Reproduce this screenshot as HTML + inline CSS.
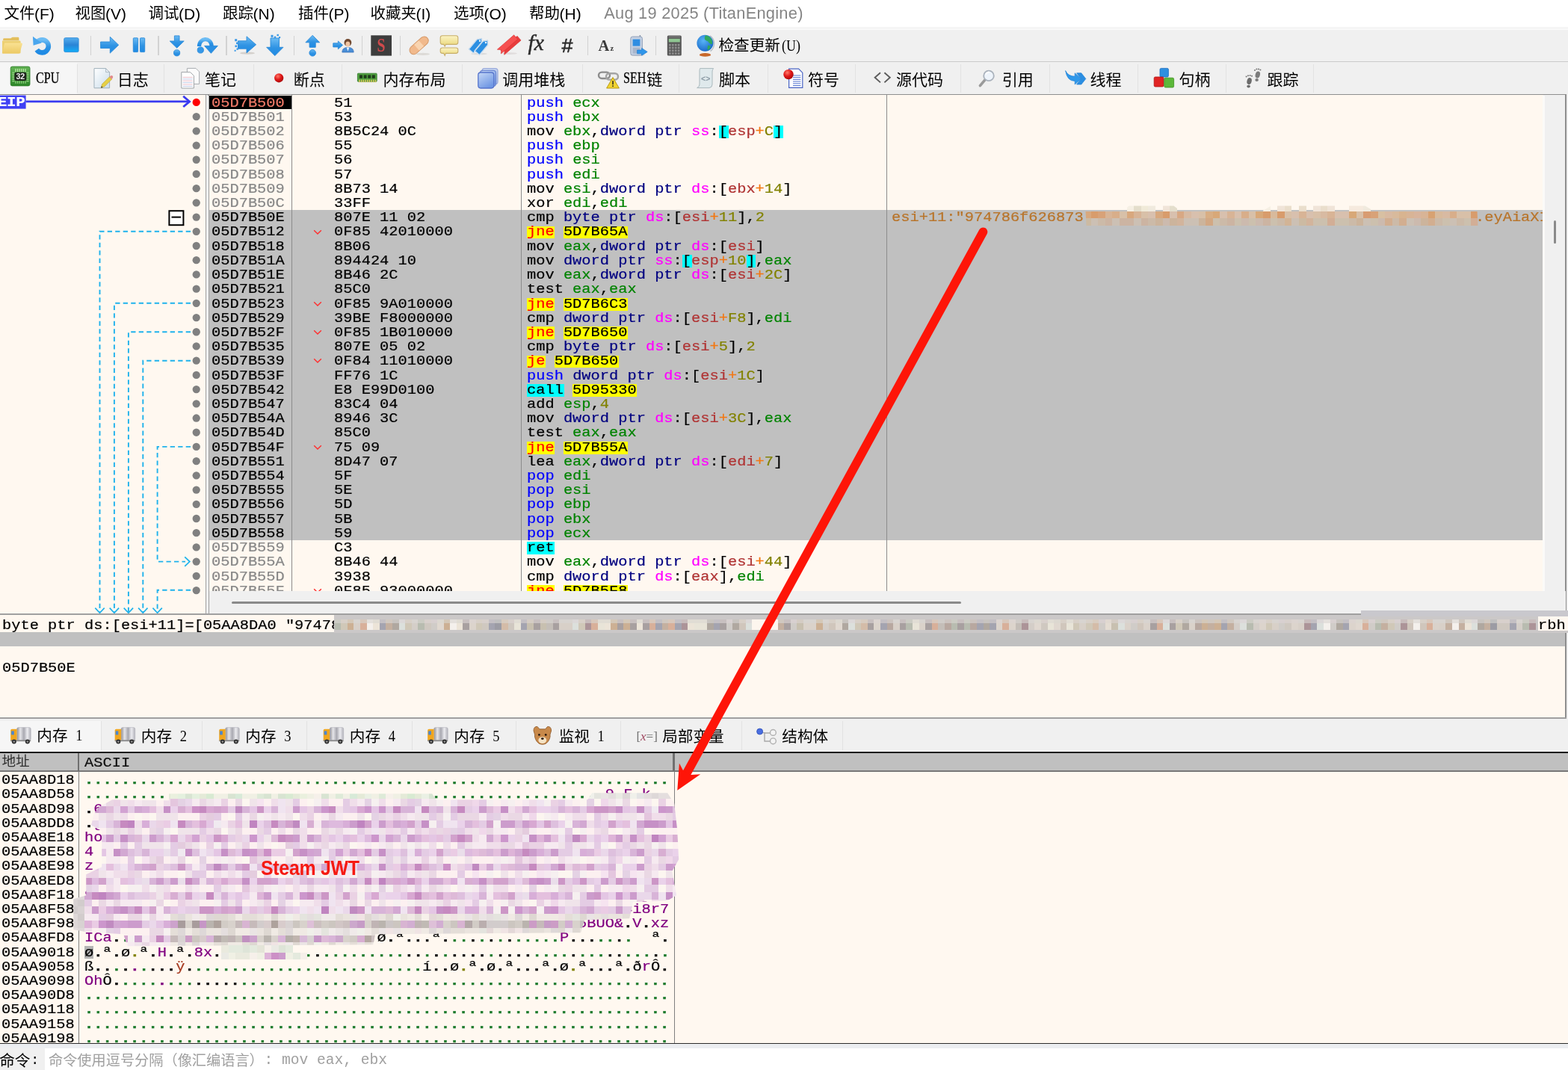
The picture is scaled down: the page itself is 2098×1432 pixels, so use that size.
<!DOCTYPE html>
<html lang="zh"><head><meta charset="utf-8"><title>x32dbg</title>
<style>
html,body{margin:0;padding:0}
body{width:2098px;height:1432px;overflow:hidden;background:#f0f0f0;position:relative;font-family:"Liberation Sans",sans-serif}
.b,.t,.m,.ht,.ic{position:absolute}
.t{white-space:pre}
.m{white-space:pre;font-family:"Liberation Mono",monospace;font-size:18.95px;height:19.21px;line-height:19.21px;transform:scaleX(1.0755);transform-origin:0 0;color:#000;-webkit-text-stroke:0.22px currentColor}
.ht{color:#000;white-space:nowrap;line-height:1;font-family:"Liberation Sans","Noto Sans CJK SC",sans-serif}
.m,.t,.ht,.ic{filter:blur(0.4px)}
.ic{overflow:visible}
</style></head><body>
<div class="b" style="left:0.00px;top:0.00px;width:2098.00px;height:36.00px;background:#ffffff;"></div>
<div class="b" style="left:0.00px;top:36.00px;width:2098.00px;height:3.00px;background:#f5f5f5;"></div>
<div class="b" style="left:0.00px;top:39.00px;width:2098.00px;height:1.20px;background:#fbfbfb;"></div>
<span class="ht" style="left:5.40px;top:8.35px;font-size:20.50px;width:41.00px">文件</span>
<span class="t" style="left:46.00px;top:5.95px;height:25.20px;line-height:25.20px;font-size:21.00px;color:#000;font-family:'Liberation Sans',sans-serif;">(F)</span>
<span class="ht" style="left:100.40px;top:8.35px;font-size:20.50px;width:41.00px">视图</span>
<span class="t" style="left:141.00px;top:5.95px;height:25.20px;line-height:25.20px;font-size:21.00px;color:#000;font-family:'Liberation Sans',sans-serif;">(V)</span>
<span class="ht" style="left:198.40px;top:8.35px;font-size:20.50px;width:41.00px">调试</span>
<span class="t" style="left:239.00px;top:5.95px;height:25.20px;line-height:25.20px;font-size:21.00px;color:#000;font-family:'Liberation Sans',sans-serif;">(D)</span>
<span class="ht" style="left:297.90px;top:8.35px;font-size:20.50px;width:41.00px">跟踪</span>
<span class="t" style="left:338.50px;top:5.95px;height:25.20px;line-height:25.20px;font-size:21.00px;color:#000;font-family:'Liberation Sans',sans-serif;">(N)</span>
<span class="ht" style="left:398.90px;top:8.35px;font-size:20.50px;width:41.00px">插件</span>
<span class="t" style="left:439.50px;top:5.95px;height:25.20px;line-height:25.20px;font-size:21.00px;color:#000;font-family:'Liberation Sans',sans-serif;">(P)</span>
<span class="ht" style="left:495.40px;top:8.35px;font-size:20.50px;width:61.50px">收藏夹</span>
<span class="t" style="left:556.50px;top:5.95px;height:25.20px;line-height:25.20px;font-size:21.00px;color:#000;font-family:'Liberation Sans',sans-serif;">(I)</span>
<span class="ht" style="left:606.90px;top:8.35px;font-size:20.50px;width:41.00px">选项</span>
<span class="t" style="left:647.50px;top:5.95px;height:25.20px;line-height:25.20px;font-size:21.00px;color:#000;font-family:'Liberation Sans',sans-serif;">(O)</span>
<span class="ht" style="left:707.90px;top:8.35px;font-size:20.50px;width:41.00px">帮助</span>
<span class="t" style="left:748.50px;top:5.95px;height:25.20px;line-height:25.20px;font-size:21.00px;color:#000;font-family:'Liberation Sans',sans-serif;">(H)</span>
<span class="t" style="left:808.20px;top:5.47px;height:26.16px;line-height:26.16px;font-size:21.80px;color:#858585;font-family:'Liberation Sans',sans-serif;letter-spacing:0.27px">Aug 19 2025 (TitanEngine)</span>
<div class="b" style="left:0.00px;top:40.20px;width:2098.00px;height:43.00px;background:#f0f0f0;"></div>
<div class="b" style="left:0.00px;top:81.90px;width:2098.00px;height:1.60px;background:#cbcbcb;"></div>
<div class="b" style="left:120.55px;top:47.50px;width:1.50px;height:26.00px;background:#d2d2d2;"></div>
<div class="b" style="left:211.45px;top:47.50px;width:1.50px;height:26.00px;background:#d2d2d2;"></div>
<div class="b" style="left:302.35px;top:47.50px;width:1.50px;height:26.00px;background:#d2d2d2;"></div>
<div class="b" style="left:392.55px;top:47.50px;width:1.50px;height:26.00px;background:#d2d2d2;"></div>
<div class="b" style="left:483.65px;top:47.50px;width:1.50px;height:26.00px;background:#d2d2d2;"></div>
<div class="b" style="left:534.55px;top:47.50px;width:1.50px;height:26.00px;background:#d2d2d2;"></div>
<div class="b" style="left:785.75px;top:47.50px;width:1.50px;height:26.00px;background:#d2d2d2;"></div>
<div class="b" style="left:876.85px;top:47.50px;width:1.50px;height:26.00px;background:#d2d2d2;"></div>
<svg class="ic" style="left:0;top:0" width="1100" height="84" viewBox="0 0 1100 84"><defs>
<linearGradient id="bl" x1="0" y1="0" x2="0" y2="1"><stop offset="0" stop-color="#6cbcf4"/><stop offset="0.55" stop-color="#2f93e3"/><stop offset="1" stop-color="#1e8ae4"/></linearGradient>
<linearGradient id="bs" x1="0" y1="0" x2="0" y2="1"><stop offset="0" stop-color="#55aeee"/><stop offset="0.5" stop-color="#2a84d6"/><stop offset="1" stop-color="#12aef8"/></linearGradient>
<linearGradient id="fo" x1="0" y1="0" x2="0" y2="1"><stop offset="0" stop-color="#f9e192"/><stop offset="1" stop-color="#ecc964"/></linearGradient>
<radialGradient id="gl" cx="0.4" cy="0.35" r="0.7"><stop offset="0" stop-color="#58b4f6"/><stop offset="1" stop-color="#1766c8"/></radialGradient>
<linearGradient id="cm" x1="0" y1="0" x2="0" y2="1"><stop offset="0" stop-color="#fbf3c4"/><stop offset="1" stop-color="#ead778"/></linearGradient>
</defs><path d="M4.2 54.2 v-1.7 q0-1.3 1.3-1.3 h8.7 l2.4-1.5 h7.4 q1.4 0 1.4 1.4 v3.1z" fill="#e3bf5c"/><path d="M3 54.6 h23.4 q1.2 0 1.2 1.2 V70.2 q0 1.3-1.3 1.3 H4.3 q-1.3 0-1.3-1.3z" fill="#edd072"/><path d="M6.2 57.6 h22.4 q1.7 0 1.2 1.6 l-3.2 10.8 q-.5 1.5-2 1.5 H3.6 q-1 0-.7-1z" fill="url(#fo)"/><path d="M50.2 56 A8.5 8.5 0 1 1 49.3 66.6" fill="none" stroke="url(#bl)" stroke-width="6.6"/><path d="M43.9 48.7 L55.6 57.4 L44.6 60.8 Z" fill="#4aa6ee"/><rect x="85.8" y="50.7" width="19.3" height="18.9" rx="1.6" fill="url(#bs)" stroke="#2b8ad8" stroke-width="0.9" stroke-linejoin="round"/><path d="M134.6 56 H147.3 V49.3 L158.7 60.2 L147.3 71.1 V64.5 H134.6 Z" fill="url(#bl)" stroke="#2b8ad8" stroke-width="0.9" stroke-linejoin="round"/><rect x="178.3" y="50.8" width="6.3" height="18.8" rx="0.8" fill="url(#bl)" stroke="#2b8ad8" stroke-width="0.9" stroke-linejoin="round"/><rect x="187.5" y="50.8" width="6.2" height="18.8" rx="0.8" fill="url(#bl)" stroke="#2b8ad8" stroke-width="0.9" stroke-linejoin="round"/><path d="M233.4 47.9 H240 V55 H246.2 L236.7 64.2 L227.3 55 H233.4 Z" fill="url(#bl)" stroke="#2b8ad8" stroke-width="0.9" stroke-linejoin="round"/><circle cx="236.6" cy="70.8" r="4.1" fill="url(#bl)" stroke="#2b8ad8" stroke-width="0.9" stroke-linejoin="round"/><path d="M266.5 62 C266.5 50.5 282 48.5 283.3 62" fill="none" stroke="url(#bl)" stroke-width="5.2"/><path d="M273.6 61.4 H291.3 L282.4 71.3 Z" fill="#2a90e4" stroke="#2b8ad8" stroke-width="0.9" stroke-linejoin="round"/><circle cx="268.3" cy="67" r="4.1" fill="#3598e8" stroke="#2b8ad8" stroke-width="0.9" stroke-linejoin="round"/><ellipse cx="331" cy="71.2" rx="10" ry="1.6" fill="#d4d0cc"/><path d="M318.5 54.8 H330 V48.8 L342.6 59.8 L330 70.8 V65.2 H318.5 Z" fill="url(#bl)" stroke="#2b8ad8" stroke-width="0.9" stroke-linejoin="round"/><rect x="314.2" y="52.2" width="3.0" height="3.0" fill="#3a98e6"/><rect x="316.0" y="56.5" width="2.6" height="2.6" fill="#3a98e6"/><rect x="314.5" y="60.5" width="2.6" height="2.6" fill="#3a98e6"/><rect x="316.5" y="64.4" width="2.4" height="2.4" fill="#3a98e6"/><rect x="313.6" y="66.8" width="2.0" height="2.0" fill="#3a98e6"/><path d="M362 51 H373.5 V63.3 H379 L367.8 74.6 L356.7 63.3 H362 Z" fill="url(#bl)" stroke="#2b8ad8" stroke-width="0.9" stroke-linejoin="round"/><rect x="362.5" y="46.8" width="3.0" height="3.0" fill="#3a98e6"/><rect x="366.8" y="48.6" width="2.4" height="2.4" fill="#3a98e6"/><rect x="370.5" y="45.8" width="2.4" height="2.4" fill="#3a98e6"/><rect x="373.0" y="49.0" width="2.2" height="2.2" fill="#3a98e6"/><path d="M418.2 47.3 L427.6 56.8 H422.2 V63.3 H414.1 V56.8 H408.9 Z" fill="url(#bl)" stroke="#2b8ad8" stroke-width="0.9" stroke-linejoin="round"/><circle cx="418.2" cy="70.8" r="4.3" fill="url(#bl)" stroke="#2b8ad8" stroke-width="0.9" stroke-linejoin="round"/><path d="M445.8 57.8 H452.4 V55 L458.5 60.4 L452.4 65.7 V62.9 H445.8Z" fill="url(#bl)" stroke="#2b8ad8" stroke-width="0.9" stroke-linejoin="round"/><path d="M457.8 70 q0-6.6 7.7-6.6 q7.7 0 7.7 6.6 z" fill="#4a8ed6" stroke="#2f6cb4" stroke-width="0.7"/><path d="M463.6 63.6 L465.5 68.5 L467.4 63.6 Z" fill="#f0f4f8"/><circle cx="465.4" cy="57" r="4.9" fill="#70482f"/><ellipse cx="465.4" cy="59" rx="3" ry="3.6" fill="#f0c4a2"/><rect x="496.3" y="47.3" width="27.7" height="27.3" fill="#3d3d3d"/><text x="0" y="69.4" text-anchor="middle" transform="translate(510.1,0) scale(0.76,1)" font-family="'Liberation Serif',serif" font-weight="bold" font-size="26" fill="#d04a4c">S</text><ellipse cx="566" cy="72.4" rx="9" ry="1.6" fill="#dcdad6"/><g transform="translate(560.6,60.8) rotate(-42)"><rect x="-15" y="-5.6" width="30" height="11.2" rx="5.6" fill="#f1b98c" stroke="#d49868" stroke-width="1"/><rect x="-4.2" y="-5.1" width="8.4" height="10.2" fill="#f9d4b0"/></g><path d="M592 47.8 h18 q2.8 0 2.8 2.8 v6 q0 2.8-2.8 2.8 h-13.6 l-1.2 2.6 l-1.4-2.6 h-1.8 q-2.8 0-2.8-2.8 v-6 q0-2.8 2.8-2.8z" fill="url(#cm)" stroke="#c7ae6a" stroke-width="1.1"/><path d="M592 64 h18 q2.8 0 2.8 2.6 v2.2 q0 2.6-2.8 2.6 h-13.6 l-1.2 3 l-1.4-3 h-1.8 q-2.8 0-2.8-2.6 v-2.2 q0-2.6 2.8-2.6z" fill="url(#cm)" stroke="#c7ae6a" stroke-width="1.1"/><ellipse cx="641" cy="72" rx="11" ry="1.5" fill="#dcdcdc"/><g transform="translate(637.3,60.2) rotate(-50)"><path d="M-11 -4.3 H6.5 L11.5 0 L6.5 4.3 H-11 Z" fill="#2c8fe2" stroke="#eef4fa" stroke-width="1.6"/><path d="M-11 -4.3 H6.5 L11.5 0 L6.5 4.3 H-11 Z" fill="none" stroke="#9ab8d4" stroke-width="0.5"/><circle cx="7.3" cy="0" r="1.2" fill="#f4f8fc"/></g><g transform="translate(645.4,62.6) rotate(-50)"><path d="M-11 -4.3 H6.5 L11.5 0 L6.5 4.3 H-11 Z" fill="#2c8fe2" stroke="#eef4fa" stroke-width="1.6"/><path d="M-11 -4.3 H6.5 L11.5 0 L6.5 4.3 H-11 Z" fill="none" stroke="#9ab8d4" stroke-width="0.5"/><circle cx="7.3" cy="0" r="1.2" fill="#f4f8fc"/></g><ellipse cx="682" cy="71.6" rx="10" ry="1.4" fill="#e0dcdc"/><g transform="translate(683.6,60.6) rotate(-41)"><path d="M-15 -3.8 H14.5 V3.8 H-15 L-11.2 0 Z" fill="#e83c3c" stroke="#d83030" stroke-width="0.6"/></g><g transform="translate(679.2,59.2) rotate(-41)"><path d="M-15 -3.8 H14.5 V3.8 H-15 L-11.2 0 Z" fill="#f65050" stroke="#d83030" stroke-width="0.6"/></g><text x="706.5" y="67.3" font-family="'Liberation Serif',serif" font-style="italic" font-size="29.5" fill="#2c2c2c" stroke="#2c2c2c" stroke-width="0.45">fx</text><text x="751.2" y="70.3" font-family="'Liberation Sans',sans-serif" font-style="italic" font-size="26.5" fill="#2c2c2c" stroke="#2c2c2c" stroke-width="0.6">#</text><text x="800.6" y="68" font-family="'Liberation Serif',serif" font-weight="bold" font-size="20.5" fill="#3a3a3a">A</text><text x="816.6" y="68" font-family="'Liberation Serif',serif" font-weight="bold" font-size="10.5" fill="#3a3a3a">z</text><ellipse cx="853" cy="73.6" rx="10" ry="1.6" fill="#dcdcdc"/><rect x="855.6" y="47" width="1.6" height="4" fill="#8a98ac"/><rect x="843.8" y="49" width="15.6" height="25" rx="2.6" fill="#c4d0e2" stroke="#8a9ab4" stroke-width="0.9"/><rect x="846.6" y="52.6" width="9.8" height="9" fill="#2f8de2"/><rect x="846.6" y="63.6" width="9.8" height="8" fill="#a8b6cc"/><path d="M852.6 67 H858.6 V64.4 L866.2 69.4 L858.6 74.3 V71.8 H852.6 Z" fill="#2f96ea" stroke="#1d7ad0" stroke-width="0.7"/><rect x="892.8" y="47.4" width="19" height="27.2" rx="1.6" fill="#585858"/><rect x="894.6" y="48.6" width="15.4" height="1.6" fill="#7c7c7c"/><rect x="894.8" y="51.8" width="15" height="4.6" fill="#8fc692"/><rect x="895.1" y="58.9" width="2.6" height="2.6" fill="#8e8e8e"/><rect x="899.0" y="58.9" width="2.6" height="2.6" fill="#8e8e8e"/><rect x="902.9" y="58.9" width="2.6" height="2.6" fill="#8e8e8e"/><rect x="906.8" y="58.9" width="2.6" height="2.6" fill="#8e8e8e"/><rect x="895.1" y="62.7" width="2.6" height="2.6" fill="#8e8e8e"/><rect x="899.0" y="62.7" width="2.6" height="2.6" fill="#8e8e8e"/><rect x="902.9" y="62.7" width="2.6" height="2.6" fill="#8e8e8e"/><rect x="906.8" y="62.7" width="2.6" height="2.6" fill="#8e8e8e"/><rect x="895.1" y="66.5" width="2.6" height="2.6" fill="#8e8e8e"/><rect x="899.0" y="66.5" width="2.6" height="2.6" fill="#8e8e8e"/><rect x="902.9" y="66.5" width="2.6" height="2.6" fill="#8e8e8e"/><rect x="906.8" y="66.5" width="2.6" height="2.6" fill="#8e8e8e"/><rect x="895.1" y="70.3" width="2.6" height="2.6" fill="#8e8e8e"/><rect x="899.0" y="70.3" width="2.6" height="2.6" fill="#8e8e8e"/><rect x="902.9" y="70.3" width="2.6" height="2.6" fill="#8e8e8e"/><rect x="906.8" y="70.3" width="2.6" height="2.6" fill="#8e8e8e"/><ellipse cx="943.5" cy="73.4" rx="7.6" ry="2.3" fill="#c8682a"/><path d="M950 48 A12.6 12.6 0 0 1 950.5 68.5" fill="none" stroke="#b8c0c8" stroke-width="1.6"/><circle cx="943.4" cy="57.8" r="11" fill="url(#gl)"/><path d="M944 47.2 q5 0.5 7.6 4.5 q2 3.5 1.5 7 q-2.5 1 -4.6-1.6 q-1-2.2-3.4-2.6 q-2.6-1.2-2.4-3.6 q0.2-2.2 1.3-3.7z" fill="#2fa860"/><path d="M947.4 60.4 q2.8 0.4 3.6 2.2 q-1.2 3.4-4 5 q-1.4-3.6 0.4-7.2z" fill="#2fa860"/></svg>
<span class="ht" style="left:961.50px;top:50.70px;font-size:20.60px;width:82.40px">检查更新</span>
<span class="t" style="left:1046.00px;top:48.60px;height:24.00px;line-height:24.00px;font-size:20.00px;color:#000;font-family:'Liberation Serif',serif;transform:scaleX(0.9);transform-origin:0 50%">(U)</span>
<div class="b" style="left:0.00px;top:84.00px;width:2098.00px;height:42.00px;background:#f0f0f0;"></div>
<div class="b" style="left:0.00px;top:84.40px;width:103.00px;height:42.00px;background:#f6f6f6;"></div>
<span class="t" style="left:48.40px;top:92.18px;height:25.44px;line-height:25.44px;font-size:21.20px;color:#000;font-family:'Liberation Serif',serif;transform:scaleX(0.76);transform-origin:0 50%;-webkit-text-stroke:0.3px #000">CPU</span>
<div class="b" style="left:103.00px;top:86.00px;width:1.00px;height:38.00px;background:#e2e2e2;"></div>
<span class="ht" style="left:156.70px;top:96.10px;font-size:21.00px;width:42.00px">日志</span>
<div class="b" style="left:219.00px;top:86.00px;width:1.00px;height:38.00px;background:#e2e2e2;"></div>
<span class="ht" style="left:274.00px;top:96.10px;font-size:21.00px;width:42.00px">笔记</span>
<div class="b" style="left:338.50px;top:86.00px;width:1.00px;height:38.00px;background:#e2e2e2;"></div>
<span class="ht" style="left:392.70px;top:96.10px;font-size:21.00px;width:42.00px">断点</span>
<div class="b" style="left:456.70px;top:86.00px;width:1.00px;height:38.00px;background:#e2e2e2;"></div>
<span class="ht" style="left:512.40px;top:96.10px;font-size:21.00px;width:84.00px">内存布局</span>
<div class="b" style="left:617.60px;top:86.00px;width:1.00px;height:38.00px;background:#e2e2e2;"></div>
<span class="ht" style="left:672.20px;top:96.10px;font-size:21.00px;width:84.00px">调用堆栈</span>
<div class="b" style="left:778.90px;top:86.00px;width:1.00px;height:38.00px;background:#e2e2e2;"></div>
<span class="t" style="left:834.40px;top:92.18px;height:25.44px;line-height:25.44px;font-size:21.20px;color:#000;font-family:'Liberation Serif',serif;transform:scaleX(0.76);transform-origin:0 50%;-webkit-text-stroke:0.3px #000">SEH</span>
<span class="ht" style="left:865.20px;top:96.10px;font-size:21.00px;width:21.00px">链</span>
<div class="b" style="left:907.50px;top:86.00px;width:1.00px;height:38.00px;background:#e2e2e2;"></div>
<span class="ht" style="left:962.10px;top:96.10px;font-size:21.00px;width:42.00px">脚本</span>
<div class="b" style="left:1026.50px;top:86.00px;width:1.00px;height:38.00px;background:#e2e2e2;"></div>
<span class="ht" style="left:1081.10px;top:96.10px;font-size:21.00px;width:42.00px">符号</span>
<div class="b" style="left:1144.30px;top:86.00px;width:1.00px;height:38.00px;background:#e2e2e2;"></div>
<span class="ht" style="left:1199.10px;top:96.10px;font-size:21.00px;width:63.00px">源代码</span>
<div class="b" style="left:1285.00px;top:86.00px;width:1.00px;height:38.00px;background:#e2e2e2;"></div>
<span class="ht" style="left:1340.80px;top:96.10px;font-size:21.00px;width:42.00px">引用</span>
<div class="b" style="left:1403.50px;top:86.00px;width:1.00px;height:38.00px;background:#e2e2e2;"></div>
<span class="ht" style="left:1458.40px;top:96.10px;font-size:21.00px;width:42.00px">线程</span>
<div class="b" style="left:1521.90px;top:86.00px;width:1.00px;height:38.00px;background:#e2e2e2;"></div>
<span class="ht" style="left:1577.40px;top:96.10px;font-size:21.00px;width:42.00px">句柄</span>
<div class="b" style="left:1640.30px;top:86.00px;width:1.00px;height:38.00px;background:#e2e2e2;"></div>
<span class="ht" style="left:1695.40px;top:96.10px;font-size:21.00px;width:42.00px">跟踪</span>
<div class="b" style="left:1756.60px;top:86.00px;width:1.00px;height:38.00px;background:#e2e2e2;"></div>
<svg class="ic" style="left:0;top:0" width="1800" height="127" viewBox="0 0 1800 127"><defs>
<linearGradient id="gch" x1="0" y1="0" x2="0" y2="1"><stop offset="0" stop-color="#62b254"/><stop offset="1" stop-color="#2c8628"/></linearGradient>
<linearGradient id="pg" x1="0" y1="0" x2="1" y2="1"><stop offset="0" stop-color="#ffffff"/><stop offset="1" stop-color="#c9dcea"/></linearGradient>
<radialGradient id="rb" cx="0.38" cy="0.32" r="0.75"><stop offset="0" stop-color="#ff7a6a"/><stop offset="0.5" stop-color="#e01818"/><stop offset="1" stop-color="#a00808"/></radialGradient>
<linearGradient id="sq" x1="0" y1="0" x2="0.6" y2="1"><stop offset="0" stop-color="#c6d8f6"/><stop offset="1" stop-color="#6f97e4"/></linearGradient>
<linearGradient id="gy" x1="0" y1="0" x2="0" y2="1"><stop offset="0" stop-color="#d8d8d8"/><stop offset="1" stop-color="#909090"/></linearGradient>
</defs><rect x="14.2" y="89.1" width="25.8" height="25.8" rx="2.2" fill="url(#gch)" stroke="#2a7a26" stroke-width="0.8"/><rect x="20.3" y="92" width="1.3" height="4.2" fill="#b8e6a4"/><rect x="20.3" y="108.4" width="1.3" height="3.4" fill="#8ccc7c"/><rect x="16.3" y="96.6" width="3.2" height="1.2" fill="#9cd68a"/><rect x="35.4" y="96.6" width="3.2" height="1.2" fill="#9cd68a"/><rect x="22.9" y="92" width="1.3" height="4.2" fill="#b8e6a4"/><rect x="22.9" y="108.4" width="1.3" height="3.4" fill="#8ccc7c"/><rect x="16.3" y="98.9" width="3.2" height="1.2" fill="#9cd68a"/><rect x="35.4" y="98.9" width="3.2" height="1.2" fill="#9cd68a"/><rect x="25.5" y="92" width="1.3" height="4.2" fill="#b8e6a4"/><rect x="25.5" y="108.4" width="1.3" height="3.4" fill="#8ccc7c"/><rect x="16.3" y="101.2" width="3.2" height="1.2" fill="#9cd68a"/><rect x="35.4" y="101.2" width="3.2" height="1.2" fill="#9cd68a"/><rect x="28.1" y="92" width="1.3" height="4.2" fill="#b8e6a4"/><rect x="28.1" y="108.4" width="1.3" height="3.4" fill="#8ccc7c"/><rect x="16.3" y="103.5" width="3.2" height="1.2" fill="#9cd68a"/><rect x="35.4" y="103.5" width="3.2" height="1.2" fill="#9cd68a"/><rect x="30.7" y="92" width="1.3" height="4.2" fill="#b8e6a4"/><rect x="30.7" y="108.4" width="1.3" height="3.4" fill="#8ccc7c"/><rect x="16.3" y="105.8" width="3.2" height="1.2" fill="#9cd68a"/><rect x="35.4" y="105.8" width="3.2" height="1.2" fill="#9cd68a"/><rect x="33.3" y="92" width="1.3" height="4.2" fill="#b8e6a4"/><rect x="33.3" y="108.4" width="1.3" height="3.4" fill="#8ccc7c"/><rect x="16.3" y="108.1" width="3.2" height="1.2" fill="#9cd68a"/><rect x="35.4" y="108.1" width="3.2" height="1.2" fill="#9cd68a"/><rect x="19.3" y="96.8" width="16" height="11.2" rx="2.2" fill="#1e261c"/><text x="27.3" y="106.2" text-anchor="middle" font-family="'Liberation Sans',sans-serif" font-weight="bold" font-size="10.6" fill="#f0f0f0">32</text><path d="M126 91.6 H141.6 L146.6 96.6 V117.8 H126 Z" fill="url(#pg)" stroke="#9fb0ba" stroke-width="1"/><path d="M141.6 91.6 V96.6 H146.6 Z" fill="#e6eef4" stroke="#9fb0ba" stroke-width="0.8"/><path d="M135.2 117.6 L136.6 112.6 L146.4 103 L149.6 106 L139.9 115.8 Z" fill="#e6d044" stroke="#b8a030" stroke-width="0.6"/><path d="M146.4 103 L148 101.4 q1.4-1 2.6 0.2 q1.2 1.4 0.2 2.6 L149.6 106 Z" fill="#e28a8a"/><path d="M135.2 117.6 L135.9 115.2 L137.6 116.9 Z" fill="#303030"/><path d="M250.4 91.4 H262 L266.6 96 V112.4 H250.4 Z" fill="#fbfbfb" stroke="#a8acb0" stroke-width="1"/><path d="M242.8 96.6 H254.6 L259.4 101.4 V118 H242.8 Z" fill="#ffffff" stroke="#a0a4a8" stroke-width="1"/><path d="M244.6 103.4 H257.6" stroke="#e4a4b4" stroke-width="0.7"/><path d="M244.6 105.8 H257.6" stroke="#a8b8e0" stroke-width="0.7"/><path d="M244.6 108.2 H257.6" stroke="#e4a4b4" stroke-width="0.7"/><path d="M244.6 110.6 H257.6" stroke="#a8b8e0" stroke-width="0.7"/><path d="M244.6 113.0 H257.6" stroke="#e4a4b4" stroke-width="0.7"/><path d="M244.6 115.4 H257.6" stroke="#a8b8e0" stroke-width="0.7"/><circle cx="373.2" cy="104.3" r="6.1" fill="url(#rb)"/><rect x="478.4" y="98.2" width="25.8" height="11" rx="0.8" fill="#4e9e3e" stroke="#2f7a28" stroke-width="0.8"/><rect x="481.0" y="100.4" width="4" height="4.4" fill="#1e3a1a"/><rect x="486.6" y="100.4" width="4" height="4.4" fill="#1e3a1a"/><rect x="492.2" y="100.4" width="4" height="4.4" fill="#1e3a1a"/><rect x="497.8" y="100.4" width="4" height="4.4" fill="#1e3a1a"/><rect x="480.2" y="106.6" width="1.5" height="3.6" fill="#e0c860"/><rect x="482.9" y="106.6" width="1.5" height="3.6" fill="#e0c860"/><rect x="485.6" y="106.6" width="1.5" height="3.6" fill="#e0c860"/><rect x="488.3" y="106.6" width="1.5" height="3.6" fill="#e0c860"/><rect x="491.0" y="106.6" width="1.5" height="3.6" fill="#e0c860"/><rect x="493.7" y="106.6" width="1.5" height="3.6" fill="#e0c860"/><rect x="496.4" y="106.6" width="1.5" height="3.6" fill="#e0c860"/><rect x="499.1" y="106.6" width="1.5" height="3.6" fill="#e0c860"/><rect x="501.8" y="106.6" width="1.5" height="3.6" fill="#e0c860"/><rect x="645.0" y="91.6" width="21" height="21" rx="3.4" fill="url(#sq)" stroke="#5674cc" stroke-width="1.3" opacity="0.55"/><rect x="642.4" y="94.3" width="21" height="21" rx="3.4" fill="url(#sq)" stroke="#5674cc" stroke-width="1.3" opacity="0.80"/><rect x="639.8" y="97.0" width="21" height="21" rx="3.4" fill="url(#sq)" stroke="#5674cc" stroke-width="1.3" opacity="1.00"/><rect x="801" y="96.6" width="15" height="8.4" rx="4.2" fill="none" stroke="#8c8c8c" stroke-width="2.4"/><rect x="811" y="98.2" width="16" height="8.4" rx="4.2" fill="none" stroke="#a4a4a4" stroke-width="2.4"/><path d="M820 103.6 L828.4 118 H811.6 Z" fill="#f2d430" stroke="#b89a18" stroke-width="1" stroke-linejoin="round"/><rect x="819.3" y="108.2" width="1.5" height="5" fill="#202020"/><rect x="819.3" y="114.4" width="1.5" height="1.6" fill="#202020"/><path d="M936.6 91.6 H954.6 q-1.6 2-1.6 4.4 V113 q0 4-4 4.6 H932.6 q3.4-1.4 3.4-4.6 V95 q0-2 0.6-3.4z" fill="#dfe9ec" stroke="#a9b8bc" stroke-width="1"/><text x="944.2" y="109.4" text-anchor="middle" font-family="'Liberation Sans',sans-serif" font-size="10.5" font-weight="bold" fill="#8a9aa4">&lt;&gt;</text><path d="M1055.6 92.2 H1068.6 L1073.8 97.4 V117.4 H1055.6 Z" fill="#fdfdff" stroke="#4a64c4" stroke-width="1.2"/><path d="M1061 101.0 H1071.4" stroke="#5878d0" stroke-width="1"/><path d="M1061 103.7 H1071.4" stroke="#5878d0" stroke-width="1"/><path d="M1061 106.4 H1071.4" stroke="#5878d0" stroke-width="1"/><path d="M1061 109.1 H1071.4" stroke="#5878d0" stroke-width="1"/><path d="M1061 111.8 H1071.4" stroke="#5878d0" stroke-width="1"/><path d="M1061 114.5 H1071.4" stroke="#5878d0" stroke-width="1"/><circle cx="1055" cy="99.6" r="6.7" fill="url(#rb)"/><path d="M1178 97.2 L1170.6 103.8 L1178 110.4 M1183.4 97.2 L1190.8 103.8 L1183.4 110.4" fill="none" stroke="#5c5c5c" stroke-width="1.9"/><path d="M1318.4 106.4 L1311.4 114.6" stroke="#9a9a9a" stroke-width="3.6" stroke-linecap="round"/><circle cx="1323" cy="101.4" r="6.8" fill="#eef4fb" stroke="#aab2bc" stroke-width="1.8"/><path d="M1319 99.6 q1.4-3 4.8-3.2" fill="none" stroke="#ffffff" stroke-width="1.6"/><path d="M1425.6 94.6 q3.6 7.6 12.6 7.6 v-4.4 l8.4 7.6 l-8.4 7.6 v-4.6 q-10.2 0.4-12.6-13.8z" fill="#2f98ea" stroke="#1f7fd4" stroke-width="0.7"/><path d="M1440.6 97.8 l6.2 0 l6 7.6 l-6 7.6 l-6.2 0 l6-7.6z" fill="#2b8ee2" stroke="#1f7fd4" stroke-width="0.7"/><rect x="1552" y="91.4" width="11.4" height="11.6" rx="1.6" fill="#2f8fe0" stroke="#1c6cc0" stroke-width="0.8"/><rect x="1544.2" y="103" width="12.8" height="13" rx="1.6" fill="#e02424" stroke="#b01010" stroke-width="0.8"/><rect x="1557.8" y="104.2" width="12.8" height="12.8" rx="1.6" fill="#5cb83a" stroke="#3c9020" stroke-width="0.8"/><ellipse cx="1671.6" cy="108.6" rx="3.1" ry="4.6" transform="rotate(14 1671.6 108.6)" fill="#6c6c6c"/><ellipse cx="1670.6" cy="115.6" rx="2.3" ry="1.9" fill="#6c6c6c"/><ellipse cx="1682.8" cy="100" rx="3.1" ry="4.6" transform="rotate(14 1682.8 100)" fill="#7c7c7c"/><ellipse cx="1681.6" cy="107" rx="2.3" ry="1.9" fill="#7c7c7c"/><circle cx="1667.6" cy="102.6" r="1" fill="#747474"/><circle cx="1670.0" cy="101.2" r="1" fill="#747474"/><circle cx="1672.6" cy="101.0" r="1" fill="#747474"/><circle cx="1675.0" cy="101.8" r="1" fill="#747474"/><circle cx="1679.0" cy="94.0" r="1" fill="#747474"/><circle cx="1681.4" cy="92.6" r="1" fill="#747474"/><circle cx="1684.0" cy="92.4" r="1" fill="#747474"/><circle cx="1686.4" cy="93.4" r="1" fill="#747474"/></svg>
<div class="b" style="left:0.00px;top:126.00px;width:2096.10px;height:1.60px;background:#8e8e8e;"></div>
<div class="b" style="left:0.00px;top:127.00px;width:275.00px;height:695.00px;background:#fff8f0;"></div>
<div class="b" style="left:274.70px;top:127.00px;width:1.60px;height:696.00px;background:#a0a0a0;"></div>
<div class="b" style="left:276.30px;top:127.00px;width:2.20px;height:696.00px;background:#f0f0f0;"></div>
<div class="b" style="left:278.50px;top:127.00px;width:1.20px;height:696.00px;background:#a0a0a0;"></div>
<div class="b" style="left:279.70px;top:127.00px;width:1785.60px;height:663.50px;background:#fff8f0;"></div>
<div class="b" style="left:279.70px;top:281.18px;width:1785.60px;height:441.83px;background:#c0c0c0;"></div>
<div class="b" style="left:390.00px;top:127.00px;width:1.20px;height:663.50px;background:#8c8c8c;"></div>
<div class="b" style="left:697.00px;top:127.00px;width:1.20px;height:663.50px;background:#8c8c8c;"></div>
<div class="b" style="left:1186.20px;top:127.00px;width:1.20px;height:663.50px;background:#8c8c8c;"></div>
<div class="b" style="left:279.70px;top:127.50px;width:110.30px;height:18.71px;background:#000000;"></div>
<div class="b" style="left:0;top:127px;width:2066px;height:663.5px;overflow:hidden">
<div class="m" style="left:283.30px;top:1.60px;"><span style="color:#f07a68">05D7B500</span></div>
<div class="m" style="left:447.40px;top:1.60px;">51</div>
<div class="m" style="left:705.30px;top:1.60px;"><span style="color:#0000ff">push</span> <span style="color:#008300">ecx</span></div>
<div class="m" style="left:283.30px;top:20.81px;"><span style="color:#888888">05D7B501</span></div>
<div class="m" style="left:447.40px;top:20.81px;">53</div>
<div class="m" style="left:705.30px;top:20.81px;"><span style="color:#0000ff">push</span> <span style="color:#008300">ebx</span></div>
<div class="m" style="left:283.30px;top:40.02px;"><span style="color:#888888">05D7B502</span></div>
<div class="m" style="left:447.40px;top:40.02px;">8B5C24 0C</div>
<div class="b" style="left:961.83px;top:41.32px;width:12.83px;height:16.71px;background:#00ffff;"></div>
<div class="b" style="left:1035.21px;top:41.32px;width:12.83px;height:16.71px;background:#00ffff;"></div>
<div class="m" style="left:705.30px;top:40.02px;">mov <span style="color:#008300">ebx</span>,<span style="color:#000080">dword ptr</span> <span style="color:#ff00ff">ss</span>:[<span style="color:#b03434">esp</span><span style="color:#f27711">+</span><span style="color:#828200">C</span>]</div>
<div class="m" style="left:283.30px;top:59.23px;"><span style="color:#888888">05D7B506</span></div>
<div class="m" style="left:447.40px;top:59.23px;">55</div>
<div class="m" style="left:705.30px;top:59.23px;"><span style="color:#0000ff">push</span> <span style="color:#008300">ebp</span></div>
<div class="m" style="left:283.30px;top:78.44px;"><span style="color:#888888">05D7B507</span></div>
<div class="m" style="left:447.40px;top:78.44px;">56</div>
<div class="m" style="left:705.30px;top:78.44px;"><span style="color:#0000ff">push</span> <span style="color:#008300">esi</span></div>
<div class="m" style="left:283.30px;top:97.65px;"><span style="color:#888888">05D7B508</span></div>
<div class="m" style="left:447.40px;top:97.65px;">57</div>
<div class="m" style="left:705.30px;top:97.65px;"><span style="color:#0000ff">push</span> <span style="color:#008300">edi</span></div>
<div class="m" style="left:283.30px;top:116.86px;"><span style="color:#888888">05D7B509</span></div>
<div class="m" style="left:447.40px;top:116.86px;">8B73 14</div>
<div class="m" style="left:705.30px;top:116.86px;">mov <span style="color:#008300">esi</span>,<span style="color:#000080">dword ptr</span> <span style="color:#ff00ff">ds</span>:[<span style="color:#b03434">ebx</span><span style="color:#f27711">+</span><span style="color:#828200">14</span>]</div>
<div class="m" style="left:283.30px;top:136.07px;"><span style="color:#888888">05D7B50C</span></div>
<div class="m" style="left:447.40px;top:136.07px;">33FF</div>
<div class="m" style="left:705.30px;top:136.07px;">xor <span style="color:#008300">edi</span>,<span style="color:#008300">edi</span></div>
<div class="m" style="left:283.30px;top:155.28px;">05D7B50E</div>
<div class="m" style="left:447.40px;top:155.28px;">807E 11 02</div>
<div class="m" style="left:705.30px;top:155.28px;">cmp <span style="color:#000080">byte ptr</span> <span style="color:#ff00ff">ds</span>:[<span style="color:#b03434">esi</span><span style="color:#f27711">+</span><span style="color:#828200">11</span>],<span style="color:#828200">2</span></div>
<div class="m" style="left:283.30px;top:174.49px;">05D7B512</div>
<div class="m" style="left:447.40px;top:174.49px;">0F85 42010000</div>
<svg class="ic" style="left:419.3px;top:179.5px" width="12" height="8" viewBox="0 0 12 8"><path d="M1.2 1.2 L6 6 L10.8 1.2" fill="none" stroke="#ff3030" stroke-width="1.5"/></svg>
<div class="b" style="left:705.00px;top:175.79px;width:37.29px;height:16.71px;background:#ffff00;"></div>
<div class="b" style="left:753.92px;top:175.79px;width:86.21px;height:16.71px;background:#ffff00;"></div>
<div class="m" style="left:705.30px;top:174.49px;"><span style="color:#ff0000">jne</span> 5D7B65A</div>
<div class="m" style="left:283.30px;top:193.70px;">05D7B518</div>
<div class="m" style="left:447.40px;top:193.70px;">8B06</div>
<div class="m" style="left:705.30px;top:193.70px;">mov <span style="color:#008300">eax</span>,<span style="color:#000080">dword ptr</span> <span style="color:#ff00ff">ds</span>:[<span style="color:#b03434">esi</span>]</div>
<div class="m" style="left:283.30px;top:212.91px;">05D7B51A</div>
<div class="m" style="left:447.40px;top:212.91px;">894424 10</div>
<div class="b" style="left:912.91px;top:214.21px;width:12.83px;height:16.71px;background:#00ffff;"></div>
<div class="b" style="left:998.52px;top:214.21px;width:12.83px;height:16.71px;background:#00ffff;"></div>
<div class="m" style="left:705.30px;top:212.91px;">mov <span style="color:#000080">dword ptr</span> <span style="color:#ff00ff">ss</span>:[<span style="color:#b03434">esp</span><span style="color:#f27711">+</span><span style="color:#828200">10</span>],<span style="color:#008300">eax</span></div>
<div class="m" style="left:283.30px;top:232.12px;">05D7B51E</div>
<div class="m" style="left:447.40px;top:232.12px;">8B46 2C</div>
<div class="m" style="left:705.30px;top:232.12px;">mov <span style="color:#008300">eax</span>,<span style="color:#000080">dword ptr</span> <span style="color:#ff00ff">ds</span>:[<span style="color:#b03434">esi</span><span style="color:#f27711">+</span><span style="color:#828200">2C</span>]</div>
<div class="m" style="left:283.30px;top:251.33px;">05D7B521</div>
<div class="m" style="left:447.40px;top:251.33px;">85C0</div>
<div class="m" style="left:705.30px;top:251.33px;">test <span style="color:#008300">eax</span>,<span style="color:#008300">eax</span></div>
<div class="m" style="left:283.30px;top:270.54px;">05D7B523</div>
<div class="m" style="left:447.40px;top:270.54px;">0F85 9A010000</div>
<svg class="ic" style="left:419.3px;top:275.5px" width="12" height="8" viewBox="0 0 12 8"><path d="M1.2 1.2 L6 6 L10.8 1.2" fill="none" stroke="#ff3030" stroke-width="1.5"/></svg>
<div class="b" style="left:705.00px;top:271.84px;width:37.29px;height:16.71px;background:#ffff00;"></div>
<div class="b" style="left:753.92px;top:271.84px;width:86.21px;height:16.71px;background:#ffff00;"></div>
<div class="m" style="left:705.30px;top:270.54px;"><span style="color:#ff0000">jne</span> 5D7B6C3</div>
<div class="m" style="left:283.30px;top:289.75px;">05D7B529</div>
<div class="m" style="left:447.40px;top:289.75px;">39BE F8000000</div>
<div class="m" style="left:705.30px;top:289.75px;">cmp <span style="color:#000080">dword ptr</span> <span style="color:#ff00ff">ds</span>:[<span style="color:#b03434">esi</span><span style="color:#f27711">+</span><span style="color:#828200">F8</span>],<span style="color:#008300">edi</span></div>
<div class="m" style="left:283.30px;top:308.96px;">05D7B52F</div>
<div class="m" style="left:447.40px;top:308.96px;">0F85 1B010000</div>
<svg class="ic" style="left:419.3px;top:314.0px" width="12" height="8" viewBox="0 0 12 8"><path d="M1.2 1.2 L6 6 L10.8 1.2" fill="none" stroke="#ff3030" stroke-width="1.5"/></svg>
<div class="b" style="left:705.00px;top:310.26px;width:37.29px;height:16.71px;background:#ffff00;"></div>
<div class="b" style="left:753.92px;top:310.26px;width:86.21px;height:16.71px;background:#ffff00;"></div>
<div class="m" style="left:705.30px;top:308.96px;"><span style="color:#ff0000">jne</span> 5D7B650</div>
<div class="m" style="left:283.30px;top:328.17px;">05D7B535</div>
<div class="m" style="left:447.40px;top:328.17px;">807E 05 02</div>
<div class="m" style="left:705.30px;top:328.17px;">cmp <span style="color:#000080">byte ptr</span> <span style="color:#ff00ff">ds</span>:[<span style="color:#b03434">esi</span><span style="color:#f27711">+</span><span style="color:#828200">5</span>],<span style="color:#828200">2</span></div>
<div class="m" style="left:283.30px;top:347.38px;">05D7B539</div>
<div class="m" style="left:447.40px;top:347.38px;">0F84 11010000</div>
<svg class="ic" style="left:419.3px;top:352.4px" width="12" height="8" viewBox="0 0 12 8"><path d="M1.2 1.2 L6 6 L10.8 1.2" fill="none" stroke="#ff3030" stroke-width="1.5"/></svg>
<div class="b" style="left:705.00px;top:348.68px;width:25.06px;height:16.71px;background:#ffff00;"></div>
<div class="b" style="left:741.69px;top:348.68px;width:86.21px;height:16.71px;background:#ffff00;"></div>
<div class="m" style="left:705.30px;top:347.38px;"><span style="color:#ff0000">je</span> 5D7B650</div>
<div class="m" style="left:283.30px;top:366.59px;">05D7B53F</div>
<div class="m" style="left:447.40px;top:366.59px;">FF76 1C</div>
<div class="m" style="left:705.30px;top:366.59px;"><span style="color:#0000ff">push</span> <span style="color:#000080">dword ptr</span> <span style="color:#ff00ff">ds</span>:[<span style="color:#b03434">esi</span><span style="color:#f27711">+</span><span style="color:#828200">1C</span>]</div>
<div class="m" style="left:283.30px;top:385.80px;">05D7B542</div>
<div class="m" style="left:447.40px;top:385.80px;">E8 E99D0100</div>
<div class="b" style="left:705.00px;top:387.10px;width:49.52px;height:16.71px;background:#00ffff;"></div>
<div class="b" style="left:766.15px;top:387.10px;width:86.21px;height:16.71px;background:#ffff00;"></div>
<div class="m" style="left:705.30px;top:385.80px;">call 5D95330</div>
<div class="m" style="left:283.30px;top:405.01px;">05D7B547</div>
<div class="m" style="left:447.40px;top:405.01px;">83C4 04</div>
<div class="m" style="left:705.30px;top:405.01px;">add <span style="color:#008300">esp</span>,<span style="color:#828200">4</span></div>
<div class="m" style="left:283.30px;top:424.22px;">05D7B54A</div>
<div class="m" style="left:447.40px;top:424.22px;">8946 3C</div>
<div class="m" style="left:705.30px;top:424.22px;">mov <span style="color:#000080">dword ptr</span> <span style="color:#ff00ff">ds</span>:[<span style="color:#b03434">esi</span><span style="color:#f27711">+</span><span style="color:#828200">3C</span>],<span style="color:#008300">eax</span></div>
<div class="m" style="left:283.30px;top:443.43px;">05D7B54D</div>
<div class="m" style="left:447.40px;top:443.43px;">85C0</div>
<div class="m" style="left:705.30px;top:443.43px;">test <span style="color:#008300">eax</span>,<span style="color:#008300">eax</span></div>
<div class="m" style="left:283.30px;top:462.64px;">05D7B54F</div>
<div class="m" style="left:447.40px;top:462.64px;">75 09</div>
<svg class="ic" style="left:419.3px;top:467.6px" width="12" height="8" viewBox="0 0 12 8"><path d="M1.2 1.2 L6 6 L10.8 1.2" fill="none" stroke="#ff3030" stroke-width="1.5"/></svg>
<div class="b" style="left:705.00px;top:463.94px;width:37.29px;height:16.71px;background:#ffff00;"></div>
<div class="b" style="left:753.92px;top:463.94px;width:86.21px;height:16.71px;background:#ffff00;"></div>
<div class="m" style="left:705.30px;top:462.64px;"><span style="color:#ff0000">jne</span> 5D7B55A</div>
<div class="m" style="left:283.30px;top:481.85px;">05D7B551</div>
<div class="m" style="left:447.40px;top:481.85px;">8D47 07</div>
<div class="m" style="left:705.30px;top:481.85px;">lea <span style="color:#008300">eax</span>,<span style="color:#000080">dword ptr</span> <span style="color:#ff00ff">ds</span>:[<span style="color:#b03434">edi</span><span style="color:#f27711">+</span><span style="color:#828200">7</span>]</div>
<div class="m" style="left:283.30px;top:501.06px;">05D7B554</div>
<div class="m" style="left:447.40px;top:501.06px;">5F</div>
<div class="m" style="left:705.30px;top:501.06px;"><span style="color:#0000ff">pop</span> <span style="color:#008300">edi</span></div>
<div class="m" style="left:283.30px;top:520.27px;">05D7B555</div>
<div class="m" style="left:447.40px;top:520.27px;">5E</div>
<div class="m" style="left:705.30px;top:520.27px;"><span style="color:#0000ff">pop</span> <span style="color:#008300">esi</span></div>
<div class="m" style="left:283.30px;top:539.48px;">05D7B556</div>
<div class="m" style="left:447.40px;top:539.48px;">5D</div>
<div class="m" style="left:705.30px;top:539.48px;"><span style="color:#0000ff">pop</span> <span style="color:#008300">ebp</span></div>
<div class="m" style="left:283.30px;top:558.69px;">05D7B557</div>
<div class="m" style="left:447.40px;top:558.69px;">5B</div>
<div class="m" style="left:705.30px;top:558.69px;"><span style="color:#0000ff">pop</span> <span style="color:#008300">ebx</span></div>
<div class="m" style="left:283.30px;top:577.90px;">05D7B558</div>
<div class="m" style="left:447.40px;top:577.90px;">59</div>
<div class="m" style="left:705.30px;top:577.90px;"><span style="color:#0000ff">pop</span> <span style="color:#008300">ecx</span></div>
<div class="m" style="left:283.30px;top:597.11px;"><span style="color:#888888">05D7B559</span></div>
<div class="m" style="left:447.40px;top:597.11px;">C3</div>
<div class="b" style="left:705.00px;top:598.41px;width:37.29px;height:16.71px;background:#00ffff;"></div>
<div class="m" style="left:705.30px;top:597.11px;">ret</div>
<div class="m" style="left:283.30px;top:616.32px;"><span style="color:#888888">05D7B55A</span></div>
<div class="m" style="left:447.40px;top:616.32px;">8B46 44</div>
<div class="m" style="left:705.30px;top:616.32px;">mov <span style="color:#008300">eax</span>,<span style="color:#000080">dword ptr</span> <span style="color:#ff00ff">ds</span>:[<span style="color:#b03434">esi</span><span style="color:#f27711">+</span><span style="color:#828200">44</span>]</div>
<div class="m" style="left:283.30px;top:635.53px;"><span style="color:#888888">05D7B55D</span></div>
<div class="m" style="left:447.40px;top:635.53px;">3938</div>
<div class="m" style="left:705.30px;top:635.53px;">cmp <span style="color:#000080">dword ptr</span> <span style="color:#ff00ff">ds</span>:[<span style="color:#b03434">eax</span>],<span style="color:#008300">edi</span></div>
<div class="m" style="left:283.30px;top:654.74px;"><span style="color:#888888">05D7B55F</span></div>
<div class="m" style="left:447.40px;top:654.74px;">0F85 93000000</div>
<svg class="ic" style="left:419.3px;top:659.7px" width="12" height="8" viewBox="0 0 12 8"><path d="M1.2 1.2 L6 6 L10.8 1.2" fill="none" stroke="#ff3030" stroke-width="1.5"/></svg>
<div class="b" style="left:705.00px;top:656.04px;width:37.29px;height:16.71px;background:#ffff00;"></div>
<div class="b" style="left:753.92px;top:656.04px;width:86.21px;height:16.71px;background:#ffff00;"></div>
<div class="m" style="left:705.30px;top:654.74px;"><span style="color:#ff0000">jne</span> 5D7B5F8</div>
</div>
<div class="m" style="left:1193.40px;top:282.28px;"><span style="color:#b8742a">esi+11:"974786f626873</span></div>
<div class="m" style="left:1973.50px;top:282.28px;width:85px;overflow:hidden"><span style="color:#b8742a">.eyAiaXI</span></div>
<div class="b" style="left:2065.30px;top:127.00px;width:29.70px;height:695.00px;background:#f0f0f0;"></div>
<div class="b" style="left:2079.00px;top:295.00px;width:3.00px;height:31.00px;background:#8a8a8a;border-radius:1.5px"></div>
<div class="b" style="left:2063.80px;top:127.60px;width:3.20px;height:663.00px;background:#fbfaf8;"></div>
<div class="b" style="left:2094.20px;top:126.00px;width:1.90px;height:836.00px;background:#8e8e8e;"></div>
<div class="b" style="left:279.70px;top:790.50px;width:1815.00px;height:31.50px;background:#f0f0f0;"></div>
<div class="b" style="left:309.70px;top:804.90px;width:976.00px;height:3.00px;background:#8a8a8a;border-radius:1.5px"></div>
<svg class="ic" style="left:0;top:0" width="276" height="823" viewBox="0 0 276 823"><rect x="0" y="127.6" width="34.6" height="18" fill="#4040f4"/><path d="M34.6 135.9 H252.5" stroke="#3a3af0" stroke-width="2.6" fill="none"/><path d="M245.2 128.8 L253.6 135.9 L245.2 143" stroke="#3a3af0" stroke-width="2.8" fill="none" stroke-linejoin="miter"/><circle cx="262.7" cy="136.90" r="5.15" fill="#ff0000"/><circle cx="262.7" cy="156.11" r="5.15" fill="#808080"/><circle cx="262.7" cy="175.32" r="5.15" fill="#808080"/><circle cx="262.7" cy="194.53" r="5.15" fill="#808080"/><circle cx="262.7" cy="213.74" r="5.15" fill="#808080"/><circle cx="262.7" cy="232.95" r="5.15" fill="#808080"/><circle cx="262.7" cy="252.16" r="5.15" fill="#808080"/><circle cx="262.7" cy="271.37" r="5.15" fill="#808080"/><circle cx="262.7" cy="290.58" r="5.15" fill="#808080"/><circle cx="262.7" cy="309.79" r="5.15" fill="#808080"/><circle cx="262.7" cy="329.00" r="5.15" fill="#808080"/><circle cx="262.7" cy="348.21" r="5.15" fill="#808080"/><circle cx="262.7" cy="367.42" r="5.15" fill="#808080"/><circle cx="262.7" cy="386.63" r="5.15" fill="#808080"/><circle cx="262.7" cy="405.84" r="5.15" fill="#808080"/><circle cx="262.7" cy="425.05" r="5.15" fill="#808080"/><circle cx="262.7" cy="444.26" r="5.15" fill="#808080"/><circle cx="262.7" cy="463.47" r="5.15" fill="#808080"/><circle cx="262.7" cy="482.68" r="5.15" fill="#808080"/><circle cx="262.7" cy="501.89" r="5.15" fill="#808080"/><circle cx="262.7" cy="521.10" r="5.15" fill="#808080"/><circle cx="262.7" cy="540.31" r="5.15" fill="#808080"/><circle cx="262.7" cy="559.52" r="5.15" fill="#808080"/><circle cx="262.7" cy="578.73" r="5.15" fill="#808080"/><circle cx="262.7" cy="597.94" r="5.15" fill="#808080"/><circle cx="262.7" cy="617.15" r="5.15" fill="#808080"/><circle cx="262.7" cy="636.36" r="5.15" fill="#808080"/><circle cx="262.7" cy="655.57" r="5.15" fill="#808080"/><circle cx="262.7" cy="674.78" r="5.15" fill="#808080"/><circle cx="262.7" cy="693.99" r="5.15" fill="#808080"/><circle cx="262.7" cy="713.20" r="5.15" fill="#808080"/><circle cx="262.7" cy="732.41" r="5.15" fill="#808080"/><circle cx="262.7" cy="751.62" r="5.15" fill="#808080"/><circle cx="262.7" cy="770.83" r="5.15" fill="#808080"/><circle cx="262.7" cy="790.04" r="5.15" fill="#808080"/><rect x="226.4" y="282.2" width="19" height="19" fill="#fff" stroke="#000" stroke-width="2"/><path d="M229.5 290.6 H242" stroke="#000" stroke-width="2"/><path d="M255 309.8 H133.5 V819.5" stroke="#1fb2ec" stroke-width="1.9" fill="none" stroke-dasharray="6.3 4.2"/><path d="M127.3 813.7 L133.5 820.3 L139.7 813.7" stroke="#1fb2ec" stroke-width="1.7" fill="none"/><path d="M255 405.8 H152.9 V819.5" stroke="#1fb2ec" stroke-width="1.9" fill="none" stroke-dasharray="6.3 4.2"/><path d="M146.7 813.7 L152.9 820.3 L159.1 813.7" stroke="#1fb2ec" stroke-width="1.7" fill="none"/><path d="M255 444.3 H171.9 V819.5" stroke="#1fb2ec" stroke-width="1.9" fill="none" stroke-dasharray="6.3 4.2"/><path d="M165.7 813.7 L171.9 820.3 L178.1 813.7" stroke="#1fb2ec" stroke-width="1.7" fill="none"/><path d="M255 482.7 H191.3 V819.5" stroke="#1fb2ec" stroke-width="1.9" fill="none" stroke-dasharray="6.3 4.2"/><path d="M185.1 813.7 L191.3 820.3 L197.5 813.7" stroke="#1fb2ec" stroke-width="1.7" fill="none"/><path d="M255 597.9 H210.6 V751.6 H248" stroke="#1fb2ec" stroke-width="1.9" fill="none" stroke-dasharray="6.3 4.2"/><path d="M247.2 745.4 L253.8 751.6 L247.2 757.8" stroke="#1fb2ec" stroke-width="1.7" fill="none"/><path d="M255 789.8 H210.6 V819.5" stroke="#1fb2ec" stroke-width="1.9" fill="none" stroke-dasharray="6.3 4.2"/><path d="M204.4 813.7 L210.6 820.3 L216.8 813.7" stroke="#1fb2ec" stroke-width="1.7" fill="none"/></svg>
<div class="m" style="left:-3.20px;top:128.40px;font-weight:bold"><span style="color:#ffffff">EIP</span></div>
<div class="b" style="left:0.00px;top:821.30px;width:2096.00px;height:1.50px;background:#a0a0a0;"></div>
<div class="b" style="left:0.00px;top:822.80px;width:2094.20px;height:138.00px;background:#fff8f0;"></div>
<div class="b" style="left:0.00px;top:845.81px;width:2094.20px;height:19.21px;background:#c0c0c0;"></div>
<div class="m" style="left:2.60px;top:827.70px;">byte ptr ds:[esi+11]=[05AA8DA0 "97478</div>
<div class="m" style="left:2058.00px;top:827.70px;">rbh</div>
<div class="m" style="left:2.60px;top:885.33px;">05D7B50E</div>
<div class="b" style="left:0.00px;top:960.40px;width:2096.00px;height:1.50px;background:#a0a0a0;"></div>
<div class="b" style="left:0.00px;top:962.00px;width:2098.00px;height:44.00px;background:#f0f0f0;"></div>
<div class="b" style="left:0.00px;top:964.60px;width:135.10px;height:41.00px;background:#f6f6f6;"></div>
<div class="b" style="left:135.10px;top:965.00px;width:1.00px;height:39.00px;background:#e2e2e2;"></div>
<div class="b" style="left:270.40px;top:965.00px;width:1.00px;height:39.00px;background:#e2e2e2;"></div>
<div class="b" style="left:410.40px;top:965.00px;width:1.00px;height:39.00px;background:#e2e2e2;"></div>
<div class="b" style="left:550.60px;top:965.00px;width:1.00px;height:39.00px;background:#e2e2e2;"></div>
<div class="b" style="left:690.00px;top:965.00px;width:1.00px;height:39.00px;background:#e2e2e2;"></div>
<div class="b" style="left:830.10px;top:965.00px;width:1.00px;height:39.00px;background:#e2e2e2;"></div>
<div class="b" style="left:992.00px;top:965.00px;width:1.00px;height:39.00px;background:#e2e2e2;"></div>
<div class="b" style="left:1127.10px;top:965.00px;width:1.00px;height:39.00px;background:#e2e2e2;"></div>
<span class="ht" style="left:49.30px;top:974.90px;font-size:20.60px;width:41.20px">内存</span>
<span class="t" style="left:101.20px;top:973.90px;height:22.20px;line-height:22.20px;font-size:18.50px;color:#000;font-family:'Liberation Serif',serif;transform:scaleY(1.08)">1</span>
<span class="ht" style="left:188.80px;top:976.20px;font-size:20.60px;width:41.20px">内存</span>
<span class="t" style="left:240.70px;top:975.20px;height:22.20px;line-height:22.20px;font-size:18.50px;color:#000;font-family:'Liberation Serif',serif;transform:scaleY(1.08)">2</span>
<span class="ht" style="left:328.30px;top:976.20px;font-size:20.60px;width:41.20px">内存</span>
<span class="t" style="left:380.20px;top:975.20px;height:22.20px;line-height:22.20px;font-size:18.50px;color:#000;font-family:'Liberation Serif',serif;transform:scaleY(1.08)">3</span>
<span class="ht" style="left:467.80px;top:976.20px;font-size:20.60px;width:41.20px">内存</span>
<span class="t" style="left:519.70px;top:975.20px;height:22.20px;line-height:22.20px;font-size:18.50px;color:#000;font-family:'Liberation Serif',serif;transform:scaleY(1.08)">4</span>
<span class="ht" style="left:607.30px;top:976.20px;font-size:20.60px;width:41.20px">内存</span>
<span class="t" style="left:659.20px;top:975.20px;height:22.20px;line-height:22.20px;font-size:18.50px;color:#000;font-family:'Liberation Serif',serif;transform:scaleY(1.08)">5</span>
<span class="ht" style="left:747.70px;top:976.20px;font-size:20.60px;width:41.20px">监视</span>
<span class="t" style="left:799.40px;top:975.20px;height:22.20px;line-height:22.20px;font-size:18.50px;color:#000;font-family:'Liberation Serif',serif;transform:scaleY(1.08)">1</span>
<span class="ht" style="left:886.20px;top:976.20px;font-size:20.60px;width:82.40px">局部变量</span>
<span class="ht" style="left:1046.30px;top:976.20px;font-size:20.60px;width:61.80px">结构体</span>
<svg class="ic" style="left:0;top:0" width="1200" height="1006" viewBox="0 0 1200 1006"><defs>
<linearGradient id="ct" x1="0" y1="0" x2="1" y2="0"><stop offset="0" stop-color="#8e8e96"/><stop offset="0.25" stop-color="#e6e6ea"/><stop offset="0.5" stop-color="#a8a8b0"/><stop offset="0.75" stop-color="#ececf0"/><stop offset="1" stop-color="#b0b0b8"/></linearGradient>
</defs><rect x="22.6" y="973.6" width="18.6" height="17.4" rx="2" fill="url(#ct)" stroke="#b4b4bc" stroke-width="0.6"/><path d="M14.2 977.4 q0-1.6 1.6-1.6 h6.8 v15.6 h-8.4z" fill="#f0a61e"/><rect x="15.2" y="978.4" width="3.6" height="5" fill="#4a86d0"/><rect x="14.2" y="990.4" width="27" height="1.8" fill="#8a8a8a"/><circle cx="18.8" cy="992.6" r="3" fill="#303030"/><circle cx="18.8" cy="992.6" r="1.2" fill="#a0a0a0"/><circle cx="36.8" cy="992.6" r="3" fill="#303030"/><circle cx="36.8" cy="992.6" r="1.2" fill="#a0a0a0"/><rect x="162.1" y="973.6" width="18.6" height="17.4" rx="2" fill="url(#ct)" stroke="#b4b4bc" stroke-width="0.6"/><path d="M153.7 977.4 q0-1.6 1.6-1.6 h6.8 v15.6 h-8.4z" fill="#f0a61e"/><rect x="154.7" y="978.4" width="3.6" height="5" fill="#4a86d0"/><rect x="153.7" y="990.4" width="27" height="1.8" fill="#8a8a8a"/><circle cx="158.3" cy="992.6" r="3" fill="#303030"/><circle cx="158.3" cy="992.6" r="1.2" fill="#a0a0a0"/><circle cx="176.3" cy="992.6" r="3" fill="#303030"/><circle cx="176.3" cy="992.6" r="1.2" fill="#a0a0a0"/><rect x="301.6" y="973.6" width="18.6" height="17.4" rx="2" fill="url(#ct)" stroke="#b4b4bc" stroke-width="0.6"/><path d="M293.2 977.4 q0-1.6 1.6-1.6 h6.8 v15.6 h-8.4z" fill="#f0a61e"/><rect x="294.2" y="978.4" width="3.6" height="5" fill="#4a86d0"/><rect x="293.2" y="990.4" width="27" height="1.8" fill="#8a8a8a"/><circle cx="297.8" cy="992.6" r="3" fill="#303030"/><circle cx="297.8" cy="992.6" r="1.2" fill="#a0a0a0"/><circle cx="315.8" cy="992.6" r="3" fill="#303030"/><circle cx="315.8" cy="992.6" r="1.2" fill="#a0a0a0"/><rect x="441.1" y="973.6" width="18.6" height="17.4" rx="2" fill="url(#ct)" stroke="#b4b4bc" stroke-width="0.6"/><path d="M432.7 977.4 q0-1.6 1.6-1.6 h6.8 v15.6 h-8.4z" fill="#f0a61e"/><rect x="433.7" y="978.4" width="3.6" height="5" fill="#4a86d0"/><rect x="432.7" y="990.4" width="27" height="1.8" fill="#8a8a8a"/><circle cx="437.3" cy="992.6" r="3" fill="#303030"/><circle cx="437.3" cy="992.6" r="1.2" fill="#a0a0a0"/><circle cx="455.3" cy="992.6" r="3" fill="#303030"/><circle cx="455.3" cy="992.6" r="1.2" fill="#a0a0a0"/><rect x="580.6" y="973.6" width="18.6" height="17.4" rx="2" fill="url(#ct)" stroke="#b4b4bc" stroke-width="0.6"/><path d="M572.2 977.4 q0-1.6 1.6-1.6 h6.8 v15.6 h-8.4z" fill="#f0a61e"/><rect x="573.2" y="978.4" width="3.6" height="5" fill="#4a86d0"/><rect x="572.2" y="990.4" width="27" height="1.8" fill="#8a8a8a"/><circle cx="576.8" cy="992.6" r="3" fill="#303030"/><circle cx="576.8" cy="992.6" r="1.2" fill="#a0a0a0"/><circle cx="594.8" cy="992.6" r="3" fill="#303030"/><circle cx="594.8" cy="992.6" r="1.2" fill="#a0a0a0"/><path d="M714 978 q0-6 5-5.6 l3 3.4 h7.6 l3-3.4 q5-0.4 5 5.6 l-1.6 5 q0.6 3-1 6.4 q-3 6.8-9.2 6.8 q-6.2 0-9.2-6.800 q-1.6-3.400 -1-6.400z" fill="#c8894a" stroke="#8a5424" stroke-width="0.8"/><ellipse cx="725.8" cy="990.6" rx="5.4" ry="4.4" fill="#f4e2c4"/><ellipse cx="725.8" cy="988.6" rx="1.9" ry="1.4" fill="#2a1a10"/><circle cx="721.4" cy="983.4" r="1.4" fill="#2a1a10"/><circle cx="730.2" cy="983.4" r="1.4" fill="#2a1a10"/><text x="851.4" y="990.8" font-family="'Liberation Serif',serif" font-size="17" fill="#707070">[<tspan fill="#a04860" font-style="italic">x</tspan>=]</text><path d="M1018 980.6 H1023 V992 H1031 M1023 981 H1031" fill="none" stroke="#a8a8a8" stroke-width="1.4"/><circle cx="1016.6" cy="979" r="4" fill="#4a6ee0" stroke="#2c4cb8" stroke-width="0.8"/><circle cx="1034.4" cy="980.4" r="3.9" fill="#f4f4f4" stroke="#b0b0b0" stroke-width="1.4"/><circle cx="1034.4" cy="991.8" r="3.9" fill="#f4f4f4" stroke="#b0b0b0" stroke-width="1.4"/></svg>
<div class="b" style="left:0.00px;top:1005.50px;width:2098.00px;height:2.00px;background:#1a1a1a;"></div>
<div class="b" style="left:0.00px;top:1007.50px;width:2098.00px;height:23.50px;background:#c0c0c0;"></div>
<div class="b" style="left:0.00px;top:1030.60px;width:2098.00px;height:2.40px;background:#787878;"></div>
<div class="b" style="left:104.30px;top:1007.50px;width:2.00px;height:24.00px;background:#707070;"></div>
<div class="b" style="left:900.20px;top:1007.50px;width:2.60px;height:24.00px;background:#707070;"></div>
<div class="b" style="left:0.00px;top:1033.00px;width:2098.00px;height:363.50px;background:#fff8f0;"></div>
<div class="b" style="left:104.90px;top:1033.00px;width:1.40px;height:363.50px;background:#808080;"></div>
<div class="b" style="left:901.60px;top:1033.00px;width:1.20px;height:363.50px;background:#808080;"></div>
<span class="ht" style="left:2.50px;top:1010.30px;font-size:18.60px;width:37.20px;color:#303030">地址</span>
<div class="m" style="left:112.80px;top:1012.30px;"><span style="color:#101010">ASCII</span></div>
<div class="b" style="left:0;top:1033px;width:2098px;height:362.8px;overflow:hidden">
<div class="b" style="left:112.80px;top:233.00px;width:12.23px;height:17.20px;background:#b4b4b4;"></div>
<div class="m" style="left:2.00px;top:2.20px;">05AA8D18</div>
<div class="m" style="left:112.80px;top:2.20px;"><span style="color:#1c7a2c;font-weight:bold;-webkit-text-stroke:0.55px #1c7a2c">................................................................</span></div>
<div class="m" style="left:2.00px;top:21.40px;">05AA8D58</div>
<div class="m" style="left:112.80px;top:21.40px;"><span style="color:#1c7a2c;font-weight:bold;-webkit-text-stroke:0.55px #1c7a2c">..........</span><span style="color:#1c7a2c;font-weight:bold;-webkit-text-stroke:0.55px #1c7a2c">...............................................</span><span style="color:#800080">9</span><span style="color:#000;font-weight:bold;-webkit-text-stroke:0.55px #000">.</span><span style="color:#800080">F</span><span style="color:#000;font-weight:bold;-webkit-text-stroke:0.55px #000">.</span><span style="color:#800080">k</span><span style="color:#000;font-weight:bold;-webkit-text-stroke:0.55px #000">.</span><span style="color:#1c7a2c;font-weight:bold;-webkit-text-stroke:0.55px #1c7a2c">.</span></div>
<div class="m" style="left:2.00px;top:40.60px;">05AA8D98</div>
<div class="m" style="left:112.80px;top:40.60px;"><span style="color:#000;font-weight:bold;-webkit-text-stroke:0.55px #000">.</span><span style="color:#800080">6</span><span style="color:#800080">u8jzPde0IgxLd6GncfBAepfJBd0Kh8oOOL8dKLzdocJ2isAjIhKtJ0RlgLKOmx</span></div>
<div class="m" style="left:2.00px;top:59.80px;">05AA8DD8</div>
<div class="m" style="left:112.80px;top:59.80px;"><span style="color:#000;font-weight:bold;-webkit-text-stroke:0.55px #000">.</span><span style="color:#800080">gJTeKdNnFRIBXuDL7DxtpYlSXpfKtHF4vUCsMehGAkWvj7FAc9QeWJKY40uvSwM</span></div>
<div class="m" style="left:2.00px;top:79.00px;">05AA8E18</div>
<div class="m" style="left:112.80px;top:79.00px;"><span style="color:#800080">ho</span><span style="color:#800080">  </span><span style="color:#800080">FLZDe1f8rESQedUStPKR0CsTy4Qwb8DwkNhFdnXsiVpzz63FfkCzJr4i0B3J</span></div>
<div class="m" style="left:2.00px;top:98.20px;">05AA8E58</div>
<div class="m" style="left:112.80px;top:98.20px;"><span style="color:#800080">4</span><span style="color:#800080">   </span><span style="color:#800080">rTAwR4y9ojfljoQoaF1LlqsajAIxNKu8iS2G8NPRVdD53X83RZJzzzzgEOzd</span></div>
<div class="m" style="left:2.00px;top:117.40px;">05AA8E98</div>
<div class="m" style="left:112.80px;top:117.40px;"><span style="color:#800080">z</span><span style="color:#800080">   </span><span style="color:#800080">menCkhvMdgaKjIg8xNbe3nNyjOq9wMxEhh2FDEEtfjgVvVqE1S</span><span style="color:#000;font-weight:bold;-webkit-text-stroke:0.55px #000">..</span><span style="color:#800080">IDE3N</span><span style="color:#800080">kHb</span></div>
<div class="m" style="left:2.00px;top:136.60px;">05AA8ED8</div>
<div class="m" style="left:112.80px;top:136.60px;"><span style="color:#000;font-weight:bold;-webkit-text-stroke:0.55px #000">.</span><span style="color:#800080">z</span><span style="color:#800080">n88HxjSI6bWHtP3fS2qHx6kwXoIIXGvOoNZYW2mZp0zVZomHFwUbbYrEqmSM</span><span style="color:#000;font-weight:bold;-webkit-text-stroke:0.55px #000">.</span><span style="color:#800080">w</span></div>
<div class="m" style="left:2.00px;top:155.80px;">05AA8F18</div>
<div class="m" style="left:112.80px;top:155.80px;"><span style="color:#800080">9wCZ7Uw9xfogoEmvnEN5N1aE6PwZPf1Qh6yYTWmE4lBYOvfZ8UzDzV8fUkkibjL5</span></div>
<div class="m" style="left:2.00px;top:175.00px;">05AA8F58</div>
<div class="m" style="left:112.80px;top:175.00px;"><span style="color:#800080">DZPjN0MEQ7wjJJibaZUPgHV7iB3m03nbqnsGpWLuqIA1id6Vw5DQL05HA064</span><span style="color:#800080">i8r7</span></div>
<div class="m" style="left:2.00px;top:194.20px;">05AA8F98</div>
<div class="m" style="left:112.80px;top:194.20px;"><span style="color:#800080">GiIjHGb3CXlMaXZjljENUhJduRHHJEYXg4JdpmrcXgGCJbW56eCuNG</span><span style="color:#800080">5BUO&amp;</span><span style="color:#000;font-weight:bold;-webkit-text-stroke:0.55px #000">.</span><span style="color:#800080">V</span><span style="color:#000;font-weight:bold;-webkit-text-stroke:0.55px #000">.</span><span style="color:#800080">xz</span></div>
<div class="m" style="left:2.00px;top:213.40px;">05AA8FD8</div>
<div class="m" style="left:112.80px;top:213.40px;"><span style="color:#800080">ICa</span><span style="color:#000;font-weight:bold;-webkit-text-stroke:0.55px #000">.</span><span style="color:#1c7a2c;font-weight:bold;-webkit-text-stroke:0.55px #1c7a2c">.</span><span style="color:#000;font-weight:bold;-webkit-text-stroke:0.55px #000">.</span><span style="color:#000;font-weight:bold;-webkit-text-stroke:0.55px #000">.</span><span style="color:#1c7a2c;font-weight:bold;-webkit-text-stroke:0.55px #1c7a2c">.</span><span style="color:#1c7a2c;font-weight:bold;-webkit-text-stroke:0.55px #1c7a2c">.</span><span style="color:#1c7a2c;font-weight:bold;-webkit-text-stroke:0.55px #1c7a2c">.</span><span style="color:#000;font-weight:bold;-webkit-text-stroke:0.55px #000">.</span><span style="color:#1c7a2c;font-weight:bold;-webkit-text-stroke:0.55px #1c7a2c">.</span><span style="color:#1c7a2c;font-weight:bold;-webkit-text-stroke:0.55px #1c7a2c">.</span><span style="color:#1c7a2c;font-weight:bold;-webkit-text-stroke:0.55px #1c7a2c">.</span><span style="color:#1c7a2c;font-weight:bold;-webkit-text-stroke:0.55px #1c7a2c">.</span><span style="color:#1c7a2c;font-weight:bold;-webkit-text-stroke:0.55px #1c7a2c">.</span><span style="color:#000;font-weight:bold;-webkit-text-stroke:0.55px #000">.</span><span style="color:#000;font-weight:bold;-webkit-text-stroke:0.55px #000">.</span><span style="color:#000;font-weight:bold;-webkit-text-stroke:0.55px #000">.</span><span style="color:#000;font-weight:bold;-webkit-text-stroke:0.55px #000">.</span><span style="color:#000;font-weight:bold;-webkit-text-stroke:0.55px #000">.</span><span style="color:#1c7a2c;font-weight:bold;-webkit-text-stroke:0.55px #1c7a2c">.</span><span style="color:#000;font-weight:bold;-webkit-text-stroke:0.55px #000">.</span><span style="color:#000;font-weight:bold;-webkit-text-stroke:0.55px #000">.</span><span style="color:#000;font-weight:bold;-webkit-text-stroke:0.55px #000">.</span><span style="color:#000;font-weight:bold;-webkit-text-stroke:0.55px #000">.</span><span style="color:#1c7a2c;font-weight:bold;-webkit-text-stroke:0.55px #1c7a2c">.</span><span style="color:#1c7a2c;font-weight:bold;-webkit-text-stroke:0.55px #1c7a2c">.</span><span style="color:#1c7a2c;font-weight:bold;-webkit-text-stroke:0.55px #1c7a2c">.</span><span style="color:#000;font-weight:bold;-webkit-text-stroke:0.55px #000">.</span><span style="color:#000;font-weight:bold;-webkit-text-stroke:0.55px #000">.</span><span style="color:#000;font-weight:bold;-webkit-text-stroke:0.55px #000">.</span>ø<span style="color:#000;font-weight:bold;-webkit-text-stroke:0.55px #000">.</span>ª<span style="color:#000;font-weight:bold;-webkit-text-stroke:0.55px #000">...</span>ª<span style="color:#000;font-weight:bold;-webkit-text-stroke:0.55px #000">.</span><span style="color:#1c7a2c;font-weight:bold;-webkit-text-stroke:0.55px #1c7a2c">.</span><span style="color:#1c7a2c;font-weight:bold;-webkit-text-stroke:0.55px #1c7a2c">.</span><span style="color:#000;font-weight:bold;-webkit-text-stroke:0.55px #000">.</span><span style="color:#1c7a2c;font-weight:bold;-webkit-text-stroke:0.55px #1c7a2c">.</span><span style="color:#000;font-weight:bold;-webkit-text-stroke:0.55px #000">.</span><span style="color:#1c7a2c;font-weight:bold;-webkit-text-stroke:0.55px #1c7a2c">.</span><span style="color:#000;font-weight:bold;-webkit-text-stroke:0.55px #000">.</span><span style="color:#1c7a2c;font-weight:bold;-webkit-text-stroke:0.55px #1c7a2c">.</span><span style="color:#1c7a2c;font-weight:bold;-webkit-text-stroke:0.55px #1c7a2c">.</span><span style="color:#1c7a2c;font-weight:bold;-webkit-text-stroke:0.55px #1c7a2c">.</span><span style="color:#1c7a2c;font-weight:bold;-webkit-text-stroke:0.55px #1c7a2c">.</span><span style="color:#1c7a2c;font-weight:bold;-webkit-text-stroke:0.55px #1c7a2c">.</span><span style="color:#800080">P</span><span style="color:#000;font-weight:bold;-webkit-text-stroke:0.55px #000">.</span><span style="color:#000;font-weight:bold;-webkit-text-stroke:0.55px #000">.</span><span style="color:#000;font-weight:bold;-webkit-text-stroke:0.55px #000">.</span><span style="color:#1c7a2c;font-weight:bold;-webkit-text-stroke:0.55px #1c7a2c">.</span><span style="color:#1c7a2c;font-weight:bold;-webkit-text-stroke:0.55px #1c7a2c">.</span><span style="color:#000;font-weight:bold;-webkit-text-stroke:0.55px #000">.</span><span style="color:#1c7a2c;font-weight:bold;-webkit-text-stroke:0.55px #1c7a2c">.</span>  ª<span style="color:#000;font-weight:bold;-webkit-text-stroke:0.55px #000">.</span></div>
<div class="m" style="left:2.00px;top:232.60px;">05AA9018</div>
<div class="m" style="left:112.80px;top:232.60px;">ø<span style="color:#000;font-weight:bold;-webkit-text-stroke:0.55px #000">.</span>ª<span style="color:#000;font-weight:bold;-webkit-text-stroke:0.55px #000">.</span>ø<span style="color:#808000;font-weight:bold;-webkit-text-stroke:0.55px #808000">.</span>ª<span style="color:#000;font-weight:bold;-webkit-text-stroke:0.55px #000">.</span><span style="color:#800080">H</span><span style="color:#000;font-weight:bold;-webkit-text-stroke:0.55px #000">.</span>ª<span style="color:#000;font-weight:bold;-webkit-text-stroke:0.55px #000">.</span><span style="color:#800080">8x</span><span style="color:#000;font-weight:bold;-webkit-text-stroke:0.55px #000">..</span><span style="color:#000;font-weight:bold;-webkit-text-stroke:0.55px #000">.</span><span style="color:#1c7a2c;font-weight:bold;-webkit-text-stroke:0.55px #1c7a2c">.</span><span style="color:#000;font-weight:bold;-webkit-text-stroke:0.55px #000">.</span><span style="color:#1c7a2c;font-weight:bold;-webkit-text-stroke:0.55px #1c7a2c">.</span><span style="color:#000;font-weight:bold;-webkit-text-stroke:0.55px #000">.</span><span style="color:#1c7a2c;font-weight:bold;-webkit-text-stroke:0.55px #1c7a2c">.</span><span style="color:#000;font-weight:bold;-webkit-text-stroke:0.55px #000">.</span><span style="color:#000;font-weight:bold;-webkit-text-stroke:0.55px #000">.</span><span style="color:#1c7a2c;font-weight:bold;-webkit-text-stroke:0.55px #1c7a2c">.</span><span style="color:#000;font-weight:bold;-webkit-text-stroke:0.55px #000">.</span><span style="color:#1c7a2c;font-weight:bold;-webkit-text-stroke:0.55px #1c7a2c">.</span><span style="color:#1c7a2c;font-weight:bold;-webkit-text-stroke:0.55px #1c7a2c">.</span><span style="color:#1c7a2c;font-weight:bold;-webkit-text-stroke:0.55px #1c7a2c">.</span><span style="color:#1c7a2c;font-weight:bold;-webkit-text-stroke:0.55px #1c7a2c">.</span><span style="color:#1c7a2c;font-weight:bold;-webkit-text-stroke:0.55px #1c7a2c">.</span><span style="color:#1c7a2c;font-weight:bold;-webkit-text-stroke:0.55px #1c7a2c">.</span><span style="color:#1c7a2c;font-weight:bold;-webkit-text-stroke:0.55px #1c7a2c">.</span><span style="color:#1c7a2c;font-weight:bold;-webkit-text-stroke:0.55px #1c7a2c">.</span><span style="color:#1c7a2c;font-weight:bold;-webkit-text-stroke:0.55px #1c7a2c">.</span><span style="color:#000;font-weight:bold;-webkit-text-stroke:0.55px #000">.</span><span style="color:#000;font-weight:bold;-webkit-text-stroke:0.55px #000">.</span><span style="color:#1c7a2c;font-weight:bold;-webkit-text-stroke:0.55px #1c7a2c">.</span><span style="color:#000;font-weight:bold;-webkit-text-stroke:0.55px #000">.</span><span style="color:#1c7a2c;font-weight:bold;-webkit-text-stroke:0.55px #1c7a2c">.</span><span style="color:#000;font-weight:bold;-webkit-text-stroke:0.55px #000">.</span><span style="color:#000;font-weight:bold;-webkit-text-stroke:0.55px #000">.</span><span style="color:#000;font-weight:bold;-webkit-text-stroke:0.55px #000">.</span><span style="color:#000;font-weight:bold;-webkit-text-stroke:0.55px #000">.</span><span style="color:#1c7a2c;font-weight:bold;-webkit-text-stroke:0.55px #1c7a2c">.</span><span style="color:#000;font-weight:bold;-webkit-text-stroke:0.55px #000">.</span><span style="color:#000;font-weight:bold;-webkit-text-stroke:0.55px #000">.</span><span style="color:#000;font-weight:bold;-webkit-text-stroke:0.55px #000">.</span><span style="color:#000;font-weight:bold;-webkit-text-stroke:0.55px #000">.</span><span style="color:#1c7a2c;font-weight:bold;-webkit-text-stroke:0.55px #1c7a2c">.</span><span style="color:#1c7a2c;font-weight:bold;-webkit-text-stroke:0.55px #1c7a2c">.</span><span style="color:#1c7a2c;font-weight:bold;-webkit-text-stroke:0.55px #1c7a2c">.</span><span style="color:#1c7a2c;font-weight:bold;-webkit-text-stroke:0.55px #1c7a2c">.</span><span style="color:#000;font-weight:bold;-webkit-text-stroke:0.55px #000">.</span><span style="color:#1c7a2c;font-weight:bold;-webkit-text-stroke:0.55px #1c7a2c">.</span><span style="color:#1c7a2c;font-weight:bold;-webkit-text-stroke:0.55px #1c7a2c">.</span><span style="color:#1c7a2c;font-weight:bold;-webkit-text-stroke:0.55px #1c7a2c">.</span><span style="color:#000;font-weight:bold;-webkit-text-stroke:0.55px #000">.</span><span style="color:#000;font-weight:bold;-webkit-text-stroke:0.55px #000">.</span><span style="color:#1c7a2c;font-weight:bold;-webkit-text-stroke:0.55px #1c7a2c">.</span><span style="color:#1c7a2c;font-weight:bold;-webkit-text-stroke:0.55px #1c7a2c">.</span><span style="color:#1c7a2c;font-weight:bold;-webkit-text-stroke:0.55px #1c7a2c">.</span><span style="color:#000;font-weight:bold;-webkit-text-stroke:0.55px #000">.</span><span style="color:#1c7a2c;font-weight:bold;-webkit-text-stroke:0.55px #1c7a2c">.</span></div>
<div class="m" style="left:2.00px;top:251.80px;">05AA9058</div>
<div class="m" style="left:112.80px;top:251.80px;">ß<span style="color:#000;font-weight:bold;-webkit-text-stroke:0.55px #000">..</span><span style="color:#1c7a2c;font-weight:bold;-webkit-text-stroke:0.55px #1c7a2c">.</span><span style="color:#000;font-weight:bold;-webkit-text-stroke:0.55px #000">.</span><span style="color:#800080;font-weight:bold;-webkit-text-stroke:0.55px #800080">.</span><span style="color:#1c7a2c;font-weight:bold;-webkit-text-stroke:0.55px #1c7a2c">.</span><span style="color:#000;font-weight:bold;-webkit-text-stroke:0.55px #000">...</span><span style="color:#a63a20">ÿ</span><span style="color:#000;font-weight:bold;-webkit-text-stroke:0.55px #000">.</span><span style="color:#1c7a2c;font-weight:bold;-webkit-text-stroke:0.55px #1c7a2c">.........................</span>í<span style="color:#000;font-weight:bold;-webkit-text-stroke:0.55px #000">..</span>ø<span style="color:#808000;font-weight:bold;-webkit-text-stroke:0.55px #808000">.</span>ª<span style="color:#000;font-weight:bold;-webkit-text-stroke:0.55px #000">.</span>ø<span style="color:#000;font-weight:bold;-webkit-text-stroke:0.55px #000">.</span>ª<span style="color:#000;font-weight:bold;-webkit-text-stroke:0.55px #000">...</span>ª<span style="color:#000;font-weight:bold;-webkit-text-stroke:0.55px #000">.</span>ø<span style="color:#808000;font-weight:bold;-webkit-text-stroke:0.55px #808000">.</span>ª<span style="color:#000;font-weight:bold;-webkit-text-stroke:0.55px #000">...</span>ª<span style="color:#000;font-weight:bold;-webkit-text-stroke:0.55px #000">.</span>ð<span style="color:#800080">r</span>Ô<span style="color:#000;font-weight:bold;-webkit-text-stroke:0.55px #000">.</span></div>
<div class="m" style="left:2.00px;top:271.00px;">05AA9098</div>
<div class="m" style="left:112.80px;top:271.00px;"><span style="color:#800080">Oh</span>Ô<span style="color:#000;font-weight:bold;-webkit-text-stroke:0.55px #000">.</span><span style="color:#1c7a2c;font-weight:bold;-webkit-text-stroke:0.55px #1c7a2c">....</span><span style="color:#800080;font-weight:bold;-webkit-text-stroke:0.55px #800080">.</span><span style="color:#1c7a2c;font-weight:bold;-webkit-text-stroke:0.55px #1c7a2c">...</span><span style="color:#000;font-weight:bold;-webkit-text-stroke:0.55px #000">.....</span><span style="color:#1c7a2c;font-weight:bold;-webkit-text-stroke:0.55px #1c7a2c">...............................................</span></div>
<div class="m" style="left:2.00px;top:290.20px;">05AA90D8</div>
<div class="m" style="left:112.80px;top:290.20px;"><span style="color:#1c7a2c;font-weight:bold;-webkit-text-stroke:0.55px #1c7a2c">................................................................</span></div>
<div class="m" style="left:2.00px;top:309.40px;">05AA9118</div>
<div class="m" style="left:112.80px;top:309.40px;"><span style="color:#1c7a2c;font-weight:bold;-webkit-text-stroke:0.55px #1c7a2c">................................................................</span></div>
<div class="m" style="left:2.00px;top:328.60px;">05AA9158</div>
<div class="m" style="left:112.80px;top:328.60px;"><span style="color:#1c7a2c;font-weight:bold;-webkit-text-stroke:0.55px #1c7a2c">................................................................</span></div>
<div class="m" style="left:2.00px;top:347.80px;">05AA9198</div>
<div class="m" style="left:112.80px;top:347.80px;"><span style="color:#1c7a2c;font-weight:bold;-webkit-text-stroke:0.55px #1c7a2c">................................................................</span></div>
</div>
<div class="b" style="left:0.00px;top:1395.50px;width:2098.00px;height:1.60px;background:#2c2c2c;"></div>
<div class="b" style="left:0.00px;top:1397.50px;width:2098.00px;height:34.50px;background:#f0f0f0;"></div>
<div class="b" style="left:0.00px;top:1397.30px;width:2098.00px;height:5.40px;background:#eceef1;"></div>
<div class="b" style="left:60.00px;top:1402.60px;width:2038.00px;height:29.40px;background:#ffffff;"></div>
<span class="ht" style="left:-0.80px;top:1409.90px;font-size:20.60px;width:41.20px">命令</span>
<span class="t" style="left:41.00px;top:1408.10px;height:22.80px;line-height:22.80px;font-size:19.00px;color:#000;font-family:'Liberation Mono',monospace;">:</span>
<span class="ht" style="left:65.00px;top:1410.40px;font-size:19.20px;width:288.00px;color:#a0a0a0">命令使用逗号分隔（像汇编语言）</span>
<span class="t" style="left:353.40px;top:1407.74px;height:23.52px;line-height:23.52px;font-size:19.60px;color:#a0a0a0;font-family:'Liberation Mono',monospace;">: mov eax, ebx</span>
<svg class="ic" shape-rendering="crispEdges" style="left:93.8px;top:1049.8px" width="818.2" height="220.2" viewBox="0 0 818.2 220.2"><clipPath id="mz1"><polygon points="132.2,12.2 484.2,12.2 489.2,20.2 692.2,20.2 698.2,11.2 799.2,11.2 808.2,25.2 812.2,60.2 814.2,100.2 805.2,116.2 811.2,148.2 799.2,155.2 753.2,157.2 748.2,179.2 688.2,181.2 683.2,198.2 408.2,200.2 405.2,214.2 76.2,216.2 71.2,200.2 22.2,197.2 4.2,194.2 4.2,153.2 21.2,148.2 21.2,120.2 42.2,110.2 42.2,62.2 28.2,54.2 31.2,40.2 38.2,30.2 56.2,20.2 132.2,21.2"/></clipPath><g clip-path="url(#mz1)"><path fill="#ded8d8" d="M0 0h9.6v9.6h-9.6zM768 0h9.6v9.6h-9.6zM796.8 0h9.6v9.6h-9.6zM739.2 9.6h9.6v9.6h-9.6zM777.6 9.6h9.6v9.6h-9.6zM816 9.6h9.6v9.6h-9.6zM0 19.2h9.6v9.6h-9.6zM9.6 28.8h9.6v9.6h-9.6zM0 57.6h9.6v9.6h-9.6zM9.6 57.6h9.6v9.6h-9.6zM9.6 86.4h9.6v9.6h-9.6zM0 105.6h9.6v9.6h-9.6zM9.6 105.6h9.6v9.6h-9.6zM0 115.2h9.6v9.6h-9.6zM0 124.8h9.6v9.6h-9.6zM0 144h9.6v9.6h-9.6zM9.6 144h9.6v9.6h-9.6zM0 172.8h9.6v9.6h-9.6zM144 172.8h9.6v9.6h-9.6zM182.4 172.8h9.6v9.6h-9.6zM595.2 172.8h9.6v9.6h-9.6zM0 182.4h9.6v9.6h-9.6zM9.6 192h9.6v9.6h-9.6zM144 192h9.6v9.6h-9.6zM172.8 192h9.6v9.6h-9.6zM288 192h9.6v9.6h-9.6zM480 192h9.6v9.6h-9.6zM499.2 192h9.6v9.6h-9.6zM604.8 192h9.6v9.6h-9.6zM643.2 192h9.6v9.6h-9.6zM691.2 192h9.6v9.6h-9.6zM0 211.2h9.6v9.6h-9.6zM144 211.2h9.6v9.6h-9.6zM163.2 211.2h9.6v9.6h-9.6zM422.4 211.2h9.6v9.6h-9.6zM489.6 211.2h9.6v9.6h-9.6zM537.6 211.2h9.6v9.6h-9.6zM614.4 211.2h9.6v9.6h-9.6zM768 211.2h9.6v9.6h-9.6z"/><path fill="#d8d8d8" d="M9.6 0h9.6v9.6h-9.6zM0 28.8h9.6v9.6h-9.6zM0 48h9.6v9.6h-9.6zM0 67.2h9.6v9.6h-9.6zM0 76.8h9.6v9.6h-9.6zM0 86.4h9.6v9.6h-9.6zM9.6 134.4h9.6v9.6h-9.6z"/><path fill="#d8e4d2" d="M19.2 0h9.6v9.6h-9.6zM153.6 0h9.6v9.6h-9.6zM163.2 0h9.6v9.6h-9.6zM460.8 0h9.6v9.6h-9.6zM499.2 0h9.6v9.6h-9.6zM518.4 0h9.6v9.6h-9.6zM595.2 0h9.6v9.6h-9.6zM153.6 9.6h9.6v9.6h-9.6zM211.2 9.6h9.6v9.6h-9.6zM259.2 9.6h9.6v9.6h-9.6zM278.4 9.6h9.6v9.6h-9.6zM336 9.6h9.6v9.6h-9.6zM480 9.6h9.6v9.6h-9.6zM595.2 9.6h9.6v9.6h-9.6zM662.4 9.6h9.6v9.6h-9.6zM681.6 9.6h9.6v9.6h-9.6z"/><path fill="#e4f0de" d="M28.8 0h9.6v9.6h-9.6zM38.4 0h9.6v9.6h-9.6zM67.2 0h9.6v9.6h-9.6zM211.2 0h9.6v9.6h-9.6zM259.2 0h9.6v9.6h-9.6zM268.8 0h9.6v9.6h-9.6zM288 0h9.6v9.6h-9.6zM307.2 0h9.6v9.6h-9.6zM326.4 0h9.6v9.6h-9.6zM508.8 0h9.6v9.6h-9.6zM681.6 0h9.6v9.6h-9.6zM144 9.6h9.6v9.6h-9.6zM163.2 9.6h9.6v9.6h-9.6zM518.4 9.6h9.6v9.6h-9.6z"/><path fill="#e4ead8" d="M48 0h9.6v9.6h-9.6zM76.8 0h9.6v9.6h-9.6zM182.4 0h9.6v9.6h-9.6zM547.2 0h9.6v9.6h-9.6zM672 0h9.6v9.6h-9.6zM105.6 9.6h9.6v9.6h-9.6zM124.8 9.6h9.6v9.6h-9.6zM172.8 9.6h9.6v9.6h-9.6zM297.6 9.6h9.6v9.6h-9.6zM384 9.6h9.6v9.6h-9.6zM441.6 9.6h9.6v9.6h-9.6zM460.8 9.6h9.6v9.6h-9.6zM556.8 9.6h9.6v9.6h-9.6zM624 9.6h9.6v9.6h-9.6z"/><path fill="#f0f0e4" d="M57.6 0h9.6v9.6h-9.6zM192 0h9.6v9.6h-9.6zM230.4 0h9.6v9.6h-9.6zM240 0h9.6v9.6h-9.6zM336 0h9.6v9.6h-9.6zM393.6 0h9.6v9.6h-9.6zM489.6 0h9.6v9.6h-9.6zM566.4 0h9.6v9.6h-9.6zM614.4 0h9.6v9.6h-9.6zM624 0h9.6v9.6h-9.6zM633.6 0h9.6v9.6h-9.6zM662.4 0h9.6v9.6h-9.6zM19.2 9.6h9.6v9.6h-9.6zM38.4 9.6h9.6v9.6h-9.6zM48 9.6h9.6v9.6h-9.6zM115.2 9.6h9.6v9.6h-9.6zM192 9.6h9.6v9.6h-9.6zM201.6 9.6h9.6v9.6h-9.6zM230.4 9.6h9.6v9.6h-9.6zM240 9.6h9.6v9.6h-9.6zM268.8 9.6h9.6v9.6h-9.6zM316.8 9.6h9.6v9.6h-9.6zM345.6 9.6h9.6v9.6h-9.6zM364.8 9.6h9.6v9.6h-9.6zM403.2 9.6h9.6v9.6h-9.6zM432 9.6h9.6v9.6h-9.6zM489.6 9.6h9.6v9.6h-9.6zM508.8 9.6h9.6v9.6h-9.6zM537.6 9.6h9.6v9.6h-9.6zM566.4 9.6h9.6v9.6h-9.6zM633.6 9.6h9.6v9.6h-9.6z"/><path fill="#d8ead8" d="M86.4 0h9.6v9.6h-9.6zM124.8 0h9.6v9.6h-9.6zM652.8 0h9.6v9.6h-9.6zM220.8 9.6h9.6v9.6h-9.6zM374.4 9.6h9.6v9.6h-9.6z"/><path fill="#f0f0ea" d="M96 0h9.6v9.6h-9.6zM115.2 0h9.6v9.6h-9.6zM576 0h9.6v9.6h-9.6zM710.4 0h9.6v9.6h-9.6zM729.6 0h9.6v9.6h-9.6zM96 9.6h9.6v9.6h-9.6zM691.2 9.6h9.6v9.6h-9.6zM748.8 9.6h9.6v9.6h-9.6zM288 172.8h9.6v9.6h-9.6zM432 172.8h9.6v9.6h-9.6zM316.8 192h9.6v9.6h-9.6zM384 192h9.6v9.6h-9.6zM326.4 211.2h9.6v9.6h-9.6zM739.2 211.2h9.6v9.6h-9.6z"/><path fill="#eaf0e4" d="M105.6 0h9.6v9.6h-9.6zM384 0h9.6v9.6h-9.6zM403.2 0h9.6v9.6h-9.6zM585.6 0h9.6v9.6h-9.6zM67.2 9.6h9.6v9.6h-9.6zM76.8 9.6h9.6v9.6h-9.6zM393.6 9.6h9.6v9.6h-9.6zM470.4 9.6h9.6v9.6h-9.6zM576 9.6h9.6v9.6h-9.6z"/><path fill="#deead8" d="M134.4 0h9.6v9.6h-9.6zM172.8 0h9.6v9.6h-9.6zM297.6 0h9.6v9.6h-9.6zM316.8 0h9.6v9.6h-9.6zM374.4 0h9.6v9.6h-9.6zM422.4 0h9.6v9.6h-9.6zM556.8 0h9.6v9.6h-9.6zM604.8 0h9.6v9.6h-9.6zM57.6 9.6h9.6v9.6h-9.6zM249.6 9.6h9.6v9.6h-9.6zM355.2 9.6h9.6v9.6h-9.6zM412.8 9.6h9.6v9.6h-9.6zM604.8 9.6h9.6v9.6h-9.6zM614.4 9.6h9.6v9.6h-9.6zM672 9.6h9.6v9.6h-9.6z"/><path fill="#f6f0ea" d="M144 0h9.6v9.6h-9.6zM220.8 0h9.6v9.6h-9.6zM412.8 0h9.6v9.6h-9.6zM537.6 0h9.6v9.6h-9.6zM643.2 0h9.6v9.6h-9.6zM86.4 9.6h9.6v9.6h-9.6zM326.4 9.6h9.6v9.6h-9.6zM422.4 9.6h9.6v9.6h-9.6zM528 9.6h9.6v9.6h-9.6zM470.4 172.8h9.6v9.6h-9.6zM816 192h9.6v9.6h-9.6zM720 211.2h9.6v9.6h-9.6z"/><path fill="#f6f6ea" d="M201.6 0h9.6v9.6h-9.6zM249.6 0h9.6v9.6h-9.6zM480 0h9.6v9.6h-9.6zM499.2 9.6h9.6v9.6h-9.6zM643.2 9.6h9.6v9.6h-9.6zM652.8 9.6h9.6v9.6h-9.6z"/><path fill="#d8ead2" d="M278.4 0h9.6v9.6h-9.6zM364.8 0h9.6v9.6h-9.6zM441.6 0h9.6v9.6h-9.6zM470.4 0h9.6v9.6h-9.6zM182.4 9.6h9.6v9.6h-9.6zM288 9.6h9.6v9.6h-9.6zM451.2 9.6h9.6v9.6h-9.6zM585.6 9.6h9.6v9.6h-9.6z"/><path fill="#d2e4d2" d="M345.6 0h9.6v9.6h-9.6zM355.2 0h9.6v9.6h-9.6zM28.8 9.6h9.6v9.6h-9.6z"/><path fill="#eaf0de" d="M432 0h9.6v9.6h-9.6zM451.2 0h9.6v9.6h-9.6zM528 0h9.6v9.6h-9.6zM134.4 9.6h9.6v9.6h-9.6zM307.2 9.6h9.6v9.6h-9.6zM547.2 9.6h9.6v9.6h-9.6z"/><path fill="#f0eaea" d="M691.2 0h9.6v9.6h-9.6zM748.8 0h9.6v9.6h-9.6zM806.4 0h9.6v9.6h-9.6zM163.2 172.8h9.6v9.6h-9.6zM336 172.8h9.6v9.6h-9.6zM345.6 172.8h9.6v9.6h-9.6zM758.4 172.8h9.6v9.6h-9.6zM326.4 192h9.6v9.6h-9.6zM345.6 192h9.6v9.6h-9.6zM374.4 192h9.6v9.6h-9.6zM662.4 192h9.6v9.6h-9.6zM172.8 211.2h9.6v9.6h-9.6zM288 211.2h9.6v9.6h-9.6zM412.8 211.2h9.6v9.6h-9.6zM576 211.2h9.6v9.6h-9.6zM787.2 211.2h9.6v9.6h-9.6zM796.8 211.2h9.6v9.6h-9.6z"/><path fill="#e4dede" d="M700.8 0h9.6v9.6h-9.6zM777.6 0h9.6v9.6h-9.6zM720 9.6h9.6v9.6h-9.6zM768 9.6h9.6v9.6h-9.6zM787.2 9.6h9.6v9.6h-9.6zM796.8 9.6h9.6v9.6h-9.6zM806.4 9.6h9.6v9.6h-9.6zM0 96h9.6v9.6h-9.6zM316.8 172.8h9.6v9.6h-9.6zM403.2 172.8h9.6v9.6h-9.6zM556.8 172.8h9.6v9.6h-9.6zM710.4 172.8h9.6v9.6h-9.6zM0 192h9.6v9.6h-9.6zM201.6 192h9.6v9.6h-9.6zM364.8 192h9.6v9.6h-9.6zM758.4 192h9.6v9.6h-9.6zM806.4 192h9.6v9.6h-9.6zM259.2 211.2h9.6v9.6h-9.6zM470.4 211.2h9.6v9.6h-9.6zM729.6 211.2h9.6v9.6h-9.6z"/><path fill="#e4e4de" d="M720 0h9.6v9.6h-9.6zM700.8 9.6h9.6v9.6h-9.6zM307.2 172.8h9.6v9.6h-9.6zM326.4 172.8h9.6v9.6h-9.6zM566.4 172.8h9.6v9.6h-9.6zM672 172.8h9.6v9.6h-9.6zM336 192h9.6v9.6h-9.6zM547.2 192h9.6v9.6h-9.6zM739.2 192h9.6v9.6h-9.6zM796.8 192h9.6v9.6h-9.6z"/><path fill="#eae4e4" d="M739.2 0h9.6v9.6h-9.6zM816 0h9.6v9.6h-9.6zM710.4 9.6h9.6v9.6h-9.6zM374.4 172.8h9.6v9.6h-9.6zM528 172.8h9.6v9.6h-9.6zM547.2 172.8h9.6v9.6h-9.6zM576 172.8h9.6v9.6h-9.6zM691.2 172.8h9.6v9.6h-9.6zM240 192h9.6v9.6h-9.6zM355.2 192h9.6v9.6h-9.6zM412.8 192h9.6v9.6h-9.6zM432 192h9.6v9.6h-9.6zM307.2 211.2h9.6v9.6h-9.6zM364.8 211.2h9.6v9.6h-9.6zM384 211.2h9.6v9.6h-9.6zM441.6 211.2h9.6v9.6h-9.6zM508.8 211.2h9.6v9.6h-9.6zM518.4 211.2h9.6v9.6h-9.6zM528 211.2h9.6v9.6h-9.6zM556.8 211.2h9.6v9.6h-9.6zM595.2 211.2h9.6v9.6h-9.6zM643.2 211.2h9.6v9.6h-9.6zM691.2 211.2h9.6v9.6h-9.6zM748.8 211.2h9.6v9.6h-9.6zM758.4 211.2h9.6v9.6h-9.6z"/><path fill="#f0eae4" d="M758.4 0h9.6v9.6h-9.6zM787.2 0h9.6v9.6h-9.6zM172.8 172.8h9.6v9.6h-9.6zM220.8 172.8h9.6v9.6h-9.6zM259.2 172.8h9.6v9.6h-9.6zM278.4 172.8h9.6v9.6h-9.6zM297.6 172.8h9.6v9.6h-9.6zM451.2 172.8h9.6v9.6h-9.6zM499.2 172.8h9.6v9.6h-9.6zM518.4 172.8h9.6v9.6h-9.6zM585.6 172.8h9.6v9.6h-9.6zM604.8 172.8h9.6v9.6h-9.6zM624 172.8h9.6v9.6h-9.6zM633.6 172.8h9.6v9.6h-9.6zM643.2 172.8h9.6v9.6h-9.6zM768 172.8h9.6v9.6h-9.6zM153.6 192h9.6v9.6h-9.6zM220.8 192h9.6v9.6h-9.6zM230.4 192h9.6v9.6h-9.6zM268.8 192h9.6v9.6h-9.6zM297.6 192h9.6v9.6h-9.6zM307.2 192h9.6v9.6h-9.6zM393.6 192h9.6v9.6h-9.6zM441.6 192h9.6v9.6h-9.6zM451.2 192h9.6v9.6h-9.6zM470.4 192h9.6v9.6h-9.6zM566.4 192h9.6v9.6h-9.6zM720 192h9.6v9.6h-9.6zM768 192h9.6v9.6h-9.6zM787.2 192h9.6v9.6h-9.6zM134.4 211.2h9.6v9.6h-9.6zM153.6 211.2h9.6v9.6h-9.6zM182.4 211.2h9.6v9.6h-9.6zM211.2 211.2h9.6v9.6h-9.6zM220.8 211.2h9.6v9.6h-9.6zM249.6 211.2h9.6v9.6h-9.6zM278.4 211.2h9.6v9.6h-9.6zM336 211.2h9.6v9.6h-9.6zM355.2 211.2h9.6v9.6h-9.6zM460.8 211.2h9.6v9.6h-9.6zM566.4 211.2h9.6v9.6h-9.6zM604.8 211.2h9.6v9.6h-9.6zM624 211.2h9.6v9.6h-9.6zM633.6 211.2h9.6v9.6h-9.6zM652.8 211.2h9.6v9.6h-9.6zM700.8 211.2h9.6v9.6h-9.6zM777.6 211.2h9.6v9.6h-9.6z"/><path fill="#d8d2d2" d="M0 9.6h9.6v9.6h-9.6zM9.6 9.6h9.6v9.6h-9.6zM9.6 19.2h9.6v9.6h-9.6zM0 38.4h9.6v9.6h-9.6zM9.6 48h9.6v9.6h-9.6zM9.6 76.8h9.6v9.6h-9.6zM9.6 96h9.6v9.6h-9.6zM9.6 115.2h9.6v9.6h-9.6zM0 153.6h9.6v9.6h-9.6zM9.6 163.2h9.6v9.6h-9.6zM9.6 182.4h9.6v9.6h-9.6zM288 182.4h9.6v9.6h-9.6zM9.6 201.6h9.6v9.6h-9.6zM144 201.6h9.6v9.6h-9.6zM316.8 201.6h9.6v9.6h-9.6zM643.2 201.6h9.6v9.6h-9.6z"/><path fill="#eaeae4" d="M729.6 9.6h9.6v9.6h-9.6z"/><path fill="#e4e4e4" d="M758.4 9.6h9.6v9.6h-9.6z"/><path fill="#e4cce4" d="M19.2 19.2h9.6v9.6h-9.6zM297.6 19.2h9.6v9.6h-9.6zM364.8 19.2h9.6v9.6h-9.6zM451.2 19.2h9.6v9.6h-9.6zM547.2 19.2h9.6v9.6h-9.6zM652.8 19.2h9.6v9.6h-9.6zM76.8 28.8h9.6v9.6h-9.6zM211.2 28.8h9.6v9.6h-9.6zM364.8 28.8h9.6v9.6h-9.6zM422.4 28.8h9.6v9.6h-9.6zM528 28.8h9.6v9.6h-9.6zM643.2 28.8h9.6v9.6h-9.6zM681.6 28.8h9.6v9.6h-9.6zM748.8 28.8h9.6v9.6h-9.6zM768 28.8h9.6v9.6h-9.6zM19.2 38.4h9.6v9.6h-9.6zM192 38.4h9.6v9.6h-9.6zM220.8 38.4h9.6v9.6h-9.6zM480 38.4h9.6v9.6h-9.6zM508.8 38.4h9.6v9.6h-9.6zM556.8 38.4h9.6v9.6h-9.6zM700.8 38.4h9.6v9.6h-9.6zM806.4 38.4h9.6v9.6h-9.6zM19.2 48h9.6v9.6h-9.6zM48 48h9.6v9.6h-9.6zM460.8 48h9.6v9.6h-9.6zM489.6 48h9.6v9.6h-9.6zM547.2 48h9.6v9.6h-9.6zM700.8 48h9.6v9.6h-9.6zM816 48h9.6v9.6h-9.6zM172.8 57.6h9.6v9.6h-9.6zM259.2 57.6h9.6v9.6h-9.6zM384 57.6h9.6v9.6h-9.6zM441.6 57.6h9.6v9.6h-9.6zM518.4 57.6h9.6v9.6h-9.6zM662.4 57.6h9.6v9.6h-9.6zM758.4 57.6h9.6v9.6h-9.6zM57.6 67.2h9.6v9.6h-9.6zM124.8 67.2h9.6v9.6h-9.6zM211.2 67.2h9.6v9.6h-9.6zM499.2 67.2h9.6v9.6h-9.6zM28.8 76.8h9.6v9.6h-9.6zM67.2 76.8h9.6v9.6h-9.6zM86.4 76.8h9.6v9.6h-9.6zM134.4 76.8h9.6v9.6h-9.6zM201.6 76.8h9.6v9.6h-9.6zM297.6 76.8h9.6v9.6h-9.6zM518.4 76.8h9.6v9.6h-9.6zM662.4 76.8h9.6v9.6h-9.6zM700.8 76.8h9.6v9.6h-9.6zM739.2 76.8h9.6v9.6h-9.6zM86.4 86.4h9.6v9.6h-9.6zM134.4 86.4h9.6v9.6h-9.6zM345.6 86.4h9.6v9.6h-9.6zM403.2 86.4h9.6v9.6h-9.6zM422.4 86.4h9.6v9.6h-9.6zM470.4 86.4h9.6v9.6h-9.6zM499.2 86.4h9.6v9.6h-9.6zM652.8 86.4h9.6v9.6h-9.6zM662.4 86.4h9.6v9.6h-9.6zM729.6 86.4h9.6v9.6h-9.6zM796.8 86.4h9.6v9.6h-9.6zM76.8 96h9.6v9.6h-9.6zM316.8 96h9.6v9.6h-9.6zM345.6 96h9.6v9.6h-9.6zM720 96h9.6v9.6h-9.6zM768 96h9.6v9.6h-9.6zM806.4 96h9.6v9.6h-9.6zM124.8 105.6h9.6v9.6h-9.6zM211.2 105.6h9.6v9.6h-9.6zM278.4 105.6h9.6v9.6h-9.6zM422.4 105.6h9.6v9.6h-9.6zM489.6 105.6h9.6v9.6h-9.6zM700.8 105.6h9.6v9.6h-9.6zM787.2 105.6h9.6v9.6h-9.6zM163.2 115.2h9.6v9.6h-9.6zM172.8 115.2h9.6v9.6h-9.6zM230.4 115.2h9.6v9.6h-9.6zM441.6 115.2h9.6v9.6h-9.6zM518.4 115.2h9.6v9.6h-9.6zM326.4 124.8h9.6v9.6h-9.6zM364.8 124.8h9.6v9.6h-9.6zM384 124.8h9.6v9.6h-9.6zM662.4 124.8h9.6v9.6h-9.6zM691.2 124.8h9.6v9.6h-9.6zM720 124.8h9.6v9.6h-9.6zM192 134.4h9.6v9.6h-9.6zM355.2 134.4h9.6v9.6h-9.6zM460.8 134.4h9.6v9.6h-9.6zM547.2 134.4h9.6v9.6h-9.6zM700.8 134.4h9.6v9.6h-9.6zM768 134.4h9.6v9.6h-9.6zM777.6 134.4h9.6v9.6h-9.6zM86.4 144h9.6v9.6h-9.6zM96 144h9.6v9.6h-9.6zM144 144h9.6v9.6h-9.6zM278.4 144h9.6v9.6h-9.6zM681.6 144h9.6v9.6h-9.6zM19.2 153.6h9.6v9.6h-9.6zM201.6 153.6h9.6v9.6h-9.6zM220.8 153.6h9.6v9.6h-9.6zM336 153.6h9.6v9.6h-9.6zM537.6 153.6h9.6v9.6h-9.6zM681.6 153.6h9.6v9.6h-9.6zM691.2 153.6h9.6v9.6h-9.6zM153.6 163.2h9.6v9.6h-9.6zM163.2 163.2h9.6v9.6h-9.6zM249.6 163.2h9.6v9.6h-9.6zM288 163.2h9.6v9.6h-9.6zM672 163.2h9.6v9.6h-9.6zM700.8 163.2h9.6v9.6h-9.6zM720 163.2h9.6v9.6h-9.6zM739.2 163.2h9.6v9.6h-9.6zM748.8 163.2h9.6v9.6h-9.6zM758.4 163.2h9.6v9.6h-9.6zM816 163.2h9.6v9.6h-9.6zM38.4 172.8h9.6v9.6h-9.6zM96 182.4h9.6v9.6h-9.6zM57.6 192h9.6v9.6h-9.6zM57.6 201.6h9.6v9.6h-9.6zM124.8 201.6h9.6v9.6h-9.6z"/><path fill="#e4d2e4" d="M28.8 19.2h9.6v9.6h-9.6zM144 19.2h9.6v9.6h-9.6zM393.6 19.2h9.6v9.6h-9.6zM460.8 19.2h9.6v9.6h-9.6zM691.2 19.2h9.6v9.6h-9.6zM403.2 38.4h9.6v9.6h-9.6zM566.4 38.4h9.6v9.6h-9.6zM115.2 57.6h9.6v9.6h-9.6zM508.8 57.6h9.6v9.6h-9.6zM172.8 96h9.6v9.6h-9.6zM422.4 96h9.6v9.6h-9.6zM441.6 96h9.6v9.6h-9.6zM672 115.2h9.6v9.6h-9.6zM739.2 115.2h9.6v9.6h-9.6zM19.2 134.4h9.6v9.6h-9.6zM412.8 134.4h9.6v9.6h-9.6zM614.4 134.4h9.6v9.6h-9.6zM278.4 153.6h9.6v9.6h-9.6zM48 192h9.6v9.6h-9.6z"/><path fill="#f6eaf0" d="M38.4 19.2h9.6v9.6h-9.6zM86.4 19.2h9.6v9.6h-9.6zM163.2 19.2h9.6v9.6h-9.6zM192 19.2h9.6v9.6h-9.6zM384 19.2h9.6v9.6h-9.6zM432 19.2h9.6v9.6h-9.6zM470.4 19.2h9.6v9.6h-9.6zM576 19.2h9.6v9.6h-9.6zM604.8 19.2h9.6v9.6h-9.6zM662.4 19.2h9.6v9.6h-9.6zM768 19.2h9.6v9.6h-9.6zM230.4 38.4h9.6v9.6h-9.6zM259.2 38.4h9.6v9.6h-9.6zM278.4 38.4h9.6v9.6h-9.6zM336 38.4h9.6v9.6h-9.6zM355.2 38.4h9.6v9.6h-9.6zM451.2 38.4h9.6v9.6h-9.6zM547.2 38.4h9.6v9.6h-9.6zM604.8 38.4h9.6v9.6h-9.6zM643.2 38.4h9.6v9.6h-9.6zM662.4 38.4h9.6v9.6h-9.6zM758.4 38.4h9.6v9.6h-9.6zM201.6 48h9.6v9.6h-9.6zM326.4 48h9.6v9.6h-9.6zM19.2 57.6h9.6v9.6h-9.6zM28.8 57.6h9.6v9.6h-9.6zM364.8 57.6h9.6v9.6h-9.6zM451.2 57.6h9.6v9.6h-9.6zM566.4 57.6h9.6v9.6h-9.6zM576 57.6h9.6v9.6h-9.6zM614.4 57.6h9.6v9.6h-9.6zM643.2 57.6h9.6v9.6h-9.6zM739.2 57.6h9.6v9.6h-9.6zM547.2 67.2h9.6v9.6h-9.6zM38.4 76.8h9.6v9.6h-9.6zM48 76.8h9.6v9.6h-9.6zM345.6 76.8h9.6v9.6h-9.6zM393.6 76.8h9.6v9.6h-9.6zM412.8 76.8h9.6v9.6h-9.6zM537.6 76.8h9.6v9.6h-9.6zM547.2 76.8h9.6v9.6h-9.6zM633.6 76.8h9.6v9.6h-9.6zM643.2 76.8h9.6v9.6h-9.6zM691.2 76.8h9.6v9.6h-9.6zM816 76.8h9.6v9.6h-9.6zM48 86.4h9.6v9.6h-9.6zM48 96h9.6v9.6h-9.6zM57.6 96h9.6v9.6h-9.6zM134.4 96h9.6v9.6h-9.6zM192 96h9.6v9.6h-9.6zM211.2 96h9.6v9.6h-9.6zM307.2 96h9.6v9.6h-9.6zM326.4 96h9.6v9.6h-9.6zM374.4 96h9.6v9.6h-9.6zM451.2 96h9.6v9.6h-9.6zM460.8 96h9.6v9.6h-9.6zM480 96h9.6v9.6h-9.6zM566.4 96h9.6v9.6h-9.6zM585.6 96h9.6v9.6h-9.6zM633.6 96h9.6v9.6h-9.6zM662.4 96h9.6v9.6h-9.6zM710.4 96h9.6v9.6h-9.6zM748.8 96h9.6v9.6h-9.6zM777.6 96h9.6v9.6h-9.6zM163.2 105.6h9.6v9.6h-9.6zM307.2 105.6h9.6v9.6h-9.6zM48 115.2h9.6v9.6h-9.6zM105.6 115.2h9.6v9.6h-9.6zM201.6 115.2h9.6v9.6h-9.6zM220.8 115.2h9.6v9.6h-9.6zM364.8 115.2h9.6v9.6h-9.6zM412.8 115.2h9.6v9.6h-9.6zM451.2 115.2h9.6v9.6h-9.6zM633.6 115.2h9.6v9.6h-9.6zM758.4 115.2h9.6v9.6h-9.6zM777.6 115.2h9.6v9.6h-9.6zM57.6 124.8h9.6v9.6h-9.6zM57.6 134.4h9.6v9.6h-9.6zM163.2 134.4h9.6v9.6h-9.6zM211.2 134.4h9.6v9.6h-9.6zM259.2 134.4h9.6v9.6h-9.6zM278.4 134.4h9.6v9.6h-9.6zM307.2 134.4h9.6v9.6h-9.6zM326.4 134.4h9.6v9.6h-9.6zM336 134.4h9.6v9.6h-9.6zM451.2 134.4h9.6v9.6h-9.6zM470.4 134.4h9.6v9.6h-9.6zM499.2 134.4h9.6v9.6h-9.6zM518.4 134.4h9.6v9.6h-9.6zM537.6 134.4h9.6v9.6h-9.6zM595.2 134.4h9.6v9.6h-9.6zM633.6 134.4h9.6v9.6h-9.6zM720 134.4h9.6v9.6h-9.6zM729.6 134.4h9.6v9.6h-9.6zM806.4 134.4h9.6v9.6h-9.6zM816 134.4h9.6v9.6h-9.6zM240 144h9.6v9.6h-9.6zM556.8 144h9.6v9.6h-9.6zM48 153.6h9.6v9.6h-9.6zM67.2 153.6h9.6v9.6h-9.6zM76.8 153.6h9.6v9.6h-9.6zM86.4 153.6h9.6v9.6h-9.6zM240 153.6h9.6v9.6h-9.6zM288 153.6h9.6v9.6h-9.6zM307.2 153.6h9.6v9.6h-9.6zM316.8 153.6h9.6v9.6h-9.6zM364.8 153.6h9.6v9.6h-9.6zM480 153.6h9.6v9.6h-9.6zM508.8 153.6h9.6v9.6h-9.6zM633.6 153.6h9.6v9.6h-9.6zM652.8 153.6h9.6v9.6h-9.6zM700.8 153.6h9.6v9.6h-9.6zM115.2 163.2h9.6v9.6h-9.6zM19.2 172.8h9.6v9.6h-9.6zM28.8 172.8h9.6v9.6h-9.6zM57.6 172.8h9.6v9.6h-9.6zM115.2 172.8h9.6v9.6h-9.6zM19.2 201.6h9.6v9.6h-9.6zM96 201.6h9.6v9.6h-9.6zM28.8 211.2h9.6v9.6h-9.6zM76.8 211.2h9.6v9.6h-9.6zM105.6 211.2h9.6v9.6h-9.6zM124.8 211.2h9.6v9.6h-9.6z"/><path fill="#ead8e4" d="M48 19.2h9.6v9.6h-9.6zM172.8 19.2h9.6v9.6h-9.6zM220.8 19.2h9.6v9.6h-9.6zM441.6 19.2h9.6v9.6h-9.6zM739.2 19.2h9.6v9.6h-9.6zM48 38.4h9.6v9.6h-9.6zM240 38.4h9.6v9.6h-9.6zM345.6 38.4h9.6v9.6h-9.6zM412.8 38.4h9.6v9.6h-9.6zM489.6 38.4h9.6v9.6h-9.6zM518.4 38.4h9.6v9.6h-9.6zM528 38.4h9.6v9.6h-9.6zM537.6 38.4h9.6v9.6h-9.6zM585.6 38.4h9.6v9.6h-9.6zM595.2 38.4h9.6v9.6h-9.6zM796.8 38.4h9.6v9.6h-9.6zM57.6 57.6h9.6v9.6h-9.6zM105.6 57.6h9.6v9.6h-9.6zM192 57.6h9.6v9.6h-9.6zM220.8 57.6h9.6v9.6h-9.6zM249.6 57.6h9.6v9.6h-9.6zM297.6 57.6h9.6v9.6h-9.6zM336 57.6h9.6v9.6h-9.6zM355.2 57.6h9.6v9.6h-9.6zM489.6 57.6h9.6v9.6h-9.6zM556.8 57.6h9.6v9.6h-9.6zM595.2 57.6h9.6v9.6h-9.6zM710.4 57.6h9.6v9.6h-9.6zM153.6 76.8h9.6v9.6h-9.6zM336 76.8h9.6v9.6h-9.6zM364.8 76.8h9.6v9.6h-9.6zM576 76.8h9.6v9.6h-9.6zM585.6 76.8h9.6v9.6h-9.6zM748.8 76.8h9.6v9.6h-9.6zM768 76.8h9.6v9.6h-9.6zM28.8 96h9.6v9.6h-9.6zM105.6 96h9.6v9.6h-9.6zM144 96h9.6v9.6h-9.6zM249.6 96h9.6v9.6h-9.6zM259.2 96h9.6v9.6h-9.6zM489.6 96h9.6v9.6h-9.6zM787.2 96h9.6v9.6h-9.6zM86.4 115.2h9.6v9.6h-9.6zM297.6 115.2h9.6v9.6h-9.6zM384 115.2h9.6v9.6h-9.6zM432 115.2h9.6v9.6h-9.6zM480 115.2h9.6v9.6h-9.6zM768 115.2h9.6v9.6h-9.6zM249.6 134.4h9.6v9.6h-9.6zM316.8 134.4h9.6v9.6h-9.6zM480 134.4h9.6v9.6h-9.6zM652.8 134.4h9.6v9.6h-9.6zM38.4 153.6h9.6v9.6h-9.6zM57.6 153.6h9.6v9.6h-9.6zM115.2 153.6h9.6v9.6h-9.6zM374.4 153.6h9.6v9.6h-9.6zM393.6 153.6h9.6v9.6h-9.6zM585.6 153.6h9.6v9.6h-9.6zM729.6 153.6h9.6v9.6h-9.6zM76.8 172.8h9.6v9.6h-9.6zM86.4 172.8h9.6v9.6h-9.6zM105.6 172.8h9.6v9.6h-9.6zM105.6 192h9.6v9.6h-9.6zM115.2 192h9.6v9.6h-9.6zM96 211.2h9.6v9.6h-9.6z"/><path fill="#ead2e4" d="M57.6 19.2h9.6v9.6h-9.6zM201.6 19.2h9.6v9.6h-9.6zM518.4 19.2h9.6v9.6h-9.6zM528 19.2h9.6v9.6h-9.6zM643.2 19.2h9.6v9.6h-9.6zM787.2 19.2h9.6v9.6h-9.6zM316.8 28.8h9.6v9.6h-9.6zM172.8 38.4h9.6v9.6h-9.6zM316.8 38.4h9.6v9.6h-9.6zM432 38.4h9.6v9.6h-9.6zM115.2 48h9.6v9.6h-9.6zM211.2 48h9.6v9.6h-9.6zM76.8 57.6h9.6v9.6h-9.6zM460.8 57.6h9.6v9.6h-9.6zM480 57.6h9.6v9.6h-9.6zM499.2 57.6h9.6v9.6h-9.6zM172.8 67.2h9.6v9.6h-9.6zM220.8 67.2h9.6v9.6h-9.6zM336 67.2h9.6v9.6h-9.6zM595.2 67.2h9.6v9.6h-9.6zM739.2 67.2h9.6v9.6h-9.6zM768 67.2h9.6v9.6h-9.6zM182.4 76.8h9.6v9.6h-9.6zM230.4 76.8h9.6v9.6h-9.6zM614.4 76.8h9.6v9.6h-9.6zM624 76.8h9.6v9.6h-9.6zM768 86.4h9.6v9.6h-9.6zM19.2 96h9.6v9.6h-9.6zM470.4 96h9.6v9.6h-9.6zM614.4 96h9.6v9.6h-9.6zM115.2 105.6h9.6v9.6h-9.6zM326.4 105.6h9.6v9.6h-9.6zM518.4 105.6h9.6v9.6h-9.6zM662.4 105.6h9.6v9.6h-9.6zM768 105.6h9.6v9.6h-9.6zM19.2 115.2h9.6v9.6h-9.6zM28.8 115.2h9.6v9.6h-9.6zM76.8 115.2h9.6v9.6h-9.6zM393.6 115.2h9.6v9.6h-9.6zM432 134.4h9.6v9.6h-9.6zM662.4 134.4h9.6v9.6h-9.6zM105.6 144h9.6v9.6h-9.6zM355.2 144h9.6v9.6h-9.6zM374.4 144h9.6v9.6h-9.6zM144 153.6h9.6v9.6h-9.6zM259.2 153.6h9.6v9.6h-9.6zM499.2 153.6h9.6v9.6h-9.6zM624 153.6h9.6v9.6h-9.6zM758.4 153.6h9.6v9.6h-9.6zM470.4 163.2h9.6v9.6h-9.6zM105.6 201.6h9.6v9.6h-9.6z"/><path fill="#f0e4ea" d="M67.2 19.2h9.6v9.6h-9.6zM96 19.2h9.6v9.6h-9.6zM105.6 19.2h9.6v9.6h-9.6zM182.4 19.2h9.6v9.6h-9.6zM240 19.2h9.6v9.6h-9.6zM288 19.2h9.6v9.6h-9.6zM480 19.2h9.6v9.6h-9.6zM720 19.2h9.6v9.6h-9.6zM499.2 28.8h9.6v9.6h-9.6zM38.4 38.4h9.6v9.6h-9.6zM57.6 38.4h9.6v9.6h-9.6zM115.2 38.4h9.6v9.6h-9.6zM124.8 38.4h9.6v9.6h-9.6zM134.4 38.4h9.6v9.6h-9.6zM268.8 38.4h9.6v9.6h-9.6zM288 38.4h9.6v9.6h-9.6zM384 38.4h9.6v9.6h-9.6zM460.8 38.4h9.6v9.6h-9.6zM470.4 38.4h9.6v9.6h-9.6zM739.2 38.4h9.6v9.6h-9.6zM748.8 38.4h9.6v9.6h-9.6zM230.4 48h9.6v9.6h-9.6zM48 57.6h9.6v9.6h-9.6zM67.2 57.6h9.6v9.6h-9.6zM86.4 57.6h9.6v9.6h-9.6zM144 57.6h9.6v9.6h-9.6zM153.6 57.6h9.6v9.6h-9.6zM163.2 57.6h9.6v9.6h-9.6zM211.2 57.6h9.6v9.6h-9.6zM345.6 57.6h9.6v9.6h-9.6zM412.8 57.6h9.6v9.6h-9.6zM537.6 57.6h9.6v9.6h-9.6zM748.8 57.6h9.6v9.6h-9.6zM259.2 67.2h9.6v9.6h-9.6zM96 76.8h9.6v9.6h-9.6zM105.6 76.8h9.6v9.6h-9.6zM115.2 76.8h9.6v9.6h-9.6zM163.2 76.8h9.6v9.6h-9.6zM220.8 76.8h9.6v9.6h-9.6zM249.6 76.8h9.6v9.6h-9.6zM355.2 76.8h9.6v9.6h-9.6zM422.4 76.8h9.6v9.6h-9.6zM441.6 76.8h9.6v9.6h-9.6zM460.8 76.8h9.6v9.6h-9.6zM528 76.8h9.6v9.6h-9.6zM652.8 76.8h9.6v9.6h-9.6zM672 76.8h9.6v9.6h-9.6zM681.6 76.8h9.6v9.6h-9.6zM758.4 76.8h9.6v9.6h-9.6zM787.2 76.8h9.6v9.6h-9.6zM288 96h9.6v9.6h-9.6zM355.2 96h9.6v9.6h-9.6zM432 96h9.6v9.6h-9.6zM528 96h9.6v9.6h-9.6zM345.6 105.6h9.6v9.6h-9.6zM38.4 115.2h9.6v9.6h-9.6zM153.6 115.2h9.6v9.6h-9.6zM345.6 115.2h9.6v9.6h-9.6zM422.4 115.2h9.6v9.6h-9.6zM470.4 115.2h9.6v9.6h-9.6zM576 115.2h9.6v9.6h-9.6zM796.8 115.2h9.6v9.6h-9.6zM115.2 134.4h9.6v9.6h-9.6zM201.6 134.4h9.6v9.6h-9.6zM345.6 134.4h9.6v9.6h-9.6zM393.6 134.4h9.6v9.6h-9.6zM489.6 134.4h9.6v9.6h-9.6zM672 134.4h9.6v9.6h-9.6zM681.6 134.4h9.6v9.6h-9.6zM115.2 144h9.6v9.6h-9.6zM163.2 153.6h9.6v9.6h-9.6zM211.2 153.6h9.6v9.6h-9.6zM249.6 153.6h9.6v9.6h-9.6zM412.8 153.6h9.6v9.6h-9.6zM460.8 153.6h9.6v9.6h-9.6zM470.4 153.6h9.6v9.6h-9.6zM489.6 153.6h9.6v9.6h-9.6zM518.4 153.6h9.6v9.6h-9.6zM595.2 153.6h9.6v9.6h-9.6zM662.4 153.6h9.6v9.6h-9.6zM672 153.6h9.6v9.6h-9.6zM787.2 153.6h9.6v9.6h-9.6zM796.8 153.6h9.6v9.6h-9.6zM86.4 211.2h9.6v9.6h-9.6z"/><path fill="#f0deea" d="M76.8 19.2h9.6v9.6h-9.6zM124.8 19.2h9.6v9.6h-9.6zM268.8 19.2h9.6v9.6h-9.6zM336 19.2h9.6v9.6h-9.6zM374.4 19.2h9.6v9.6h-9.6zM412.8 19.2h9.6v9.6h-9.6zM614.4 19.2h9.6v9.6h-9.6zM115.2 28.8h9.6v9.6h-9.6zM288 28.8h9.6v9.6h-9.6zM355.2 28.8h9.6v9.6h-9.6zM585.6 28.8h9.6v9.6h-9.6zM67.2 38.4h9.6v9.6h-9.6zM307.2 38.4h9.6v9.6h-9.6zM422.4 38.4h9.6v9.6h-9.6zM441.6 38.4h9.6v9.6h-9.6zM576 38.4h9.6v9.6h-9.6zM672 38.4h9.6v9.6h-9.6zM681.6 38.4h9.6v9.6h-9.6zM710.4 38.4h9.6v9.6h-9.6zM729.6 38.4h9.6v9.6h-9.6zM777.6 38.4h9.6v9.6h-9.6zM787.2 38.4h9.6v9.6h-9.6zM86.4 48h9.6v9.6h-9.6zM691.2 48h9.6v9.6h-9.6zM182.4 57.6h9.6v9.6h-9.6zM278.4 57.6h9.6v9.6h-9.6zM307.2 57.6h9.6v9.6h-9.6zM393.6 57.6h9.6v9.6h-9.6zM432 57.6h9.6v9.6h-9.6zM470.4 57.6h9.6v9.6h-9.6zM528 57.6h9.6v9.6h-9.6zM700.8 57.6h9.6v9.6h-9.6zM307.2 67.2h9.6v9.6h-9.6zM537.6 67.2h9.6v9.6h-9.6zM307.2 76.8h9.6v9.6h-9.6zM326.4 76.8h9.6v9.6h-9.6zM480 76.8h9.6v9.6h-9.6zM499.2 76.8h9.6v9.6h-9.6zM556.8 76.8h9.6v9.6h-9.6zM566.4 76.8h9.6v9.6h-9.6zM384 96h9.6v9.6h-9.6zM412.8 96h9.6v9.6h-9.6zM604.8 96h9.6v9.6h-9.6zM652.8 96h9.6v9.6h-9.6zM508.8 105.6h9.6v9.6h-9.6zM777.6 105.6h9.6v9.6h-9.6zM57.6 115.2h9.6v9.6h-9.6zM67.2 115.2h9.6v9.6h-9.6zM115.2 115.2h9.6v9.6h-9.6zM192 115.2h9.6v9.6h-9.6zM211.2 115.2h9.6v9.6h-9.6zM460.8 115.2h9.6v9.6h-9.6zM595.2 115.2h9.6v9.6h-9.6zM806.4 115.2h9.6v9.6h-9.6zM816 115.2h9.6v9.6h-9.6zM172.8 124.8h9.6v9.6h-9.6zM48 134.4h9.6v9.6h-9.6zM96 134.4h9.6v9.6h-9.6zM124.8 134.4h9.6v9.6h-9.6zM153.6 134.4h9.6v9.6h-9.6zM240 134.4h9.6v9.6h-9.6zM297.6 134.4h9.6v9.6h-9.6zM374.4 134.4h9.6v9.6h-9.6zM441.6 134.4h9.6v9.6h-9.6zM566.4 134.4h9.6v9.6h-9.6zM576 134.4h9.6v9.6h-9.6zM748.8 134.4h9.6v9.6h-9.6zM796.8 134.4h9.6v9.6h-9.6zM297.6 144h9.6v9.6h-9.6zM153.6 153.6h9.6v9.6h-9.6zM326.4 153.6h9.6v9.6h-9.6zM355.2 153.6h9.6v9.6h-9.6zM556.8 153.6h9.6v9.6h-9.6zM777.6 153.6h9.6v9.6h-9.6zM19.2 163.2h9.6v9.6h-9.6zM316.8 163.2h9.6v9.6h-9.6zM345.6 163.2h9.6v9.6h-9.6zM547.2 163.2h9.6v9.6h-9.6zM19.2 192h9.6v9.6h-9.6zM48 211.2h9.6v9.6h-9.6z"/><path fill="#fcf0f0" d="M115.2 19.2h9.6v9.6h-9.6zM211.2 19.2h9.6v9.6h-9.6zM259.2 19.2h9.6v9.6h-9.6zM307.2 19.2h9.6v9.6h-9.6zM345.6 19.2h9.6v9.6h-9.6zM355.2 19.2h9.6v9.6h-9.6zM422.4 19.2h9.6v9.6h-9.6zM499.2 19.2h9.6v9.6h-9.6zM566.4 19.2h9.6v9.6h-9.6zM595.2 19.2h9.6v9.6h-9.6zM672 19.2h9.6v9.6h-9.6zM758.4 19.2h9.6v9.6h-9.6zM796.8 19.2h9.6v9.6h-9.6zM806.4 19.2h9.6v9.6h-9.6zM28.8 38.4h9.6v9.6h-9.6zM76.8 38.4h9.6v9.6h-9.6zM96 38.4h9.6v9.6h-9.6zM144 38.4h9.6v9.6h-9.6zM153.6 38.4h9.6v9.6h-9.6zM163.2 38.4h9.6v9.6h-9.6zM201.6 38.4h9.6v9.6h-9.6zM326.4 38.4h9.6v9.6h-9.6zM364.8 38.4h9.6v9.6h-9.6zM374.4 38.4h9.6v9.6h-9.6zM691.2 38.4h9.6v9.6h-9.6zM38.4 57.6h9.6v9.6h-9.6zM96 57.6h9.6v9.6h-9.6zM230.4 57.6h9.6v9.6h-9.6zM240 57.6h9.6v9.6h-9.6zM268.8 57.6h9.6v9.6h-9.6zM288 57.6h9.6v9.6h-9.6zM316.8 57.6h9.6v9.6h-9.6zM326.4 57.6h9.6v9.6h-9.6zM585.6 57.6h9.6v9.6h-9.6zM624 57.6h9.6v9.6h-9.6zM633.6 57.6h9.6v9.6h-9.6zM691.2 57.6h9.6v9.6h-9.6zM720 57.6h9.6v9.6h-9.6zM777.6 57.6h9.6v9.6h-9.6zM787.2 57.6h9.6v9.6h-9.6zM796.8 57.6h9.6v9.6h-9.6zM806.4 57.6h9.6v9.6h-9.6zM57.6 76.8h9.6v9.6h-9.6zM76.8 76.8h9.6v9.6h-9.6zM172.8 76.8h9.6v9.6h-9.6zM211.2 76.8h9.6v9.6h-9.6zM240 76.8h9.6v9.6h-9.6zM259.2 76.8h9.6v9.6h-9.6zM278.4 76.8h9.6v9.6h-9.6zM384 76.8h9.6v9.6h-9.6zM403.2 76.8h9.6v9.6h-9.6zM432 76.8h9.6v9.6h-9.6zM508.8 76.8h9.6v9.6h-9.6zM806.4 76.8h9.6v9.6h-9.6zM67.2 96h9.6v9.6h-9.6zM124.8 96h9.6v9.6h-9.6zM163.2 96h9.6v9.6h-9.6zM182.4 96h9.6v9.6h-9.6zM220.8 96h9.6v9.6h-9.6zM268.8 96h9.6v9.6h-9.6zM278.4 96h9.6v9.6h-9.6zM297.6 96h9.6v9.6h-9.6zM499.2 96h9.6v9.6h-9.6zM518.4 96h9.6v9.6h-9.6zM537.6 96h9.6v9.6h-9.6zM547.2 96h9.6v9.6h-9.6zM556.8 96h9.6v9.6h-9.6zM624 96h9.6v9.6h-9.6zM643.2 96h9.6v9.6h-9.6zM691.2 96h9.6v9.6h-9.6zM758.4 96h9.6v9.6h-9.6zM96 115.2h9.6v9.6h-9.6zM124.8 115.2h9.6v9.6h-9.6zM134.4 115.2h9.6v9.6h-9.6zM182.4 115.2h9.6v9.6h-9.6zM268.8 115.2h9.6v9.6h-9.6zM316.8 115.2h9.6v9.6h-9.6zM489.6 115.2h9.6v9.6h-9.6zM499.2 115.2h9.6v9.6h-9.6zM508.8 115.2h9.6v9.6h-9.6zM528 115.2h9.6v9.6h-9.6zM547.2 115.2h9.6v9.6h-9.6zM585.6 115.2h9.6v9.6h-9.6zM614.4 115.2h9.6v9.6h-9.6zM691.2 115.2h9.6v9.6h-9.6zM700.8 115.2h9.6v9.6h-9.6zM729.6 115.2h9.6v9.6h-9.6zM38.4 134.4h9.6v9.6h-9.6zM134.4 134.4h9.6v9.6h-9.6zM144 134.4h9.6v9.6h-9.6zM172.8 134.4h9.6v9.6h-9.6zM182.4 134.4h9.6v9.6h-9.6zM220.8 134.4h9.6v9.6h-9.6zM288 134.4h9.6v9.6h-9.6zM384 134.4h9.6v9.6h-9.6zM585.6 134.4h9.6v9.6h-9.6zM604.8 134.4h9.6v9.6h-9.6zM624 134.4h9.6v9.6h-9.6zM691.2 134.4h9.6v9.6h-9.6zM710.4 134.4h9.6v9.6h-9.6zM28.8 153.6h9.6v9.6h-9.6zM96 153.6h9.6v9.6h-9.6zM134.4 153.6h9.6v9.6h-9.6zM172.8 153.6h9.6v9.6h-9.6zM182.4 153.6h9.6v9.6h-9.6zM230.4 153.6h9.6v9.6h-9.6zM268.8 153.6h9.6v9.6h-9.6zM384 153.6h9.6v9.6h-9.6zM403.2 153.6h9.6v9.6h-9.6zM422.4 153.6h9.6v9.6h-9.6zM441.6 153.6h9.6v9.6h-9.6zM566.4 153.6h9.6v9.6h-9.6zM604.8 153.6h9.6v9.6h-9.6zM720 153.6h9.6v9.6h-9.6zM739.2 153.6h9.6v9.6h-9.6zM816 153.6h9.6v9.6h-9.6zM67.2 172.8h9.6v9.6h-9.6zM28.8 192h9.6v9.6h-9.6zM67.2 192h9.6v9.6h-9.6zM76.8 192h9.6v9.6h-9.6zM86.4 192h9.6v9.6h-9.6zM96 192h9.6v9.6h-9.6zM38.4 211.2h9.6v9.6h-9.6zM57.6 211.2h9.6v9.6h-9.6zM67.2 211.2h9.6v9.6h-9.6z"/><path fill="#e4c6de" d="M134.4 19.2h9.6v9.6h-9.6zM768 38.4h9.6v9.6h-9.6zM604.8 76.8h9.6v9.6h-9.6zM240 96h9.6v9.6h-9.6zM595.2 96h9.6v9.6h-9.6zM624 105.6h9.6v9.6h-9.6zM307.2 115.2h9.6v9.6h-9.6zM720 115.2h9.6v9.6h-9.6zM288 124.8h9.6v9.6h-9.6zM230.4 134.4h9.6v9.6h-9.6z"/><path fill="#ead8ea" d="M153.6 19.2h9.6v9.6h-9.6zM57.6 28.8h9.6v9.6h-9.6zM816 28.8h9.6v9.6h-9.6zM28.8 48h9.6v9.6h-9.6zM105.6 48h9.6v9.6h-9.6zM96 67.2h9.6v9.6h-9.6zM144 67.2h9.6v9.6h-9.6zM230.4 67.2h9.6v9.6h-9.6zM412.8 67.2h9.6v9.6h-9.6zM441.6 67.2h9.6v9.6h-9.6zM691.2 67.2h9.6v9.6h-9.6zM19.2 86.4h9.6v9.6h-9.6zM182.4 86.4h9.6v9.6h-9.6zM710.4 86.4h9.6v9.6h-9.6zM777.6 86.4h9.6v9.6h-9.6zM57.6 105.6h9.6v9.6h-9.6zM172.8 105.6h9.6v9.6h-9.6zM374.4 105.6h9.6v9.6h-9.6zM403.2 105.6h9.6v9.6h-9.6zM566.4 105.6h9.6v9.6h-9.6zM48 124.8h9.6v9.6h-9.6zM86.4 124.8h9.6v9.6h-9.6zM297.6 124.8h9.6v9.6h-9.6zM768 124.8h9.6v9.6h-9.6zM28.8 134.4h9.6v9.6h-9.6zM172.8 144h9.6v9.6h-9.6zM192 144h9.6v9.6h-9.6zM412.8 144h9.6v9.6h-9.6zM528 144h9.6v9.6h-9.6zM595.2 144h9.6v9.6h-9.6zM758.4 144h9.6v9.6h-9.6zM768 144h9.6v9.6h-9.6zM230.4 163.2h9.6v9.6h-9.6zM364.8 163.2h9.6v9.6h-9.6zM518.4 163.2h9.6v9.6h-9.6zM662.4 163.2h9.6v9.6h-9.6zM105.6 182.4h9.6v9.6h-9.6z"/><path fill="#fcf6f0" d="M230.4 19.2h9.6v9.6h-9.6zM316.8 19.2h9.6v9.6h-9.6zM681.6 19.2h9.6v9.6h-9.6zM700.8 19.2h9.6v9.6h-9.6zM748.8 19.2h9.6v9.6h-9.6zM777.6 19.2h9.6v9.6h-9.6zM816 19.2h9.6v9.6h-9.6zM86.4 38.4h9.6v9.6h-9.6zM105.6 38.4h9.6v9.6h-9.6zM211.2 38.4h9.6v9.6h-9.6zM297.6 38.4h9.6v9.6h-9.6zM393.6 38.4h9.6v9.6h-9.6zM624 38.4h9.6v9.6h-9.6zM652.8 38.4h9.6v9.6h-9.6zM816 38.4h9.6v9.6h-9.6zM134.4 57.6h9.6v9.6h-9.6zM201.6 57.6h9.6v9.6h-9.6zM672 57.6h9.6v9.6h-9.6zM729.6 57.6h9.6v9.6h-9.6zM768 57.6h9.6v9.6h-9.6zM268.8 76.8h9.6v9.6h-9.6zM374.4 76.8h9.6v9.6h-9.6zM489.6 76.8h9.6v9.6h-9.6zM720 76.8h9.6v9.6h-9.6zM796.8 76.8h9.6v9.6h-9.6zM38.4 96h9.6v9.6h-9.6zM86.4 96h9.6v9.6h-9.6zM153.6 96h9.6v9.6h-9.6zM230.4 96h9.6v9.6h-9.6zM364.8 96h9.6v9.6h-9.6zM393.6 96h9.6v9.6h-9.6zM681.6 96h9.6v9.6h-9.6zM816 96h9.6v9.6h-9.6zM144 115.2h9.6v9.6h-9.6zM249.6 115.2h9.6v9.6h-9.6zM278.4 115.2h9.6v9.6h-9.6zM336 115.2h9.6v9.6h-9.6zM566.4 115.2h9.6v9.6h-9.6zM652.8 115.2h9.6v9.6h-9.6zM662.4 115.2h9.6v9.6h-9.6zM787.2 115.2h9.6v9.6h-9.6zM67.2 134.4h9.6v9.6h-9.6zM508.8 134.4h9.6v9.6h-9.6zM787.2 134.4h9.6v9.6h-9.6zM124.8 153.6h9.6v9.6h-9.6zM297.6 153.6h9.6v9.6h-9.6zM614.4 153.6h9.6v9.6h-9.6zM768 153.6h9.6v9.6h-9.6zM19.2 211.2h9.6v9.6h-9.6z"/><path fill="#f6e4f0" d="M249.6 19.2h9.6v9.6h-9.6zM595.2 76.8h9.6v9.6h-9.6zM96 96h9.6v9.6h-9.6zM355.2 115.2h9.6v9.6h-9.6zM537.6 115.2h9.6v9.6h-9.6zM624 115.2h9.6v9.6h-9.6zM710.4 115.2h9.6v9.6h-9.6zM748.8 115.2h9.6v9.6h-9.6zM528 153.6h9.6v9.6h-9.6zM710.4 153.6h9.6v9.6h-9.6z"/><path fill="#f0e4f0" d="M278.4 19.2h9.6v9.6h-9.6zM508.8 19.2h9.6v9.6h-9.6zM624 19.2h9.6v9.6h-9.6zM278.4 28.8h9.6v9.6h-9.6zM460.8 28.8h9.6v9.6h-9.6zM38.4 48h9.6v9.6h-9.6zM134.4 48h9.6v9.6h-9.6zM307.2 48h9.6v9.6h-9.6zM499.2 48h9.6v9.6h-9.6zM508.8 48h9.6v9.6h-9.6zM748.8 48h9.6v9.6h-9.6zM403.2 57.6h9.6v9.6h-9.6zM604.8 67.2h9.6v9.6h-9.6zM652.8 67.2h9.6v9.6h-9.6zM172.8 86.4h9.6v9.6h-9.6zM336 86.4h9.6v9.6h-9.6zM451.2 86.4h9.6v9.6h-9.6zM672 86.4h9.6v9.6h-9.6zM38.4 105.6h9.6v9.6h-9.6zM67.2 105.6h9.6v9.6h-9.6zM240 105.6h9.6v9.6h-9.6zM518.4 124.8h9.6v9.6h-9.6zM758.4 124.8h9.6v9.6h-9.6zM268.8 144h9.6v9.6h-9.6zM345.6 144h9.6v9.6h-9.6zM787.2 144h9.6v9.6h-9.6zM806.4 144h9.6v9.6h-9.6zM345.6 153.6h9.6v9.6h-9.6zM307.2 163.2h9.6v9.6h-9.6zM326.4 163.2h9.6v9.6h-9.6zM355.2 163.2h9.6v9.6h-9.6zM393.6 163.2h9.6v9.6h-9.6zM441.6 163.2h9.6v9.6h-9.6z"/><path fill="#f6f0f0" d="M326.4 19.2h9.6v9.6h-9.6zM403.2 19.2h9.6v9.6h-9.6zM489.6 19.2h9.6v9.6h-9.6zM556.8 19.2h9.6v9.6h-9.6zM585.6 19.2h9.6v9.6h-9.6zM633.6 19.2h9.6v9.6h-9.6zM729.6 19.2h9.6v9.6h-9.6zM249.6 38.4h9.6v9.6h-9.6zM499.2 38.4h9.6v9.6h-9.6zM633.6 38.4h9.6v9.6h-9.6zM720 38.4h9.6v9.6h-9.6zM480 48h9.6v9.6h-9.6zM566.4 48h9.6v9.6h-9.6zM662.4 48h9.6v9.6h-9.6zM124.8 57.6h9.6v9.6h-9.6zM374.4 57.6h9.6v9.6h-9.6zM652.8 57.6h9.6v9.6h-9.6zM681.6 57.6h9.6v9.6h-9.6zM19.2 76.8h9.6v9.6h-9.6zM124.8 76.8h9.6v9.6h-9.6zM192 76.8h9.6v9.6h-9.6zM316.8 76.8h9.6v9.6h-9.6zM451.2 76.8h9.6v9.6h-9.6zM470.4 76.8h9.6v9.6h-9.6zM710.4 76.8h9.6v9.6h-9.6zM777.6 76.8h9.6v9.6h-9.6zM288 86.4h9.6v9.6h-9.6zM201.6 96h9.6v9.6h-9.6zM336 96h9.6v9.6h-9.6zM403.2 96h9.6v9.6h-9.6zM508.8 96h9.6v9.6h-9.6zM576 96h9.6v9.6h-9.6zM672 96h9.6v9.6h-9.6zM700.8 96h9.6v9.6h-9.6zM739.2 96h9.6v9.6h-9.6zM729.6 105.6h9.6v9.6h-9.6zM288 115.2h9.6v9.6h-9.6zM326.4 115.2h9.6v9.6h-9.6zM374.4 115.2h9.6v9.6h-9.6zM403.2 115.2h9.6v9.6h-9.6zM556.8 115.2h9.6v9.6h-9.6zM604.8 115.2h9.6v9.6h-9.6zM643.2 115.2h9.6v9.6h-9.6zM681.6 115.2h9.6v9.6h-9.6zM76.8 134.4h9.6v9.6h-9.6zM86.4 134.4h9.6v9.6h-9.6zM105.6 134.4h9.6v9.6h-9.6zM268.8 134.4h9.6v9.6h-9.6zM364.8 134.4h9.6v9.6h-9.6zM403.2 134.4h9.6v9.6h-9.6zM422.4 134.4h9.6v9.6h-9.6zM528 134.4h9.6v9.6h-9.6zM556.8 134.4h9.6v9.6h-9.6zM643.2 134.4h9.6v9.6h-9.6zM758.4 134.4h9.6v9.6h-9.6zM384 144h9.6v9.6h-9.6zM672 144h9.6v9.6h-9.6zM105.6 153.6h9.6v9.6h-9.6zM192 153.6h9.6v9.6h-9.6zM432 153.6h9.6v9.6h-9.6zM451.2 153.6h9.6v9.6h-9.6zM547.2 153.6h9.6v9.6h-9.6zM576 153.6h9.6v9.6h-9.6zM748.8 153.6h9.6v9.6h-9.6zM806.4 153.6h9.6v9.6h-9.6zM566.4 163.2h9.6v9.6h-9.6zM585.6 163.2h9.6v9.6h-9.6zM624 163.2h9.6v9.6h-9.6zM96 172.8h9.6v9.6h-9.6zM124.8 172.8h9.6v9.6h-9.6zM38.4 192h9.6v9.6h-9.6zM124.8 192h9.6v9.6h-9.6zM76.8 201.6h9.6v9.6h-9.6zM115.2 211.2h9.6v9.6h-9.6z"/><path fill="#f0d8ea" d="M537.6 19.2h9.6v9.6h-9.6zM710.4 19.2h9.6v9.6h-9.6zM614.4 38.4h9.6v9.6h-9.6zM422.4 57.6h9.6v9.6h-9.6zM547.2 57.6h9.6v9.6h-9.6zM816 57.6h9.6v9.6h-9.6zM729.6 76.8h9.6v9.6h-9.6zM729.6 96h9.6v9.6h-9.6zM796.8 96h9.6v9.6h-9.6zM259.2 115.2h9.6v9.6h-9.6zM739.2 134.4h9.6v9.6h-9.6zM643.2 153.6h9.6v9.6h-9.6z"/><path fill="#d8aed2" d="M19.2 28.8h9.6v9.6h-9.6zM144 28.8h9.6v9.6h-9.6zM316.8 48h9.6v9.6h-9.6zM806.4 67.2h9.6v9.6h-9.6zM787.2 86.4h9.6v9.6h-9.6zM470.4 105.6h9.6v9.6h-9.6zM422.4 124.8h9.6v9.6h-9.6zM528 124.8h9.6v9.6h-9.6zM134.4 144h9.6v9.6h-9.6zM384 201.6h9.6v9.6h-9.6z"/><path fill="#cc9ccc" d="M28.8 28.8h9.6v9.6h-9.6zM297.6 28.8h9.6v9.6h-9.6zM547.2 28.8h9.6v9.6h-9.6zM796.8 28.8h9.6v9.6h-9.6zM374.4 48h9.6v9.6h-9.6zM412.8 48h9.6v9.6h-9.6zM576 48h9.6v9.6h-9.6zM585.6 48h9.6v9.6h-9.6zM604.8 48h9.6v9.6h-9.6zM787.2 48h9.6v9.6h-9.6zM48 67.2h9.6v9.6h-9.6zM105.6 67.2h9.6v9.6h-9.6zM297.6 67.2h9.6v9.6h-9.6zM316.8 67.2h9.6v9.6h-9.6zM451.2 67.2h9.6v9.6h-9.6zM633.6 67.2h9.6v9.6h-9.6zM729.6 67.2h9.6v9.6h-9.6zM576 86.4h9.6v9.6h-9.6zM614.4 86.4h9.6v9.6h-9.6zM643.2 86.4h9.6v9.6h-9.6zM758.4 86.4h9.6v9.6h-9.6zM758.4 105.6h9.6v9.6h-9.6zM796.8 105.6h9.6v9.6h-9.6zM115.2 124.8h9.6v9.6h-9.6zM134.4 124.8h9.6v9.6h-9.6zM633.6 124.8h9.6v9.6h-9.6zM710.4 124.8h9.6v9.6h-9.6zM748.8 124.8h9.6v9.6h-9.6zM48 144h9.6v9.6h-9.6zM259.2 144h9.6v9.6h-9.6zM691.2 144h9.6v9.6h-9.6zM748.8 144h9.6v9.6h-9.6zM28.8 163.2h9.6v9.6h-9.6zM57.6 163.2h9.6v9.6h-9.6zM220.8 163.2h9.6v9.6h-9.6zM633.6 163.2h9.6v9.6h-9.6zM729.6 163.2h9.6v9.6h-9.6zM796.8 163.2h9.6v9.6h-9.6zM76.8 182.4h9.6v9.6h-9.6zM86.4 182.4h9.6v9.6h-9.6zM796.8 182.4h9.6v9.6h-9.6zM28.8 201.6h9.6v9.6h-9.6zM86.4 201.6h9.6v9.6h-9.6z"/><path fill="#d2a8d2" d="M38.4 28.8h9.6v9.6h-9.6zM86.4 28.8h9.6v9.6h-9.6zM604.8 28.8h9.6v9.6h-9.6zM432 48h9.6v9.6h-9.6zM681.6 48h9.6v9.6h-9.6zM758.4 48h9.6v9.6h-9.6zM556.8 67.2h9.6v9.6h-9.6zM67.2 86.4h9.6v9.6h-9.6zM326.4 86.4h9.6v9.6h-9.6zM374.4 86.4h9.6v9.6h-9.6zM595.2 86.4h9.6v9.6h-9.6zM96 105.6h9.6v9.6h-9.6zM201.6 105.6h9.6v9.6h-9.6zM220.8 105.6h9.6v9.6h-9.6zM336 105.6h9.6v9.6h-9.6zM556.8 105.6h9.6v9.6h-9.6zM643.2 105.6h9.6v9.6h-9.6zM163.2 124.8h9.6v9.6h-9.6zM268.8 124.8h9.6v9.6h-9.6zM374.4 124.8h9.6v9.6h-9.6zM480 124.8h9.6v9.6h-9.6zM489.6 124.8h9.6v9.6h-9.6zM19.2 144h9.6v9.6h-9.6zM57.6 144h9.6v9.6h-9.6zM76.8 163.2h9.6v9.6h-9.6zM432 163.2h9.6v9.6h-9.6zM691.2 163.2h9.6v9.6h-9.6zM57.6 182.4h9.6v9.6h-9.6z"/><path fill="#debad8" d="M48 28.8h9.6v9.6h-9.6zM556.8 28.8h9.6v9.6h-9.6zM86.4 67.2h9.6v9.6h-9.6zM268.8 67.2h9.6v9.6h-9.6zM211.2 86.4h9.6v9.6h-9.6zM249.6 86.4h9.6v9.6h-9.6zM547.2 86.4h9.6v9.6h-9.6zM585.6 105.6h9.6v9.6h-9.6zM672 105.6h9.6v9.6h-9.6zM556.8 124.8h9.6v9.6h-9.6zM604.8 124.8h9.6v9.6h-9.6zM470.4 144h9.6v9.6h-9.6zM508.8 144h9.6v9.6h-9.6zM576 144h9.6v9.6h-9.6zM422.4 163.2h9.6v9.6h-9.6zM451.2 163.2h9.6v9.6h-9.6zM336 201.6h9.6v9.6h-9.6zM662.4 201.6h9.6v9.6h-9.6z"/><path fill="#d2a2d2" d="M67.2 28.8h9.6v9.6h-9.6zM163.2 67.2h9.6v9.6h-9.6zM422.4 67.2h9.6v9.6h-9.6zM787.2 67.2h9.6v9.6h-9.6zM316.8 86.4h9.6v9.6h-9.6zM355.2 86.4h9.6v9.6h-9.6zM806.4 105.6h9.6v9.6h-9.6zM816 105.6h9.6v9.6h-9.6zM67.2 182.4h9.6v9.6h-9.6z"/><path fill="#d8aed8" d="M96 28.8h9.6v9.6h-9.6zM96 48h9.6v9.6h-9.6zM364.8 48h9.6v9.6h-9.6zM441.6 48h9.6v9.6h-9.6zM460.8 67.2h9.6v9.6h-9.6zM460.8 86.4h9.6v9.6h-9.6zM624 86.4h9.6v9.6h-9.6zM681.6 86.4h9.6v9.6h-9.6zM384 105.6h9.6v9.6h-9.6zM441.6 105.6h9.6v9.6h-9.6zM441.6 124.8h9.6v9.6h-9.6zM508.8 124.8h9.6v9.6h-9.6zM537.6 124.8h9.6v9.6h-9.6zM806.4 124.8h9.6v9.6h-9.6zM614.4 144h9.6v9.6h-9.6zM643.2 144h9.6v9.6h-9.6zM48 163.2h9.6v9.6h-9.6zM192 163.2h9.6v9.6h-9.6zM528 163.2h9.6v9.6h-9.6zM537.6 163.2h9.6v9.6h-9.6zM124.8 182.4h9.6v9.6h-9.6z"/><path fill="#e4c0de" d="M105.6 28.8h9.6v9.6h-9.6zM153.6 28.8h9.6v9.6h-9.6zM614.4 28.8h9.6v9.6h-9.6zM662.4 28.8h9.6v9.6h-9.6zM163.2 48h9.6v9.6h-9.6zM220.8 48h9.6v9.6h-9.6zM422.4 48h9.6v9.6h-9.6zM537.6 48h9.6v9.6h-9.6zM739.2 48h9.6v9.6h-9.6zM153.6 67.2h9.6v9.6h-9.6zM374.4 67.2h9.6v9.6h-9.6zM470.4 67.2h9.6v9.6h-9.6zM489.6 67.2h9.6v9.6h-9.6zM643.2 67.2h9.6v9.6h-9.6zM758.4 67.2h9.6v9.6h-9.6zM384 86.4h9.6v9.6h-9.6zM537.6 86.4h9.6v9.6h-9.6zM566.4 86.4h9.6v9.6h-9.6zM48 105.6h9.6v9.6h-9.6zM355.2 105.6h9.6v9.6h-9.6zM451.2 105.6h9.6v9.6h-9.6zM576 105.6h9.6v9.6h-9.6zM681.6 105.6h9.6v9.6h-9.6zM67.2 124.8h9.6v9.6h-9.6zM192 124.8h9.6v9.6h-9.6zM211.2 124.8h9.6v9.6h-9.6zM220.8 124.8h9.6v9.6h-9.6zM499.2 124.8h9.6v9.6h-9.6zM796.8 124.8h9.6v9.6h-9.6zM480 144h9.6v9.6h-9.6zM499.2 144h9.6v9.6h-9.6zM566.4 144h9.6v9.6h-9.6zM624 144h9.6v9.6h-9.6zM633.6 144h9.6v9.6h-9.6zM240 163.2h9.6v9.6h-9.6zM259.2 163.2h9.6v9.6h-9.6z"/><path fill="#c690c6" d="M124.8 28.8h9.6v9.6h-9.6zM576 28.8h9.6v9.6h-9.6zM729.6 28.8h9.6v9.6h-9.6zM758.4 28.8h9.6v9.6h-9.6zM470.4 48h9.6v9.6h-9.6zM768 48h9.6v9.6h-9.6zM777.6 48h9.6v9.6h-9.6zM806.4 48h9.6v9.6h-9.6zM67.2 67.2h9.6v9.6h-9.6zM614.4 67.2h9.6v9.6h-9.6zM748.8 67.2h9.6v9.6h-9.6zM57.6 86.4h9.6v9.6h-9.6zM153.6 86.4h9.6v9.6h-9.6zM201.6 86.4h9.6v9.6h-9.6zM230.4 86.4h9.6v9.6h-9.6zM307.2 86.4h9.6v9.6h-9.6zM412.8 86.4h9.6v9.6h-9.6zM412.8 105.6h9.6v9.6h-9.6zM230.4 124.8h9.6v9.6h-9.6zM547.2 124.8h9.6v9.6h-9.6zM624 124.8h9.6v9.6h-9.6zM796.8 144h9.6v9.6h-9.6zM67.2 163.2h9.6v9.6h-9.6zM489.6 163.2h9.6v9.6h-9.6z"/><path fill="#ead2ea" d="M134.4 28.8h9.6v9.6h-9.6zM259.2 28.8h9.6v9.6h-9.6zM537.6 28.8h9.6v9.6h-9.6zM624 28.8h9.6v9.6h-9.6zM633.6 28.8h9.6v9.6h-9.6zM249.6 48h9.6v9.6h-9.6zM403.2 48h9.6v9.6h-9.6zM518.4 48h9.6v9.6h-9.6zM652.8 48h9.6v9.6h-9.6zM710.4 48h9.6v9.6h-9.6zM249.6 67.2h9.6v9.6h-9.6zM355.2 67.2h9.6v9.6h-9.6zM384 67.2h9.6v9.6h-9.6zM585.6 67.2h9.6v9.6h-9.6zM710.4 67.2h9.6v9.6h-9.6zM816 67.2h9.6v9.6h-9.6zM105.6 86.4h9.6v9.6h-9.6zM115.2 86.4h9.6v9.6h-9.6zM432 86.4h9.6v9.6h-9.6zM480 86.4h9.6v9.6h-9.6zM739.2 86.4h9.6v9.6h-9.6zM806.4 86.4h9.6v9.6h-9.6zM19.2 105.6h9.6v9.6h-9.6zM259.2 105.6h9.6v9.6h-9.6zM364.8 105.6h9.6v9.6h-9.6zM739.2 105.6h9.6v9.6h-9.6zM748.8 105.6h9.6v9.6h-9.6zM240 124.8h9.6v9.6h-9.6zM278.4 124.8h9.6v9.6h-9.6zM345.6 124.8h9.6v9.6h-9.6zM470.4 124.8h9.6v9.6h-9.6zM595.2 124.8h9.6v9.6h-9.6zM700.8 124.8h9.6v9.6h-9.6zM787.2 124.8h9.6v9.6h-9.6zM816 124.8h9.6v9.6h-9.6zM67.2 144h9.6v9.6h-9.6zM163.2 144h9.6v9.6h-9.6zM211.2 144h9.6v9.6h-9.6zM230.4 144h9.6v9.6h-9.6zM422.4 144h9.6v9.6h-9.6zM432 144h9.6v9.6h-9.6zM537.6 144h9.6v9.6h-9.6zM720 144h9.6v9.6h-9.6zM144 163.2h9.6v9.6h-9.6zM297.6 163.2h9.6v9.6h-9.6zM806.4 163.2h9.6v9.6h-9.6zM48 201.6h9.6v9.6h-9.6z"/><path fill="#cc90c6" d="M163.2 28.8h9.6v9.6h-9.6zM259.2 86.4h9.6v9.6h-9.6zM393.6 86.4h9.6v9.6h-9.6zM499.2 105.6h9.6v9.6h-9.6z"/><path fill="#c68ac0" d="M172.8 28.8h9.6v9.6h-9.6zM345.6 28.8h9.6v9.6h-9.6zM432 28.8h9.6v9.6h-9.6zM470.4 28.8h9.6v9.6h-9.6zM518.4 28.8h9.6v9.6h-9.6zM67.2 48h9.6v9.6h-9.6zM144 48h9.6v9.6h-9.6zM268.8 48h9.6v9.6h-9.6zM278.4 67.2h9.6v9.6h-9.6zM518.4 67.2h9.6v9.6h-9.6zM604.8 86.4h9.6v9.6h-9.6zM460.8 105.6h9.6v9.6h-9.6zM614.4 105.6h9.6v9.6h-9.6zM652.8 105.6h9.6v9.6h-9.6zM153.6 124.8h9.6v9.6h-9.6zM393.6 124.8h9.6v9.6h-9.6zM28.8 144h9.6v9.6h-9.6zM182.4 144h9.6v9.6h-9.6zM316.8 144h9.6v9.6h-9.6zM460.8 144h9.6v9.6h-9.6zM86.4 163.2h9.6v9.6h-9.6zM268.8 163.2h9.6v9.6h-9.6zM460.8 163.2h9.6v9.6h-9.6zM499.2 163.2h9.6v9.6h-9.6zM38.4 201.6h9.6v9.6h-9.6zM115.2 201.6h9.6v9.6h-9.6z"/><path fill="#d8a8d2" d="M182.4 28.8h9.6v9.6h-9.6zM201.6 28.8h9.6v9.6h-9.6zM384 28.8h9.6v9.6h-9.6zM691.2 28.8h9.6v9.6h-9.6zM172.8 48h9.6v9.6h-9.6zM614.4 48h9.6v9.6h-9.6zM134.4 67.2h9.6v9.6h-9.6zM201.6 67.2h9.6v9.6h-9.6zM681.6 67.2h9.6v9.6h-9.6zM201.6 124.8h9.6v9.6h-9.6zM432 124.8h9.6v9.6h-9.6zM403.2 144h9.6v9.6h-9.6zM451.2 144h9.6v9.6h-9.6zM211.2 163.2h9.6v9.6h-9.6z"/><path fill="#d2a2cc" d="M192 28.8h9.6v9.6h-9.6zM720 28.8h9.6v9.6h-9.6zM288 48h9.6v9.6h-9.6zM393.6 48h9.6v9.6h-9.6zM451.2 48h9.6v9.6h-9.6zM556.8 48h9.6v9.6h-9.6zM633.6 48h9.6v9.6h-9.6zM720 48h9.6v9.6h-9.6zM508.8 67.2h9.6v9.6h-9.6zM528 67.2h9.6v9.6h-9.6zM297.6 86.4h9.6v9.6h-9.6zM489.6 86.4h9.6v9.6h-9.6zM105.6 105.6h9.6v9.6h-9.6zM691.2 105.6h9.6v9.6h-9.6zM38.4 124.8h9.6v9.6h-9.6zM249.6 124.8h9.6v9.6h-9.6zM259.2 124.8h9.6v9.6h-9.6zM566.4 124.8h9.6v9.6h-9.6zM576 124.8h9.6v9.6h-9.6zM153.6 144h9.6v9.6h-9.6zM364.8 144h9.6v9.6h-9.6zM489.6 144h9.6v9.6h-9.6zM585.6 144h9.6v9.6h-9.6zM816 144h9.6v9.6h-9.6zM105.6 163.2h9.6v9.6h-9.6zM201.6 163.2h9.6v9.6h-9.6zM614.4 163.2h9.6v9.6h-9.6zM787.2 163.2h9.6v9.6h-9.6zM67.2 201.6h9.6v9.6h-9.6z"/><path fill="#c08ac0" d="M220.8 28.8h9.6v9.6h-9.6zM297.6 48h9.6v9.6h-9.6zM672 67.2h9.6v9.6h-9.6zM192 105.6h9.6v9.6h-9.6zM537.6 105.6h9.6v9.6h-9.6zM374.4 163.2h9.6v9.6h-9.6zM48 182.4h9.6v9.6h-9.6z"/><path fill="#d8b4d8" d="M230.4 28.8h9.6v9.6h-9.6zM268.8 28.8h9.6v9.6h-9.6zM326.4 28.8h9.6v9.6h-9.6zM441.6 28.8h9.6v9.6h-9.6zM451.2 28.8h9.6v9.6h-9.6zM489.6 28.8h9.6v9.6h-9.6zM508.8 28.8h9.6v9.6h-9.6zM652.8 28.8h9.6v9.6h-9.6zM672 28.8h9.6v9.6h-9.6zM57.6 48h9.6v9.6h-9.6zM153.6 48h9.6v9.6h-9.6zM278.4 48h9.6v9.6h-9.6zM336 48h9.6v9.6h-9.6zM528 48h9.6v9.6h-9.6zM672 48h9.6v9.6h-9.6zM76.8 67.2h9.6v9.6h-9.6zM115.2 67.2h9.6v9.6h-9.6zM326.4 67.2h9.6v9.6h-9.6zM432 67.2h9.6v9.6h-9.6zM28.8 86.4h9.6v9.6h-9.6zM96 86.4h9.6v9.6h-9.6zM556.8 86.4h9.6v9.6h-9.6zM691.2 86.4h9.6v9.6h-9.6zM748.8 86.4h9.6v9.6h-9.6zM86.4 105.6h9.6v9.6h-9.6zM182.4 105.6h9.6v9.6h-9.6zM595.2 105.6h9.6v9.6h-9.6zM604.8 105.6h9.6v9.6h-9.6zM720 105.6h9.6v9.6h-9.6zM105.6 124.8h9.6v9.6h-9.6zM182.4 124.8h9.6v9.6h-9.6zM316.8 124.8h9.6v9.6h-9.6zM739.2 124.8h9.6v9.6h-9.6zM201.6 144h9.6v9.6h-9.6zM288 144h9.6v9.6h-9.6zM547.2 144h9.6v9.6h-9.6zM662.4 144h9.6v9.6h-9.6zM777.6 144h9.6v9.6h-9.6zM124.8 163.2h9.6v9.6h-9.6zM278.4 163.2h9.6v9.6h-9.6zM403.2 163.2h9.6v9.6h-9.6zM412.8 163.2h9.6v9.6h-9.6zM556.8 163.2h9.6v9.6h-9.6zM604.8 163.2h9.6v9.6h-9.6zM681.6 163.2h9.6v9.6h-9.6zM182.4 201.6h9.6v9.6h-9.6zM278.4 201.6h9.6v9.6h-9.6zM345.6 201.6h9.6v9.6h-9.6z"/><path fill="#e4c6e4" d="M240 28.8h9.6v9.6h-9.6zM307.2 28.8h9.6v9.6h-9.6zM374.4 28.8h9.6v9.6h-9.6zM403.2 28.8h9.6v9.6h-9.6zM739.2 28.8h9.6v9.6h-9.6zM182.4 48h9.6v9.6h-9.6zM624 48h9.6v9.6h-9.6zM729.6 48h9.6v9.6h-9.6zM796.8 48h9.6v9.6h-9.6zM38.4 67.2h9.6v9.6h-9.6zM182.4 67.2h9.6v9.6h-9.6zM345.6 67.2h9.6v9.6h-9.6zM480 67.2h9.6v9.6h-9.6zM700.8 67.2h9.6v9.6h-9.6zM38.4 86.4h9.6v9.6h-9.6zM192 86.4h9.6v9.6h-9.6zM220.8 86.4h9.6v9.6h-9.6zM28.8 105.6h9.6v9.6h-9.6zM76.8 105.6h9.6v9.6h-9.6zM153.6 105.6h9.6v9.6h-9.6zM268.8 105.6h9.6v9.6h-9.6zM316.8 105.6h9.6v9.6h-9.6zM393.6 105.6h9.6v9.6h-9.6zM528 105.6h9.6v9.6h-9.6zM633.6 105.6h9.6v9.6h-9.6zM710.4 105.6h9.6v9.6h-9.6zM76.8 124.8h9.6v9.6h-9.6zM336 124.8h9.6v9.6h-9.6zM220.8 144h9.6v9.6h-9.6zM393.6 144h9.6v9.6h-9.6zM441.6 144h9.6v9.6h-9.6zM652.8 144h9.6v9.6h-9.6zM710.4 144h9.6v9.6h-9.6zM739.2 144h9.6v9.6h-9.6zM96 163.2h9.6v9.6h-9.6zM134.4 163.2h9.6v9.6h-9.6zM480 163.2h9.6v9.6h-9.6zM652.8 163.2h9.6v9.6h-9.6zM777.6 163.2h9.6v9.6h-9.6zM115.2 182.4h9.6v9.6h-9.6z"/><path fill="#cc96c6" d="M249.6 28.8h9.6v9.6h-9.6zM700.8 28.8h9.6v9.6h-9.6zM710.4 28.8h9.6v9.6h-9.6zM192 67.2h9.6v9.6h-9.6zM288 67.2h9.6v9.6h-9.6zM144 105.6h9.6v9.6h-9.6zM230.4 105.6h9.6v9.6h-9.6zM19.2 124.8h9.6v9.6h-9.6zM451.2 124.8h9.6v9.6h-9.6zM652.8 124.8h9.6v9.6h-9.6zM681.6 124.8h9.6v9.6h-9.6zM729.6 124.8h9.6v9.6h-9.6zM777.6 124.8h9.6v9.6h-9.6zM336 144h9.6v9.6h-9.6zM700.8 144h9.6v9.6h-9.6zM172.8 163.2h9.6v9.6h-9.6zM182.4 163.2h9.6v9.6h-9.6zM384 163.2h9.6v9.6h-9.6zM508.8 163.2h9.6v9.6h-9.6zM576 163.2h9.6v9.6h-9.6z"/><path fill="#cc96cc" d="M336 28.8h9.6v9.6h-9.6zM393.6 28.8h9.6v9.6h-9.6zM412.8 28.8h9.6v9.6h-9.6zM787.2 28.8h9.6v9.6h-9.6zM240 67.2h9.6v9.6h-9.6zM403.2 67.2h9.6v9.6h-9.6zM576 67.2h9.6v9.6h-9.6zM240 86.4h9.6v9.6h-9.6zM614.4 124.8h9.6v9.6h-9.6zM307.2 144h9.6v9.6h-9.6zM729.6 144h9.6v9.6h-9.6zM595.2 163.2h9.6v9.6h-9.6zM643.2 163.2h9.6v9.6h-9.6zM38.4 182.4h9.6v9.6h-9.6z"/><path fill="#dec0de" d="M480 28.8h9.6v9.6h-9.6zM806.4 28.8h9.6v9.6h-9.6zM259.2 48h9.6v9.6h-9.6zM595.2 48h9.6v9.6h-9.6zM643.2 48h9.6v9.6h-9.6zM662.4 67.2h9.6v9.6h-9.6zM76.8 86.4h9.6v9.6h-9.6zM163.2 86.4h9.6v9.6h-9.6zM441.6 86.4h9.6v9.6h-9.6zM633.6 86.4h9.6v9.6h-9.6zM720 86.4h9.6v9.6h-9.6zM134.4 105.6h9.6v9.6h-9.6zM249.6 105.6h9.6v9.6h-9.6zM288 105.6h9.6v9.6h-9.6zM480 105.6h9.6v9.6h-9.6zM124.8 124.8h9.6v9.6h-9.6zM307.2 124.8h9.6v9.6h-9.6zM355.2 124.8h9.6v9.6h-9.6zM585.6 124.8h9.6v9.6h-9.6zM76.8 144h9.6v9.6h-9.6zM326.4 144h9.6v9.6h-9.6zM518.4 144h9.6v9.6h-9.6zM566.4 201.6h9.6v9.6h-9.6z"/><path fill="#eacce4" d="M566.4 28.8h9.6v9.6h-9.6zM595.2 28.8h9.6v9.6h-9.6zM124.8 48h9.6v9.6h-9.6zM19.2 67.2h9.6v9.6h-9.6zM28.8 67.2h9.6v9.6h-9.6zM566.4 67.2h9.6v9.6h-9.6zM796.8 67.2h9.6v9.6h-9.6zM268.8 86.4h9.6v9.6h-9.6zM278.4 86.4h9.6v9.6h-9.6zM364.8 86.4h9.6v9.6h-9.6zM508.8 86.4h9.6v9.6h-9.6zM700.8 86.4h9.6v9.6h-9.6zM816 86.4h9.6v9.6h-9.6zM297.6 105.6h9.6v9.6h-9.6zM432 105.6h9.6v9.6h-9.6zM547.2 105.6h9.6v9.6h-9.6zM403.2 124.8h9.6v9.6h-9.6zM124.8 144h9.6v9.6h-9.6zM38.4 163.2h9.6v9.6h-9.6zM710.4 163.2h9.6v9.6h-9.6zM768 163.2h9.6v9.6h-9.6zM28.8 182.4h9.6v9.6h-9.6z"/><path fill="#f0eaf0" d="M777.6 28.8h9.6v9.6h-9.6zM192 48h9.6v9.6h-9.6zM144 86.4h9.6v9.6h-9.6z"/><path fill="#d2d2d2" d="M9.6 38.4h9.6v9.6h-9.6z"/><path fill="#e4ccde" d="M182.4 38.4h9.6v9.6h-9.6zM604.8 57.6h9.6v9.6h-9.6zM144 76.8h9.6v9.6h-9.6zM288 76.8h9.6v9.6h-9.6zM115.2 96h9.6v9.6h-9.6zM240 115.2h9.6v9.6h-9.6zM48 172.8h9.6v9.6h-9.6z"/><path fill="#c084c0" d="M76.8 48h9.6v9.6h-9.6zM240 48h9.6v9.6h-9.6zM384 48h9.6v9.6h-9.6zM777.6 67.2h9.6v9.6h-9.6zM412.8 124.8h9.6v9.6h-9.6zM38.4 144h9.6v9.6h-9.6zM336 163.2h9.6v9.6h-9.6z"/><path fill="#debade" d="M345.6 48h9.6v9.6h-9.6zM355.2 48h9.6v9.6h-9.6zM364.8 67.2h9.6v9.6h-9.6zM393.6 67.2h9.6v9.6h-9.6zM528 86.4h9.6v9.6h-9.6zM28.8 124.8h9.6v9.6h-9.6zM672 124.8h9.6v9.6h-9.6z"/><path fill="#dedede" d="M9.6 67.2h9.6v9.6h-9.6zM0 134.4h9.6v9.6h-9.6zM0 201.6h9.6v9.6h-9.6z"/><path fill="#deb4d8" d="M624 67.2h9.6v9.6h-9.6zM720 67.2h9.6v9.6h-9.6zM585.6 86.4h9.6v9.6h-9.6zM460.8 124.8h9.6v9.6h-9.6zM249.6 144h9.6v9.6h-9.6zM19.2 182.4h9.6v9.6h-9.6z"/><path fill="#eadeea" d="M124.8 86.4h9.6v9.6h-9.6zM518.4 86.4h9.6v9.6h-9.6zM96 124.8h9.6v9.6h-9.6zM144 124.8h9.6v9.6h-9.6zM643.2 124.8h9.6v9.6h-9.6zM604.8 144h9.6v9.6h-9.6z"/><path fill="#d2cccc" d="M9.6 124.8h9.6v9.6h-9.6zM9.6 153.6h9.6v9.6h-9.6zM0 163.2h9.6v9.6h-9.6zM9.6 172.8h9.6v9.6h-9.6zM249.6 182.4h9.6v9.6h-9.6zM556.8 182.4h9.6v9.6h-9.6zM566.4 182.4h9.6v9.6h-9.6zM576 182.4h9.6v9.6h-9.6zM816 182.4h9.6v9.6h-9.6zM528 201.6h9.6v9.6h-9.6zM9.6 211.2h9.6v9.6h-9.6z"/><path fill="#e4ded8" d="M134.4 172.8h9.6v9.6h-9.6zM211.2 172.8h9.6v9.6h-9.6zM230.4 172.8h9.6v9.6h-9.6zM240 172.8h9.6v9.6h-9.6zM355.2 172.8h9.6v9.6h-9.6zM460.8 172.8h9.6v9.6h-9.6zM489.6 172.8h9.6v9.6h-9.6zM537.6 172.8h9.6v9.6h-9.6zM662.4 172.8h9.6v9.6h-9.6zM739.2 172.8h9.6v9.6h-9.6zM134.4 192h9.6v9.6h-9.6zM163.2 192h9.6v9.6h-9.6zM278.4 192h9.6v9.6h-9.6zM403.2 192h9.6v9.6h-9.6zM508.8 192h9.6v9.6h-9.6zM518.4 192h9.6v9.6h-9.6zM614.4 192h9.6v9.6h-9.6zM624 192h9.6v9.6h-9.6zM729.6 192h9.6v9.6h-9.6zM192 211.2h9.6v9.6h-9.6zM230.4 211.2h9.6v9.6h-9.6zM374.4 211.2h9.6v9.6h-9.6zM393.6 211.2h9.6v9.6h-9.6zM432 211.2h9.6v9.6h-9.6zM480 211.2h9.6v9.6h-9.6zM547.2 211.2h9.6v9.6h-9.6zM672 211.2h9.6v9.6h-9.6zM681.6 211.2h9.6v9.6h-9.6z"/><path fill="#eae4de" d="M153.6 172.8h9.6v9.6h-9.6zM249.6 172.8h9.6v9.6h-9.6zM364.8 172.8h9.6v9.6h-9.6zM412.8 172.8h9.6v9.6h-9.6zM441.6 172.8h9.6v9.6h-9.6zM700.8 172.8h9.6v9.6h-9.6zM720 172.8h9.6v9.6h-9.6zM729.6 172.8h9.6v9.6h-9.6zM796.8 172.8h9.6v9.6h-9.6zM816 172.8h9.6v9.6h-9.6zM182.4 192h9.6v9.6h-9.6zM192 192h9.6v9.6h-9.6zM249.6 192h9.6v9.6h-9.6zM489.6 192h9.6v9.6h-9.6zM528 192h9.6v9.6h-9.6zM537.6 192h9.6v9.6h-9.6zM633.6 192h9.6v9.6h-9.6zM681.6 192h9.6v9.6h-9.6zM748.8 192h9.6v9.6h-9.6zM403.2 211.2h9.6v9.6h-9.6zM499.2 211.2h9.6v9.6h-9.6zM662.4 211.2h9.6v9.6h-9.6zM806.4 211.2h9.6v9.6h-9.6z"/><path fill="#ded8d2" d="M192 172.8h9.6v9.6h-9.6zM201.6 172.8h9.6v9.6h-9.6zM268.8 172.8h9.6v9.6h-9.6zM393.6 172.8h9.6v9.6h-9.6zM422.4 172.8h9.6v9.6h-9.6zM614.4 172.8h9.6v9.6h-9.6zM681.6 172.8h9.6v9.6h-9.6zM787.2 172.8h9.6v9.6h-9.6zM806.4 172.8h9.6v9.6h-9.6zM211.2 192h9.6v9.6h-9.6zM259.2 192h9.6v9.6h-9.6zM652.8 192h9.6v9.6h-9.6zM672 192h9.6v9.6h-9.6zM700.8 192h9.6v9.6h-9.6zM710.4 192h9.6v9.6h-9.6zM777.6 192h9.6v9.6h-9.6zM201.6 211.2h9.6v9.6h-9.6zM240 211.2h9.6v9.6h-9.6zM297.6 211.2h9.6v9.6h-9.6zM316.8 211.2h9.6v9.6h-9.6zM345.6 211.2h9.6v9.6h-9.6zM451.2 211.2h9.6v9.6h-9.6zM585.6 211.2h9.6v9.6h-9.6zM816 211.2h9.6v9.6h-9.6z"/><path fill="#f0e4e4" d="M384 172.8h9.6v9.6h-9.6zM508.8 172.8h9.6v9.6h-9.6zM652.8 172.8h9.6v9.6h-9.6zM748.8 172.8h9.6v9.6h-9.6zM422.4 192h9.6v9.6h-9.6zM460.8 192h9.6v9.6h-9.6zM576 192h9.6v9.6h-9.6zM595.2 192h9.6v9.6h-9.6zM268.8 211.2h9.6v9.6h-9.6z"/><path fill="#e4d8d8" d="M480 172.8h9.6v9.6h-9.6zM777.6 172.8h9.6v9.6h-9.6zM556.8 192h9.6v9.6h-9.6zM585.6 192h9.6v9.6h-9.6zM710.4 211.2h9.6v9.6h-9.6z"/><path fill="#cca2cc" d="M134.4 182.4h9.6v9.6h-9.6zM748.8 182.4h9.6v9.6h-9.6zM240 201.6h9.6v9.6h-9.6zM518.4 201.6h9.6v9.6h-9.6zM710.4 201.6h9.6v9.6h-9.6zM720 201.6h9.6v9.6h-9.6zM777.6 201.6h9.6v9.6h-9.6z"/><path fill="#a89c9c" d="M144 182.4h9.6v9.6h-9.6zM163.2 182.4h9.6v9.6h-9.6zM787.2 201.6h9.6v9.6h-9.6z"/><path fill="#d8d2cc" d="M153.6 182.4h9.6v9.6h-9.6zM211.2 182.4h9.6v9.6h-9.6zM307.2 182.4h9.6v9.6h-9.6zM393.6 182.4h9.6v9.6h-9.6zM499.2 182.4h9.6v9.6h-9.6zM672 182.4h9.6v9.6h-9.6zM768 182.4h9.6v9.6h-9.6zM249.6 201.6h9.6v9.6h-9.6zM268.8 201.6h9.6v9.6h-9.6zM364.8 201.6h9.6v9.6h-9.6zM460.8 201.6h9.6v9.6h-9.6zM556.8 201.6h9.6v9.6h-9.6zM633.6 201.6h9.6v9.6h-9.6zM691.2 201.6h9.6v9.6h-9.6z"/><path fill="#c696c6" d="M172.8 182.4h9.6v9.6h-9.6zM326.4 201.6h9.6v9.6h-9.6z"/><path fill="#bab4ae" d="M182.4 182.4h9.6v9.6h-9.6zM412.8 182.4h9.6v9.6h-9.6zM604.8 182.4h9.6v9.6h-9.6zM259.2 201.6h9.6v9.6h-9.6z"/><path fill="#aea29c" d="M192 182.4h9.6v9.6h-9.6zM268.8 182.4h9.6v9.6h-9.6zM787.2 182.4h9.6v9.6h-9.6zM480 201.6h9.6v9.6h-9.6zM604.8 201.6h9.6v9.6h-9.6z"/><path fill="#d2ccc6" d="M201.6 182.4h9.6v9.6h-9.6zM336 182.4h9.6v9.6h-9.6zM537.6 182.4h9.6v9.6h-9.6zM595.2 182.4h9.6v9.6h-9.6zM652.8 182.4h9.6v9.6h-9.6zM691.2 182.4h9.6v9.6h-9.6zM374.4 201.6h9.6v9.6h-9.6zM412.8 201.6h9.6v9.6h-9.6zM451.2 201.6h9.6v9.6h-9.6zM508.8 201.6h9.6v9.6h-9.6zM806.4 201.6h9.6v9.6h-9.6zM816 201.6h9.6v9.6h-9.6z"/><path fill="#c6baba" d="M220.8 182.4h9.6v9.6h-9.6zM240 182.4h9.6v9.6h-9.6zM624 182.4h9.6v9.6h-9.6zM134.4 201.6h9.6v9.6h-9.6zM499.2 201.6h9.6v9.6h-9.6z"/><path fill="#d8b4d2" d="M230.4 182.4h9.6v9.6h-9.6zM441.6 182.4h9.6v9.6h-9.6zM518.4 182.4h9.6v9.6h-9.6zM576 201.6h9.6v9.6h-9.6z"/><path fill="#d8cccc" d="M259.2 182.4h9.6v9.6h-9.6zM278.4 182.4h9.6v9.6h-9.6zM710.4 182.4h9.6v9.6h-9.6zM739.2 182.4h9.6v9.6h-9.6zM172.8 201.6h9.6v9.6h-9.6zM547.2 201.6h9.6v9.6h-9.6zM748.8 201.6h9.6v9.6h-9.6z"/><path fill="#ccc6c0" d="M297.6 182.4h9.6v9.6h-9.6zM345.6 182.4h9.6v9.6h-9.6zM432 182.4h9.6v9.6h-9.6zM508.8 182.4h9.6v9.6h-9.6zM585.6 182.4h9.6v9.6h-9.6zM163.2 201.6h9.6v9.6h-9.6zM220.8 201.6h9.6v9.6h-9.6zM595.2 201.6h9.6v9.6h-9.6z"/><path fill="#dec0d8" d="M316.8 182.4h9.6v9.6h-9.6zM480 182.4h9.6v9.6h-9.6z"/><path fill="#ccc0c0" d="M326.4 182.4h9.6v9.6h-9.6zM364.8 182.4h9.6v9.6h-9.6zM720 182.4h9.6v9.6h-9.6zM777.6 182.4h9.6v9.6h-9.6zM403.2 201.6h9.6v9.6h-9.6zM681.6 201.6h9.6v9.6h-9.6z"/><path fill="#d2c6c6" d="M355.2 182.4h9.6v9.6h-9.6z"/><path fill="#cca8cc" d="M374.4 182.4h9.6v9.6h-9.6zM355.2 201.6h9.6v9.6h-9.6z"/><path fill="#c69cc6" d="M384 182.4h9.6v9.6h-9.6zM633.6 182.4h9.6v9.6h-9.6zM758.4 182.4h9.6v9.6h-9.6zM432 201.6h9.6v9.6h-9.6zM614.4 201.6h9.6v9.6h-9.6zM624 201.6h9.6v9.6h-9.6z"/><path fill="#c0b4b4" d="M403.2 182.4h9.6v9.6h-9.6zM460.8 182.4h9.6v9.6h-9.6zM211.2 201.6h9.6v9.6h-9.6zM422.4 201.6h9.6v9.6h-9.6zM652.8 201.6h9.6v9.6h-9.6z"/><path fill="#ccc6c6" d="M422.4 182.4h9.6v9.6h-9.6zM537.6 201.6h9.6v9.6h-9.6zM672 201.6h9.6v9.6h-9.6zM796.8 201.6h9.6v9.6h-9.6z"/><path fill="#d2aed2" d="M451.2 182.4h9.6v9.6h-9.6zM489.6 182.4h9.6v9.6h-9.6zM662.4 182.4h9.6v9.6h-9.6z"/><path fill="#c0bab4" d="M470.4 182.4h9.6v9.6h-9.6zM201.6 201.6h9.6v9.6h-9.6zM441.6 201.6h9.6v9.6h-9.6z"/><path fill="#b4a8a8" d="M528 182.4h9.6v9.6h-9.6zM192 201.6h9.6v9.6h-9.6zM470.4 201.6h9.6v9.6h-9.6zM739.2 201.6h9.6v9.6h-9.6z"/><path fill="#baaeae" d="M547.2 182.4h9.6v9.6h-9.6z"/><path fill="#cc9cc6" d="M614.4 182.4h9.6v9.6h-9.6zM643.2 182.4h9.6v9.6h-9.6zM729.6 182.4h9.6v9.6h-9.6zM153.6 201.6h9.6v9.6h-9.6zM585.6 201.6h9.6v9.6h-9.6z"/><path fill="#c6c0c0" d="M681.6 182.4h9.6v9.6h-9.6z"/><path fill="#c0b4ae" d="M700.8 182.4h9.6v9.6h-9.6zM297.6 201.6h9.6v9.6h-9.6z"/><path fill="#b4aea8" d="M806.4 182.4h9.6v9.6h-9.6zM288 201.6h9.6v9.6h-9.6z"/><path fill="#c090c0" d="M230.4 201.6h9.6v9.6h-9.6z"/><path fill="#d8bad8" d="M307.2 201.6h9.6v9.6h-9.6zM700.8 201.6h9.6v9.6h-9.6z"/><path fill="#b4a8a2" d="M393.6 201.6h9.6v9.6h-9.6zM489.6 201.6h9.6v9.6h-9.6zM729.6 201.6h9.6v9.6h-9.6z"/><path fill="#d2a8cc" d="M758.4 201.6h9.6v9.6h-9.6z"/><path fill="#c6c0ba" d="M768 201.6h9.6v9.6h-9.6z"/></g></svg>
<svg class="ic" shape-rendering="crispEdges" style="left:296px;top:1264.6px" width="115.2" height="19.2" viewBox="0 0 115.2 19.2"><path fill="#eaeade" d="M0 0h9.6v9.6h-9.6zM19.2 9.6h9.6v9.6h-9.6zM28.8 9.6h9.6v9.6h-9.6z"/><path fill="#e4eade" d="M9.6 0h9.6v9.6h-9.6zM19.2 0h9.6v9.6h-9.6zM38.4 0h9.6v9.6h-9.6zM86.4 0h9.6v9.6h-9.6zM96 9.6h9.6v9.6h-9.6z"/><path fill="#dee4d8" d="M28.8 0h9.6v9.6h-9.6zM76.8 0h9.6v9.6h-9.6z"/><path fill="#e4e4d8" d="M48 0h9.6v9.6h-9.6z"/><path fill="#f6f0ea" d="M57.6 0h9.6v9.6h-9.6zM38.4 9.6h9.6v9.6h-9.6zM105.6 9.6h9.6v9.6h-9.6z"/><path fill="#eaeae4" d="M67.2 0h9.6v9.6h-9.6zM0 9.6h9.6v9.6h-9.6z"/><path fill="#f0f0e4" d="M9.6 9.6h9.6v9.6h-9.6zM48 9.6h9.6v9.6h-9.6zM86.4 9.6h9.6v9.6h-9.6z"/><path fill="#deb4d8" d="M57.6 9.6h9.6v9.6h-9.6z"/><path fill="#cc90c6" d="M67.2 9.6h9.6v9.6h-9.6z"/><path fill="#cc9ccc" d="M76.8 9.6h9.6v9.6h-9.6z"/></svg>
<svg class="ic" shape-rendering="crispEdges" style="left:1449.5px;top:273.4px" width="528.5" height="29" viewBox="0 0 528.5 29"><clipPath id="mz3"><polygon points="2.5,9.6 53.5,8.6 60.5,2.6 120.5,2.6 128.5,8.6 240.5,8.6 250.5,2.6 376.5,2.6 388.5,9.6 526.5,9.6 527.5,29 3.5,29"/></clipPath><g clip-path="url(#mz3)"><path fill="#f6f0e4" d="M57.6 0h9.6v9.6h-9.6zM240 0h9.6v9.6h-9.6z"/><path fill="#e4decc" d="M67.2 0h9.6v9.6h-9.6zM115.2 0h9.6v9.6h-9.6z"/><path fill="#f0ead8" d="M76.8 0h9.6v9.6h-9.6z"/><path fill="#f0eade" d="M86.4 0h9.6v9.6h-9.6zM374.4 0h9.6v9.6h-9.6z"/><path fill="#f0e4d8" d="M105.6 0h9.6v9.6h-9.6zM259.2 0h9.6v9.6h-9.6zM307.2 0h9.6v9.6h-9.6zM326.4 0h9.6v9.6h-9.6z"/><path fill="#eadecc" d="M268.8 0h9.6v9.6h-9.6zM288 0h9.6v9.6h-9.6zM316.8 0h9.6v9.6h-9.6z"/><path fill="#f6eade" d="M355.2 0h9.6v9.6h-9.6zM364.8 0h9.6v9.6h-9.6z"/><path fill="#d8a87e" d="M0 9.6h9.6v9.6h-9.6zM57.6 9.6h9.6v9.6h-9.6zM96 9.6h9.6v9.6h-9.6z"/><path fill="#d89c6c" d="M9.6 9.6h9.6v9.6h-9.6zM105.6 9.6h9.6v9.6h-9.6zM240 9.6h9.6v9.6h-9.6zM259.2 9.6h9.6v9.6h-9.6zM518.4 9.6h9.6v9.6h-9.6z"/><path fill="#d8a278" d="M19.2 9.6h9.6v9.6h-9.6zM384 9.6h9.6v9.6h-9.6z"/><path fill="#d8b496" d="M28.8 9.6h9.6v9.6h-9.6zM67.2 9.6h9.6v9.6h-9.6zM192 9.6h9.6v9.6h-9.6zM288 9.6h9.6v9.6h-9.6zM326.4 9.6h9.6v9.6h-9.6zM432 9.6h9.6v9.6h-9.6zM451.2 9.6h9.6v9.6h-9.6z"/><path fill="#d8ae8a" d="M38.4 9.6h9.6v9.6h-9.6zM211.2 9.6h9.6v9.6h-9.6zM489.6 9.6h9.6v9.6h-9.6z"/><path fill="#d8c0a8" d="M48 9.6h9.6v9.6h-9.6zM76.8 9.6h9.6v9.6h-9.6zM153.6 9.6h9.6v9.6h-9.6zM220.8 9.6h9.6v9.6h-9.6zM268.8 9.6h9.6v9.6h-9.6zM307.2 9.6h9.6v9.6h-9.6zM364.8 9.6h9.6v9.6h-9.6zM499.2 9.6h9.6v9.6h-9.6zM508.8 9.6h9.6v9.6h-9.6z"/><path fill="#d8c0ae" d="M86.4 9.6h9.6v9.6h-9.6zM115.2 9.6h9.6v9.6h-9.6zM144 9.6h9.6v9.6h-9.6zM182.4 9.6h9.6v9.6h-9.6zM201.6 9.6h9.6v9.6h-9.6zM278.4 9.6h9.6v9.6h-9.6zM297.6 9.6h9.6v9.6h-9.6zM336 9.6h9.6v9.6h-9.6zM345.6 9.6h9.6v9.6h-9.6z"/><path fill="#d8a884" d="M124.8 9.6h9.6v9.6h-9.6z"/><path fill="#d8baa2" d="M134.4 9.6h9.6v9.6h-9.6zM316.8 9.6h9.6v9.6h-9.6zM403.2 9.6h9.6v9.6h-9.6zM480 9.6h9.6v9.6h-9.6z"/><path fill="#d8ae84" d="M163.2 9.6h9.6v9.6h-9.6z"/><path fill="#d8a878" d="M172.8 9.6h9.6v9.6h-9.6zM230.4 9.6h9.6v9.6h-9.6zM355.2 9.6h9.6v9.6h-9.6z"/><path fill="#d8ba9c" d="M249.6 9.6h9.6v9.6h-9.6zM412.8 9.6h9.6v9.6h-9.6zM470.4 9.6h9.6v9.6h-9.6zM528 9.6h9.6v9.6h-9.6z"/><path fill="#d89c72" d="M374.4 9.6h9.6v9.6h-9.6z"/><path fill="#d8c0a2" d="M393.6 9.6h9.6v9.6h-9.6z"/><path fill="#d8b490" d="M422.4 9.6h9.6v9.6h-9.6z"/><path fill="#d8b49c" d="M441.6 9.6h9.6v9.6h-9.6z"/><path fill="#d8a272" d="M460.8 9.6h9.6v9.6h-9.6z"/><path fill="#ccbaa2" d="M0 19.2h9.6v9.6h-9.6zM288 19.2h9.6v9.6h-9.6z"/><path fill="#ccc0b4" d="M9.6 19.2h9.6v9.6h-9.6zM38.4 19.2h9.6v9.6h-9.6zM67.2 19.2h9.6v9.6h-9.6zM134.4 19.2h9.6v9.6h-9.6zM144 19.2h9.6v9.6h-9.6zM278.4 19.2h9.6v9.6h-9.6zM374.4 19.2h9.6v9.6h-9.6zM432 19.2h9.6v9.6h-9.6zM489.6 19.2h9.6v9.6h-9.6zM57.6 28.8h9.6v9.6h-9.6zM144 28.8h9.6v9.6h-9.6zM153.6 28.8h9.6v9.6h-9.6zM297.6 28.8h9.6v9.6h-9.6zM336 28.8h9.6v9.6h-9.6zM403.2 28.8h9.6v9.6h-9.6zM422.4 28.8h9.6v9.6h-9.6z"/><path fill="#ccbaa8" d="M19.2 19.2h9.6v9.6h-9.6zM86.4 19.2h9.6v9.6h-9.6zM182.4 19.2h9.6v9.6h-9.6zM259.2 19.2h9.6v9.6h-9.6zM355.2 19.2h9.6v9.6h-9.6zM412.8 19.2h9.6v9.6h-9.6zM470.4 19.2h9.6v9.6h-9.6zM499.2 19.2h9.6v9.6h-9.6zM105.6 28.8h9.6v9.6h-9.6zM115.2 28.8h9.6v9.6h-9.6zM124.8 28.8h9.6v9.6h-9.6zM192 28.8h9.6v9.6h-9.6zM259.2 28.8h9.6v9.6h-9.6zM451.2 28.8h9.6v9.6h-9.6zM460.8 28.8h9.6v9.6h-9.6zM518.4 28.8h9.6v9.6h-9.6z"/><path fill="#ccb4a2" d="M28.8 19.2h9.6v9.6h-9.6zM48 19.2h9.6v9.6h-9.6zM57.6 19.2h9.6v9.6h-9.6zM76.8 19.2h9.6v9.6h-9.6zM192 19.2h9.6v9.6h-9.6zM240 19.2h9.6v9.6h-9.6zM307.2 28.8h9.6v9.6h-9.6zM393.6 28.8h9.6v9.6h-9.6zM480 28.8h9.6v9.6h-9.6z"/><path fill="#ccb49c" d="M96 19.2h9.6v9.6h-9.6zM115.2 19.2h9.6v9.6h-9.6zM153.6 19.2h9.6v9.6h-9.6zM364.8 19.2h9.6v9.6h-9.6zM451.2 19.2h9.6v9.6h-9.6zM28.8 28.8h9.6v9.6h-9.6zM249.6 28.8h9.6v9.6h-9.6zM355.2 28.8h9.6v9.6h-9.6zM441.6 28.8h9.6v9.6h-9.6z"/><path fill="#ccbaae" d="M105.6 19.2h9.6v9.6h-9.6zM211.2 19.2h9.6v9.6h-9.6zM230.4 19.2h9.6v9.6h-9.6zM393.6 19.2h9.6v9.6h-9.6zM441.6 19.2h9.6v9.6h-9.6zM48 28.8h9.6v9.6h-9.6zM96 28.8h9.6v9.6h-9.6zM278.4 28.8h9.6v9.6h-9.6zM489.6 28.8h9.6v9.6h-9.6z"/><path fill="#d2b49c" d="M124.8 19.2h9.6v9.6h-9.6zM297.6 19.2h9.6v9.6h-9.6z"/><path fill="#d2a884" d="M163.2 19.2h9.6v9.6h-9.6zM182.4 28.8h9.6v9.6h-9.6z"/><path fill="#ccc0ae" d="M172.8 19.2h9.6v9.6h-9.6zM201.6 19.2h9.6v9.6h-9.6zM220.8 19.2h9.6v9.6h-9.6zM249.6 19.2h9.6v9.6h-9.6zM307.2 19.2h9.6v9.6h-9.6zM316.8 19.2h9.6v9.6h-9.6zM336 19.2h9.6v9.6h-9.6zM345.6 19.2h9.6v9.6h-9.6zM384 19.2h9.6v9.6h-9.6zM480 19.2h9.6v9.6h-9.6zM508.8 19.2h9.6v9.6h-9.6zM0 28.8h9.6v9.6h-9.6zM9.6 28.8h9.6v9.6h-9.6zM67.2 28.8h9.6v9.6h-9.6zM86.4 28.8h9.6v9.6h-9.6zM220.8 28.8h9.6v9.6h-9.6zM268.8 28.8h9.6v9.6h-9.6zM288 28.8h9.6v9.6h-9.6zM316.8 28.8h9.6v9.6h-9.6zM432 28.8h9.6v9.6h-9.6zM499.2 28.8h9.6v9.6h-9.6z"/><path fill="#d2b496" d="M268.8 19.2h9.6v9.6h-9.6zM76.8 28.8h9.6v9.6h-9.6zM230.4 28.8h9.6v9.6h-9.6zM412.8 28.8h9.6v9.6h-9.6zM528 28.8h9.6v9.6h-9.6z"/><path fill="#d2ae96" d="M326.4 19.2h9.6v9.6h-9.6zM518.4 19.2h9.6v9.6h-9.6zM19.2 28.8h9.6v9.6h-9.6zM38.4 28.8h9.6v9.6h-9.6zM326.4 28.8h9.6v9.6h-9.6z"/><path fill="#d2ae90" d="M403.2 19.2h9.6v9.6h-9.6zM422.4 19.2h9.6v9.6h-9.6zM460.8 19.2h9.6v9.6h-9.6zM528 19.2h9.6v9.6h-9.6zM172.8 28.8h9.6v9.6h-9.6zM240 28.8h9.6v9.6h-9.6zM374.4 28.8h9.6v9.6h-9.6zM384 28.8h9.6v9.6h-9.6zM508.8 28.8h9.6v9.6h-9.6z"/><path fill="#d2ae8a" d="M134.4 28.8h9.6v9.6h-9.6zM345.6 28.8h9.6v9.6h-9.6z"/><path fill="#d2a88a" d="M163.2 28.8h9.6v9.6h-9.6zM201.6 28.8h9.6v9.6h-9.6zM211.2 28.8h9.6v9.6h-9.6zM364.8 28.8h9.6v9.6h-9.6zM470.4 28.8h9.6v9.6h-9.6z"/></g></svg>
<div class="b" style="left:447.00px;top:823.00px;width:1651.00px;height:23.60px;background:#cbc8c8;"></div>
<div class="b" style="left:1821.00px;top:816.70px;width:277.00px;height:8.00px;background:#c9c8cd;"></div>
<div class="b" style="left:447px;top:834.3px;width:1651px;height:8.6px;overflow:hidden">
<svg class="ic" shape-rendering="crispEdges" style="left:0px;top:0px" width="1651" height="8.6" viewBox="0 0 1651 8.6"><path fill="#b8bcb0" d="M0 0h8.6v8.6h-8.6zM111.8 0h8.6v8.6h-8.6zM765.4 0h8.6v8.6h-8.6zM825.6 0h8.6v8.6h-8.6zM842.8 0h8.6v8.6h-8.6zM1221.2 0h8.6v8.6h-8.6zM1393.2 0h8.6v8.6h-8.6zM1591 0h8.6v8.6h-8.6z"/><path fill="#d0c8b8" d="M8.6 0h8.6v8.6h-8.6zM94.6 0h8.6v8.6h-8.6zM189.2 0h8.6v8.6h-8.6zM326.8 0h8.6v8.6h-8.6zM696.6 0h8.6v8.6h-8.6zM989 0h8.6v8.6h-8.6zM1006.2 0h8.6v8.6h-8.6zM1126.6 0h8.6v8.6h-8.6zM1247 0h8.6v8.6h-8.6zM1410.4 0h8.6v8.6h-8.6z"/><path fill="#ccb094" d="M17.2 0h8.6v8.6h-8.6zM146.2 0h8.6v8.6h-8.6zM369.8 0h8.6v8.6h-8.6zM387 0h8.6v8.6h-8.6zM645 0h8.6v8.6h-8.6zM1161 0h8.6v8.6h-8.6zM1178.2 0h8.6v8.6h-8.6z"/><path fill="#d8d0c8" d="M25.8 0h8.6v8.6h-8.6zM301 0h8.6v8.6h-8.6zM309.6 0h8.6v8.6h-8.6zM748.2 0h8.6v8.6h-8.6zM997.6 0h8.6v8.6h-8.6zM1255.6 0h8.6v8.6h-8.6zM1290 0h8.6v8.6h-8.6zM1479.2 0h8.6v8.6h-8.6z"/><path fill="#d8b09a" d="M34.4 0h8.6v8.6h-8.6zM344 0h8.6v8.6h-8.6zM421.4 0h8.6v8.6h-8.6zM447.2 0h8.6v8.6h-8.6zM799.8 0h8.6v8.6h-8.6zM894.4 0h8.6v8.6h-8.6zM1100.8 0h8.6v8.6h-8.6zM1376 0h8.6v8.6h-8.6zM1462 0h8.6v8.6h-8.6z"/><path fill="#f4f0ec" d="M43 0h8.6v8.6h-8.6zM154.8 0h8.6v8.6h-8.6zM1324.4 0h8.6v8.6h-8.6zM1444.8 0h8.6v8.6h-8.6zM1496.4 0h8.6v8.6h-8.6z"/><path fill="#ece4d8" d="M51.6 0h8.6v8.6h-8.6zM163.4 0h8.6v8.6h-8.6zM361.2 0h8.6v8.6h-8.6zM404.2 0h8.6v8.6h-8.6zM473 0h8.6v8.6h-8.6zM1513.6 0h8.6v8.6h-8.6z"/><path fill="#a4a4b0" d="M60.2 0h8.6v8.6h-8.6zM206.4 0h8.6v8.6h-8.6zM249.4 0h8.6v8.6h-8.6zM430 0h8.6v8.6h-8.6zM455.8 0h8.6v8.6h-8.6zM507.4 0h8.6v8.6h-8.6zM731 0h8.6v8.6h-8.6zM860 0h8.6v8.6h-8.6zM877.2 0h8.6v8.6h-8.6zM1186.8 0h8.6v8.6h-8.6zM1307.2 0h8.6v8.6h-8.6zM1350.2 0h8.6v8.6h-8.6zM1573.8 0h8.6v8.6h-8.6z"/><path fill="#c4b0a0" d="M68.8 0h8.6v8.6h-8.6zM438.6 0h8.6v8.6h-8.6zM593.4 0h8.6v8.6h-8.6zM1169.6 0h8.6v8.6h-8.6zM1195.4 0h8.6v8.6h-8.6zM1401.8 0h8.6v8.6h-8.6zM1487.8 0h8.6v8.6h-8.6zM1505 0h8.6v8.6h-8.6zM1539.4 0h8.6v8.6h-8.6z"/><path fill="#b0a8a0" d="M77.4 0h8.6v8.6h-8.6zM498.8 0h8.6v8.6h-8.6zM533.2 0h8.6v8.6h-8.6zM679.4 0h8.6v8.6h-8.6zM868.6 0h8.6v8.6h-8.6zM1135.2 0h8.6v8.6h-8.6zM1341.6 0h8.6v8.6h-8.6zM1530.8 0h8.6v8.6h-8.6z"/><path fill="#dce0dc" d="M86 0h8.6v8.6h-8.6zM318.2 0h8.6v8.6h-8.6zM550.4 0h8.6v8.6h-8.6zM688 0h8.6v8.6h-8.6zM1049.2 0h8.6v8.6h-8.6zM1109.4 0h8.6v8.6h-8.6zM1212.6 0h8.6v8.6h-8.6zM1315.8 0h8.6v8.6h-8.6zM1522.2 0h8.6v8.6h-8.6z"/><path fill="#d4cec8" d="M103.2 0h8.6v8.6h-8.6zM653.6 0h8.6v8.6h-8.6zM928.8 0h8.6v8.6h-8.6zM1204 0h8.6v8.6h-8.6zM1229.8 0h8.6v8.6h-8.6zM1582.4 0h8.6v8.6h-8.6z"/><path fill="#cfc8c0" d="M120.4 0h8.6v8.6h-8.6zM197.8 0h8.6v8.6h-8.6zM232.2 0h8.6v8.6h-8.6zM946 0h8.6v8.6h-8.6zM1272.8 0h8.6v8.6h-8.6zM1556.6 0h8.6v8.6h-8.6zM1565.2 0h8.6v8.6h-8.6z"/><path fill="#d0ccc8" d="M129 0h8.6v8.6h-8.6zM524.6 0h8.6v8.6h-8.6zM610.6 0h8.6v8.6h-8.6zM1023.4 0h8.6v8.6h-8.6zM1066.4 0h8.6v8.6h-8.6zM1264.2 0h8.6v8.6h-8.6zM1333 0h8.6v8.6h-8.6zM1384.6 0h8.6v8.6h-8.6zM1419 0h8.6v8.6h-8.6z"/><path fill="#e0d8d0" d="M137.6 0h8.6v8.6h-8.6zM670.8 0h8.6v8.6h-8.6zM937.4 0h8.6v8.6h-8.6zM963.2 0h8.6v8.6h-8.6zM1367.4 0h8.6v8.6h-8.6z"/><path fill="#a8a0a0" d="M172 0h8.6v8.6h-8.6zM266.6 0h8.6v8.6h-8.6zM292.4 0h8.6v8.6h-8.6zM378.4 0h8.6v8.6h-8.6zM395.6 0h8.6v8.6h-8.6zM412.8 0h8.6v8.6h-8.6zM516 0h8.6v8.6h-8.6zM602 0h8.6v8.6h-8.6zM713.8 0h8.6v8.6h-8.6zM756.8 0h8.6v8.6h-8.6zM791.2 0h8.6v8.6h-8.6zM834.2 0h8.6v8.6h-8.6zM1092.2 0h8.6v8.6h-8.6zM1118 0h8.6v8.6h-8.6z"/><path fill="#dcd4cc" d="M180.6 0h8.6v8.6h-8.6zM722.4 0h8.6v8.6h-8.6zM885.8 0h8.6v8.6h-8.6zM903 0h8.6v8.6h-8.6zM1238.4 0h8.6v8.6h-8.6zM1281.4 0h8.6v8.6h-8.6zM1358.8 0h8.6v8.6h-8.6z"/><path fill="#9c9ca4" d="M215 0h8.6v8.6h-8.6zM1548 0h8.6v8.6h-8.6z"/><path fill="#d4bca8" d="M223.6 0h8.6v8.6h-8.6zM705.2 0h8.6v8.6h-8.6zM1014.8 0h8.6v8.6h-8.6z"/><path fill="#e8e4d8" d="M240.8 0h8.6v8.6h-8.6zM352.6 0h8.6v8.6h-8.6zM481.6 0h8.6v8.6h-8.6zM490.2 0h8.6v8.6h-8.6zM774 0h8.6v8.6h-8.6zM954.6 0h8.6v8.6h-8.6zM980.4 0h8.6v8.6h-8.6z"/><path fill="#c8c0b0" d="M258 0h8.6v8.6h-8.6zM275.2 0h8.6v8.6h-8.6zM619.2 0h8.6v8.6h-8.6zM1040.6 0h8.6v8.6h-8.6z"/><path fill="#c4beb8" d="M283.8 0h8.6v8.6h-8.6zM808.4 0h8.6v8.6h-8.6zM911.6 0h8.6v8.6h-8.6z"/><path fill="#ac9498" d="M335.4 0h8.6v8.6h-8.6zM464.4 0h8.6v8.6h-8.6zM920.2 0h8.6v8.6h-8.6zM1298.6 0h8.6v8.6h-8.6zM1427.6 0h8.6v8.6h-8.6zM1599.6 0h8.6v8.6h-8.6z"/><path fill="#d0c6bc" d="M541.8 0h8.6v8.6h-8.6zM662.2 0h8.6v8.6h-8.6zM971.8 0h8.6v8.6h-8.6zM1075 0h8.6v8.6h-8.6zM1436.2 0h8.6v8.6h-8.6zM1453.4 0h8.6v8.6h-8.6z"/><path fill="#fdf6ee" d="M559 0h8.6v8.6h-8.6zM567.6 0h8.6v8.6h-8.6zM576.2 0h8.6v8.6h-8.6zM584.8 0h8.6v8.6h-8.6z"/><path fill="#dad2ca" d="M627.8 0h8.6v8.6h-8.6zM636.4 0h8.6v8.6h-8.6zM782.6 0h8.6v8.6h-8.6zM1057.8 0h8.6v8.6h-8.6zM1083.6 0h8.6v8.6h-8.6zM1143.8 0h8.6v8.6h-8.6zM1470.6 0h8.6v8.6h-8.6z"/><path fill="#b8a8a0" d="M739.6 0h8.6v8.6h-8.6zM817 0h8.6v8.6h-8.6zM851.4 0h8.6v8.6h-8.6zM1152.4 0h8.6v8.6h-8.6z"/><path fill="#e4dcd2" d="M1032 0h8.6v8.6h-8.6z"/></svg>
</div>
<div class="b" style="left:447px;top:829px;width:1651px;height:5.3px;overflow:hidden">
<svg class="ic" shape-rendering="crispEdges" style="left:0px;top:0px" width="1651" height="8.6" viewBox="0 0 1651 8.6"><path fill="#ccccc4" d="M0 0h8.6v8.6h-8.6zM111.8 0h8.6v8.6h-8.6zM765.4 0h8.6v8.6h-8.6zM825.6 0h8.6v8.6h-8.6zM842.8 0h8.6v8.6h-8.6zM1221.2 0h8.6v8.6h-8.6zM1393.2 0h8.6v8.6h-8.6zM1591 0h8.6v8.6h-8.6z"/><path fill="#d8d0c8" d="M8.6 0h8.6v8.6h-8.6zM94.6 0h8.6v8.6h-8.6zM189.2 0h8.6v8.6h-8.6zM326.8 0h8.6v8.6h-8.6zM541.8 0h8.6v8.6h-8.6zM662.2 0h8.6v8.6h-8.6zM696.6 0h8.6v8.6h-8.6zM971.8 0h8.6v8.6h-8.6zM989 0h8.6v8.6h-8.6zM1006.2 0h8.6v8.6h-8.6zM1075 0h8.6v8.6h-8.6zM1126.6 0h8.6v8.6h-8.6zM1247 0h8.6v8.6h-8.6zM1410.4 0h8.6v8.6h-8.6zM1436.2 0h8.6v8.6h-8.6zM1453.4 0h8.6v8.6h-8.6z"/><path fill="#d4c8b8" d="M17.2 0h8.6v8.6h-8.6zM146.2 0h8.6v8.6h-8.6zM369.8 0h8.6v8.6h-8.6zM387 0h8.6v8.6h-8.6zM645 0h8.6v8.6h-8.6zM1161 0h8.6v8.6h-8.6zM1178.2 0h8.6v8.6h-8.6z"/><path fill="#d8d4d0" d="M25.8 0h8.6v8.6h-8.6zM103.2 0h8.6v8.6h-8.6zM301 0h8.6v8.6h-8.6zM309.6 0h8.6v8.6h-8.6zM627.8 0h8.6v8.6h-8.6zM636.4 0h8.6v8.6h-8.6zM653.6 0h8.6v8.6h-8.6zM748.2 0h8.6v8.6h-8.6zM782.6 0h8.6v8.6h-8.6zM928.8 0h8.6v8.6h-8.6zM997.6 0h8.6v8.6h-8.6zM1057.8 0h8.6v8.6h-8.6zM1083.6 0h8.6v8.6h-8.6zM1143.8 0h8.6v8.6h-8.6zM1204 0h8.6v8.6h-8.6zM1229.8 0h8.6v8.6h-8.6zM1255.6 0h8.6v8.6h-8.6zM1290 0h8.6v8.6h-8.6zM1470.6 0h8.6v8.6h-8.6zM1479.2 0h8.6v8.6h-8.6zM1582.4 0h8.6v8.6h-8.6z"/><path fill="#d8c8bc" d="M34.4 0h8.6v8.6h-8.6zM344 0h8.6v8.6h-8.6zM421.4 0h8.6v8.6h-8.6zM447.2 0h8.6v8.6h-8.6zM799.8 0h8.6v8.6h-8.6zM894.4 0h8.6v8.6h-8.6zM1100.8 0h8.6v8.6h-8.6zM1376 0h8.6v8.6h-8.6zM1462 0h8.6v8.6h-8.6z"/><path fill="#e4e0dc" d="M43 0h8.6v8.6h-8.6zM154.8 0h8.6v8.6h-8.6zM1324.4 0h8.6v8.6h-8.6zM1444.8 0h8.6v8.6h-8.6zM1496.4 0h8.6v8.6h-8.6z"/><path fill="#e0dcd4" d="M51.6 0h8.6v8.6h-8.6zM163.4 0h8.6v8.6h-8.6zM240.8 0h8.6v8.6h-8.6zM352.6 0h8.6v8.6h-8.6zM361.2 0h8.6v8.6h-8.6zM404.2 0h8.6v8.6h-8.6zM473 0h8.6v8.6h-8.6zM481.6 0h8.6v8.6h-8.6zM490.2 0h8.6v8.6h-8.6zM774 0h8.6v8.6h-8.6zM954.6 0h8.6v8.6h-8.6zM980.4 0h8.6v8.6h-8.6zM1513.6 0h8.6v8.6h-8.6z"/><path fill="#c4c0c4" d="M60.2 0h8.6v8.6h-8.6zM206.4 0h8.6v8.6h-8.6zM249.4 0h8.6v8.6h-8.6zM430 0h8.6v8.6h-8.6zM455.8 0h8.6v8.6h-8.6zM507.4 0h8.6v8.6h-8.6zM731 0h8.6v8.6h-8.6zM860 0h8.6v8.6h-8.6zM877.2 0h8.6v8.6h-8.6zM1186.8 0h8.6v8.6h-8.6zM1307.2 0h8.6v8.6h-8.6zM1350.2 0h8.6v8.6h-8.6zM1573.8 0h8.6v8.6h-8.6z"/><path fill="#d0c8c0" d="M68.8 0h8.6v8.6h-8.6zM438.6 0h8.6v8.6h-8.6zM593.4 0h8.6v8.6h-8.6zM1169.6 0h8.6v8.6h-8.6zM1195.4 0h8.6v8.6h-8.6zM1401.8 0h8.6v8.6h-8.6zM1487.8 0h8.6v8.6h-8.6zM1505 0h8.6v8.6h-8.6zM1539.4 0h8.6v8.6h-8.6z"/><path fill="#c8c4c0" d="M77.4 0h8.6v8.6h-8.6zM498.8 0h8.6v8.6h-8.6zM533.2 0h8.6v8.6h-8.6zM679.4 0h8.6v8.6h-8.6zM868.6 0h8.6v8.6h-8.6zM1135.2 0h8.6v8.6h-8.6zM1341.6 0h8.6v8.6h-8.6zM1530.8 0h8.6v8.6h-8.6z"/><path fill="#dcd8d8" d="M86 0h8.6v8.6h-8.6zM318.2 0h8.6v8.6h-8.6zM550.4 0h8.6v8.6h-8.6zM688 0h8.6v8.6h-8.6zM1049.2 0h8.6v8.6h-8.6zM1109.4 0h8.6v8.6h-8.6zM1212.6 0h8.6v8.6h-8.6zM1315.8 0h8.6v8.6h-8.6zM1522.2 0h8.6v8.6h-8.6z"/><path fill="#d8d0cc" d="M120.4 0h8.6v8.6h-8.6zM197.8 0h8.6v8.6h-8.6zM232.2 0h8.6v8.6h-8.6zM946 0h8.6v8.6h-8.6zM1272.8 0h8.6v8.6h-8.6zM1556.6 0h8.6v8.6h-8.6zM1565.2 0h8.6v8.6h-8.6z"/><path fill="#d8d0d0" d="M129 0h8.6v8.6h-8.6zM524.6 0h8.6v8.6h-8.6zM610.6 0h8.6v8.6h-8.6zM1023.4 0h8.6v8.6h-8.6zM1066.4 0h8.6v8.6h-8.6zM1264.2 0h8.6v8.6h-8.6zM1333 0h8.6v8.6h-8.6zM1384.6 0h8.6v8.6h-8.6zM1419 0h8.6v8.6h-8.6z"/><path fill="#dcd8d0" d="M137.6 0h8.6v8.6h-8.6zM670.8 0h8.6v8.6h-8.6zM937.4 0h8.6v8.6h-8.6zM963.2 0h8.6v8.6h-8.6zM1367.4 0h8.6v8.6h-8.6z"/><path fill="#c8c0c0" d="M172 0h8.6v8.6h-8.6zM266.6 0h8.6v8.6h-8.6zM292.4 0h8.6v8.6h-8.6zM378.4 0h8.6v8.6h-8.6zM395.6 0h8.6v8.6h-8.6zM412.8 0h8.6v8.6h-8.6zM516 0h8.6v8.6h-8.6zM602 0h8.6v8.6h-8.6zM713.8 0h8.6v8.6h-8.6zM756.8 0h8.6v8.6h-8.6zM791.2 0h8.6v8.6h-8.6zM834.2 0h8.6v8.6h-8.6zM1092.2 0h8.6v8.6h-8.6zM1118 0h8.6v8.6h-8.6z"/><path fill="#dcd4d0" d="M180.6 0h8.6v8.6h-8.6zM722.4 0h8.6v8.6h-8.6zM885.8 0h8.6v8.6h-8.6zM903 0h8.6v8.6h-8.6zM1238.4 0h8.6v8.6h-8.6zM1281.4 0h8.6v8.6h-8.6zM1358.8 0h8.6v8.6h-8.6z"/><path fill="#c0c0c0" d="M215 0h8.6v8.6h-8.6zM1548 0h8.6v8.6h-8.6z"/><path fill="#d8ccc0" d="M223.6 0h8.6v8.6h-8.6zM705.2 0h8.6v8.6h-8.6zM1014.8 0h8.6v8.6h-8.6z"/><path fill="#d4ccc4" d="M258 0h8.6v8.6h-8.6zM275.2 0h8.6v8.6h-8.6zM619.2 0h8.6v8.6h-8.6zM1040.6 0h8.6v8.6h-8.6z"/><path fill="#d0ccc8" d="M283.8 0h8.6v8.6h-8.6zM808.4 0h8.6v8.6h-8.6zM911.6 0h8.6v8.6h-8.6z"/><path fill="#c8bcbc" d="M335.4 0h8.6v8.6h-8.6zM464.4 0h8.6v8.6h-8.6zM920.2 0h8.6v8.6h-8.6zM1298.6 0h8.6v8.6h-8.6zM1427.6 0h8.6v8.6h-8.6zM1599.6 0h8.6v8.6h-8.6z"/><path fill="#fdf6ee" d="M559 0h8.6v8.6h-8.6zM567.6 0h8.6v8.6h-8.6zM576.2 0h8.6v8.6h-8.6zM584.8 0h8.6v8.6h-8.6z"/><path fill="#ccc4c0" d="M739.6 0h8.6v8.6h-8.6zM817 0h8.6v8.6h-8.6zM851.4 0h8.6v8.6h-8.6zM1152.4 0h8.6v8.6h-8.6z"/><path fill="#e0d8d0" d="M1032 0h8.6v8.6h-8.6z"/></svg>
</div>
<div class="b" style="left:2058.00px;top:824.50px;width:40.00px;height:19.00px;background:#fff8f0;"></div>
<div class="m" style="left:2058.00px;top:827.70px;">rbh</div>
<svg class="ic" style="left:0;top:0" width="2098" height="1432" viewBox="0 0 2098 1432"><path d="M1315.4 310.3 L917.8 1036.7" stroke="#fe1508" stroke-width="11.8" stroke-linecap="round" fill="none"/><path d="M914.1 1031.3 L908.9 1021.6 L906.3 1057.8 L937.2 1036.3 L924.4 1036.9 Z" fill="#fe1508"/></svg>
<span class="t" style="left:349px;top:1144px;font-size:27.5px;line-height:36px;font-weight:bold;color:#f51a12;font-family:'Liberation Sans',sans-serif;transform:scaleX(0.905);transform-origin:0 0;letter-spacing:-0.3px">Steam JWT</span>
</body></html>
